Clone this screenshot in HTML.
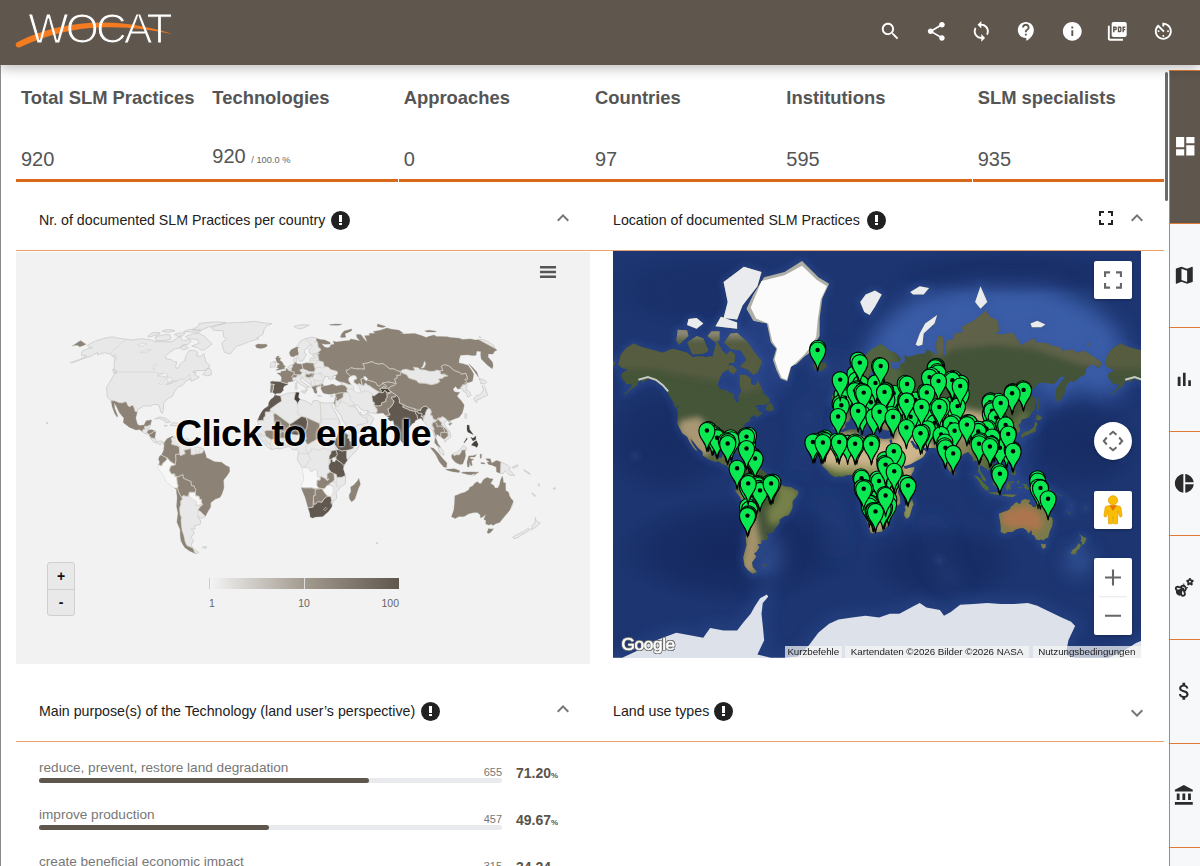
<!DOCTYPE html>
<html lang="en">
<head>
<meta charset="utf-8">
<title>WOCAT SLM Dashboard</title>
<style>
*{box-sizing:border-box;margin:0;padding:0}
html,body{width:1200px;height:866px;overflow:hidden;background:#fff}
body{font-family:"Liberation Sans",sans-serif;color:#212121;position:relative}
.abs{position:absolute}
#hdr{left:0;top:0;width:1200px;height:65px;background:#5f574e;box-shadow:0 3px 12px rgba(0,0,0,.27);z-index:5}
#leftedge{left:0;top:65px;width:1px;height:801px;background:#8a8a8a;z-index:6}
.hic{position:absolute;top:19.700px;width:22.600px;height:22.600px;fill:#fff}
.stat{position:absolute;top:72px;height:110px;width:191.33px;border-bottom:3px solid #d9681a}
.stat h3{position:absolute;left:5px;top:15px;font-size:18.4px;font-weight:bold;color:#555;white-space:nowrap;line-height:22px}
.stat .v{position:absolute;left:5px;top:76px;font-size:20px;color:#555;white-space:nowrap;line-height:22px}
.stat .v small{font-size:9.3px;color:#666;margin-left:0px}
.sech{position:absolute;font-size:14.2px;color:#212121;white-space:nowrap;line-height:18px}
.info{position:absolute;width:19px;height:19px;border-radius:50%;background:#212121}
.info:before{content:"";position:absolute;left:7.800px;top:4.200px;width:3.400px;height:7px;background:#fff}
.info:after{content:"";position:absolute;left:7.800px;top:12.200px;width:3.400px;height:2.200px;background:#fff}
.oline{position:absolute;height:1px;background:#e8a06c}
.chev{position:absolute;width:24px;height:24px;fill:#757575}
#side{left:1169px;top:70px;width:31px;height:796px}
.tab{position:absolute;left:0;width:31px;height:105px;border:1px solid #dd7a33;border-left-width:1.500px;border-right:none;background:#f7f8fa}
.tab svg{position:absolute;left:3.200px;width:22.600px;height:22.600px;fill:#2b2b2b}
.bar{position:absolute;left:39px;width:463px;height:5px;border-radius:3px;background:#e8eaee}
.bar i{position:absolute;left:0;top:0;height:5px;border-radius:3px;background:#5f574e}
.bl{position:absolute;left:39px;font-size:13.6px;color:#777;white-space:nowrap;line-height:16px}
.bn{position:absolute;width:40px;text-align:right;left:462px;font-size:11px;color:#777;line-height:14px}
.bp{position:absolute;left:516px;font-size:14px;font-weight:bold;color:#5a534b;white-space:nowrap;line-height:16px}
.bp small{font-size:8px;font-weight:bold}
.gat{top:394.5px;height:12.5px;background:rgba(245,245,245,.72);font-size:9.800px;line-height:12.500px;color:#222;text-align:center;white-space:nowrap;letter-spacing:-.05px}
</style>
</head>
<body>
<div id="hdr" class="abs">
<svg class="abs" style="left:0;top:0" width="200" height="64" viewBox="0 0 200 64">
<defs><mask id="wm" maskUnits="userSpaceOnUse" x="0" y="0" width="200" height="64"><text x="28.300" y="43.100" font-family="'Liberation Sans',sans-serif" font-size="42.600" letter-spacing="-2.800" fill="#fff" stroke="#000" stroke-width="1.150">WOCAT</text></mask></defs>
<path d="M15.800,45.600 C15.200,43.600 16.400,42.400 18.600,41.400 C44,29 74,22.300 104,22.600 C130,23 152,27.600 173,34.200 C152,29.800 130,26.600 104,27.200 C76,27.600 46,35 20.500,46.900 C18.400,47.900 16.400,47.500 15.800,45.600Z" fill="#f47b20"/>
<rect x="0" y="0" width="200" height="64" fill="#fff" mask="url(#wm)"/>
</svg>

<svg class="hic" style="left:879.1px" viewBox="0 0 24 24"><path d="M15.5 14h-.79l-.28-.27C15.41 12.590 16 11.110 16 9.500 16 5.910 13.090 3 9.500 3S3 5.910 3 9.500 5.910 16 9.500 16c1.610 0 3.090-.59 4.230-1.570l.27.280v.79l5 4.990L20.490 19l-4.990-5zm-6 0C7.010 14 5 11.990 5 9.500S7.010 5 9.500 5 14 7.010 14 9.500 11.990 14 9.500 14z"/></svg>
<svg class="hic" style="left:925.3px" viewBox="0 0 24 24"><path d="M18 16.080c-.76 0-1.440.3-1.960.77L8.910 12.700c.05-.23.090-.46.090-.7s-.04-.47-.09-.7l7.050-4.110c.54.5 1.250.81 2.040.81 1.660 0 3-1.340 3-3s-1.340-3-3-3-3 1.340-3 3c0 .24.040.47.090.7L8.040 9.810C7.500 9.310 6.790 9 6 9c-1.660 0-3 1.340-3 3s1.340 3 3 3c.79 0 1.500-.31 2.040-.81l7.120 4.160c-.05.21-.08.43-.08.65 0 1.610 1.310 2.920 2.920 2.920 1.610 0 2.920-1.310 2.920-2.920s-1.310-2.920-2.920-2.920z"/></svg>
<svg class="hic" style="left:970.3px" viewBox="0 0 24 24"><path d="M12 4V1L8 5l4 4V6c3.310 0 6 2.690 6 6 0 1.010-.25 1.970-.7 2.800l1.460 1.460C19.540 15.030 20 13.570 20 12c0-4.420-3.580-8-8-8zm0 14c-3.310 0-6-2.690-6-6 0-1.010.25-1.970.7-2.800L5.240 7.740C4.460 8.970 4 10.430 4 12c0 4.420 3.580 8 8 8v3l4-4-4-4v3z"/></svg>
<svg class="hic" style="left:1015.3px" viewBox="0 0 24 24"><path d="M11.500 2C6.810 2 3 5.810 3 10.500S6.810 19 11.500 19h.5v3c4.860-2.340 8-7 8-11.500C20 5.810 16.190 2 11.500 2zm1 14.500h-2v-2h2v2zm0-3.500h-2c0-3.250 3-3 3-5 0-1.100-.9-2-2-2s-2 .9-2 2h-2c0-2.210 1.790-4 4-4s4 1.790 4 4c0 2.500-3 2.750-3 5z"/></svg>
<svg class="hic" style="left:1060.6px" viewBox="0 0 24 24"><path d="M12 2C6.480 2 2 6.480 2 12s4.480 10 10 10 10-4.480 10-10S17.520 2 12 2zm1 15h-2v-6h2v6zm0-8h-2V7h2v2z"/></svg>
<svg class="hic" style="left:1106.2px" viewBox="0 0 24 24"><path d="M20 2H8c-1.100 0-2 .9-2 2v12c0 1.100.9 2 2 2h12c1.100 0 2-.9 2-2V4c0-1.100-.9-2-2-2zm-8.500 7.500c0 .83-.67 1.500-1.500 1.500H9v2H7.500V7H10c.83 0 1.500.67 1.500 1.500v1zm5 2c0 .83-.67 1.500-1.500 1.500h-2.500V7H15c.83 0 1.500.67 1.500 1.500v3zm4-3H19v1h1.500V11H19v2h-1.500V7h3v1.500zM9 9.500h1v-1H9v1zM4 6H2v14c0 1.100.9 2 2 2h14v-2H4V6zm10 5.500h1v-3h-1v3z"/></svg>
<svg class="hic" style="left:1151.8px" viewBox="0 0 24 24"><path d="M11 17c0 .55.450 1 1 1s1-.45 1-1-.45-1-1-1-1 .45-1 1zm0-14v4h2V5.080c3.390.49 6 3.390 6 6.920 0 3.870-3.130 7-7 7s-7-3.130-7-7c0-1.680.59-3.220 1.580-4.420L12 13l1.410-1.410-6.800-6.800v.020C4.420 6.450 3 9.050 3 12c0 4.970 4.020 9 9 9 4.970 0 9-4.030 9-9s-4.030-9-9-9h-1zm7 9c0-.55-.45-1-1-1s-1 .45-1 1 .45 1 1 1 1-.45 1-1zM6 12c0 .55.450 1 1 1s1-.45 1-1-.45-1-1-1-1 .45-1 1z"/></svg>

</div>
<div id="leftedge" class="abs"></div>

<div class="stat" style="left:16px"><h3>Total SLM Practices</h3><div class="v">920</div></div>
<div class="stat" style="left:207.33px"><h3>Technologies</h3><div class="v" style="top:73px">920 <small>/ 100.0 %</small></div></div>
<div class="stat" style="left:398.67px"><h3>Approaches</h3><div class="v">0</div></div>
<div class="stat" style="left:590px"><h3>Countries</h3><div class="v">97</div></div>
<div class="stat" style="left:781.33px"><h3>Institutions</h3><div class="v">595</div></div>
<div class="stat" style="left:972.67px;width:191.33px"><h3>SLM specialists</h3><div class="v">935</div></div>
<div class="abs" style="left:398px;top:178px;width:1px;height:6px;background:#fff"></div>
<div class="abs" style="left:972px;top:178px;width:1px;height:6px;background:#fff"></div>

<!-- section 1 headers -->
<div class="sech" style="left:39px;top:211px">Nr. of documented SLM Practices per country</div>
<div class="info" style="left:331px;top:211px"></div>
<svg class="chev" style="left:551px;top:206px" viewBox="0 0 24 24"><path d="M7.41 15.41L12 10.83l4.59 4.58L18 14l-6-6-6 6z"/></svg>
<div class="sech" style="left:613px;top:211px">Location of documented SLM Practices</div>
<div class="info" style="left:867px;top:211px"></div>
<svg class="chev" style="left:1125px;top:206px" viewBox="0 0 24 24"><path d="M7.41 15.41L12 10.83l4.59 4.58L18 14l-6-6-6 6z"/></svg>
<svg class="abs" style="left:1093.500px;top:205.500px;width:24px;height:24px;fill:#222" viewBox="0 0 24 24"><path d="M7 14H5v5h5v-2H7v-3zm-2-4h2V7h3V5H5v5zm12 7h-3v2h5v-5h-2v3zM14 5v2h3v3h2V5h-5z"/></svg>
<div class="oline" style="left:16px;top:250px;width:1148px"></div>

<!-- choropleth -->
<div id="cmap" class="abs" style="left:16px;top:252px;width:574px;height:411.500px;background:#f2f2f2">
<svg class="abs" style="left:0;top:0" width="574" height="411" viewBox="0 0 574 411">
<defs><clipPath id="landclip"><path d="M71.4,93.2 79.8,88.9 87.9,86.4 96.3,84.8 101.6,86.1 110.0,87.2 115.7,88.1 125.2,86.7 131.1,87.4 135.9,88.1 138.6,89.9 144.6,89.6 150.0,89.9 156.0,89.6 164.4,83.8 165.7,87.4 167.9,88.9 172.4,87.4 175.2,88.9 172.3,92.3 167.4,92.6 164.1,95.7 158.3,97.2 153.6,100.4 149.3,104.1 150.0,106.8 155.2,107.6 157.9,109.6 160.9,110.1 159.6,113.8 160.4,116.3 162.5,115.9 164.5,111.8 168.8,108.5 169.7,104.4 173.2,98.3 178.5,98.5 181.8,100.4 180.6,103.9 184.7,104.4 187.6,101.5 189.0,106.0 189.9,110.1 192.9,112.6 193.7,115.1 188.2,118.5 180.1,118.5 176.8,120.1 180.2,120.1 178.7,122.7 183.3,125.3 179.2,127.7 175.2,129.4 174.5,127.0 169.6,129.2 167.8,132.1 165.3,133.9 162.2,134.7 158.8,139.1 156.6,144.3 152.4,146.4 147.8,150.4 147.3,158.3 146.3,161.4 144.6,160.0 143.9,156.5 142.7,153.0 139.9,152.5 136.9,152.5 134.2,154.4 132.1,153.9 127.7,153.9 121.9,157.4 119.7,166.1 121.4,172.2 123.5,173.6 128.1,173.1 130.2,168.7 135.6,167.9 134.1,174.0 131.7,177.5 135.9,177.8 139.9,179.2 138.7,186.2 141.1,189.7 145.0,188.8 148.3,190.6 147.9,192.8 146.4,190.6 144.0,192.7 141.8,191.4 138.7,190.6 135.5,187.9 133.1,182.7 127.9,181.0 123.7,177.5 119.8,178.0 113.3,175.2 107.2,170.5 107.9,166.1 103.6,160.9 100.2,153.9 98.0,150.4 98.7,156.5 101.6,163.5 101.3,165.3 98.9,161.8 96.2,154.8 95.2,148.7 91.4,145.2 90.8,139.9 90.6,135.1 93.6,130.4 97.0,124.7 98.3,121.2 101.2,120.1 98.2,116.8 98.2,110.9 98.9,105.2 96.2,104.1 94.6,102.0 88.5,100.7 81.4,102.8 81.5,100.4 74.6,104.4 66.9,106.8 58.3,110.1 54.1,110.8 63.5,107.6 70.8,103.9 65.5,103.6 65.7,100.4 66.4,98.8 70.2,97.2 76.4,95.7 72.6,94.9Z M194.9,75.6 202.0,73.2 211.6,70.9 225.9,70.4 238.3,69.4 248.7,70.9 256.0,71.7 250.8,73.8 248.0,77.6 247.0,82.4 240.8,85.9 242.9,86.7 233.2,89.6 225.4,92.9 220.4,94.1 214.2,102.0 208.6,100.4 206.8,95.7 205.8,91.1 210.7,86.7 207.3,84.5 207.4,78.9 197.6,78.2Z M182.5,81.4 188.8,84.5 192.0,88.1 196.3,91.9 189.4,97.2 185.3,98.3 181.9,95.7 175.8,94.1 183.4,91.1 181.3,87.4 172.9,86.7 169.7,84.5 177.0,81.7Z M175.8,77.6 185.6,78.0 192.5,75.0 205.9,72.0 210.2,70.4 198.8,69.9 183.1,71.4 182.4,74.4Z M139.7,84.5 139.6,88.9 149.0,88.6 154.5,87.4 154.3,83.1 149.7,82.4Z M131.9,83.8 132.4,85.2 143.2,82.4 144.2,80.7 137.0,80.6Z M167.5,79.6 183.5,80.3 185.0,78.7 174.1,77.3Z M146.0,79.3 152.1,80.3 158.9,78.9 155.5,77.6 149.0,77.8Z M158.2,82.4 162.6,84.5 166.5,83.8 169.2,81.0 162.9,81.0Z M165.2,94.1 169.2,93.4 172.4,95.7 167.4,98.0 164.8,96.5Z M186.6,122.4 191.3,123.9 195.4,122.7 195.3,119.3 193.4,115.9 190.5,117.6Z M96.6,117.1 99.7,118.5 100.2,121.2 97.6,120.5Z M138.8,167.0 143.6,164.9 149.5,166.1 154.7,170.1 149.7,170.7 149.1,168.7 143.4,166.5Z M154.1,173.1 157.3,170.7 162.5,171.4 163.2,173.1 159.2,174.0Z M148.2,173.3 151.2,173.5 150.8,174.3 148.2,174.0Z M165.1,173.1 167.3,173.3 167.1,174.0 165.0,174.0Z M148.3,190.6 151.3,186.5 156.8,184.1 157.4,186.2 159.9,184.5 162.8,187.1 168.9,187.1 172.0,186.7 174.9,190.6 179.4,194.9 184.0,195.3 187.8,197.5 190.1,203.7 190.1,205.4 193.2,207.1 198.6,209.8 205.5,210.3 210.2,213.8 213.3,215.0 213.7,219.4 210.5,224.6 207.5,228.1 207.9,235.9 205.9,242.1 203.9,245.5 199.5,246.9 194.6,250.8 194.6,255.1 191.9,259.5 189.1,264.8 185.7,266.5 181.8,264.8 184.8,269.1 184.1,272.6 178.6,273.5 179.1,276.9 175.2,276.9 178.2,280.0 176.6,283.8 174.4,285.5 177.6,288.1 175.1,293.2 177.1,296.5 183.0,300.4 179.3,301.5 173.6,299.0 168.9,295.7 164.7,289.0 164.2,282.1 164.2,277.8 160.9,270.0 162.0,261.3 160.6,254.3 161.2,245.5 160.3,237.3 155.9,234.2 150.4,229.8 147.3,222.9 141.9,215.9 142.3,212.9 143.8,210.6 142.5,207.1 143.7,204.0 145.6,202.8 147.7,198.4 148.2,193.2Z M186.4,294.9 190.3,294.5 190.2,296.2 186.8,296.0Z M258.7,142.9 264.4,144.0 271.6,141.2 281.7,140.3 283.2,140.8 282.2,145.2 284.2,147.4 289.8,149.0 295.5,152.5 297.0,148.8 301.1,148.5 304.2,150.1 310.2,151.3 315.0,150.8 317.8,150.8 315.5,153.2 318.2,158.3 321.1,163.7 323.7,168.7 324.2,172.8 327.2,178.3 333.6,183.6 333.8,185.3 335.7,187.2 339.5,185.8 345.9,184.8 345.5,188.8 341.4,197.5 335.3,203.7 331.4,208.5 328.3,213.3 327.1,216.7 328.1,219.4 329.6,223.7 329.4,231.6 323.7,235.9 320.1,240.3 320.8,246.4 316.6,249.9 315.7,255.1 312.4,259.5 306.8,264.4 299.4,265.1 296.5,266.1 294.3,265.1 293.8,261.3 291.9,255.1 289.2,245.5 285.6,236.8 285.3,233.3 288.2,227.2 287.3,221.1 286.1,215.9 281.2,207.1 282.0,203.7 282.4,199.3 280.9,197.5 276.6,197.9 274.2,194.4 268.8,195.3 264.2,197.0 260.4,196.3 255.7,197.7 252.6,195.8 249.6,193.4 247.0,189.7 244.2,186.5 241.7,183.9 240.5,179.7 242.4,176.6 242.2,171.4 241.5,168.7 243.2,164.4 245.6,160.0 247.9,157.0 252.4,153.9 252.8,150.4 254.8,147.3 257.8,145.2Z M343.0,226.3 344.5,232.5 342.7,235.9 338.9,247.3 335.6,249.9 333.2,246.4 333.1,242.9 334.9,239.4 334.4,235.1 337.6,233.0 340.8,229.5Z M254.4,137.9 254.9,133.0 254.4,130.1 256.1,129.2 262.4,129.6 265.2,129.6 265.6,125.3 263.9,123.0 260.9,121.2 265.3,120.7 264.9,119.0 267.6,119.3 269.4,117.1 271.9,116.1 273.5,113.4 276.4,112.6 278.4,111.8 277.8,109.3 277.7,106.8 280.5,105.7 280.7,108.5 280.3,110.9 281.6,111.8 285.8,111.9 291.2,110.6 293.2,111.1 294.3,109.3 293.9,106.8 295.7,105.7 298.1,106.5 297.8,104.7 296.5,103.3 300.8,102.8 304.3,102.1 302.3,101.0 295.7,102.1 293.4,100.9 293.1,97.2 296.6,94.1 295.2,92.9 293.0,93.4 292.5,95.2 288.4,98.3 288.4,100.9 290.5,102.3 288.1,106.0 287.7,108.1 285.7,109.3 284.0,109.3 281.8,105.2 280.6,103.1 277.3,105.0 274.4,104.1 273.4,100.4 275.1,97.7 279.2,95.7 282.3,92.2 284.3,89.2 288.4,86.9 292.7,85.9 295.6,85.1 298.6,85.5 301.7,86.7 304.2,87.5 308.9,88.1 314.1,90.4 314.1,92.0 309.0,92.2 305.3,91.6 308.7,95.2 311.8,95.7 314.4,94.8 314.4,92.9 318.3,92.3 317.1,89.2 320.2,89.9 327.7,88.9 333.7,88.4 334.6,86.9 339.0,87.8 344.1,88.9 340.8,85.2 340.6,82.4 345.0,82.7 346.8,85.2 350.2,89.6 350.9,88.9 348.6,83.8 353.6,83.4 353.2,81.5 359.3,81.3 357.3,79.6 364.6,78.2 371.0,76.0 375.7,77.3 383.1,78.2 387.4,81.3 383.7,81.3 387.7,82.0 392.8,81.8 398.7,81.4 406.0,83.8 410.2,85.5 412.5,84.6 418.0,83.1 420.3,84.4 431.2,84.8 434.4,85.5 443.2,86.2 446.5,87.4 454.3,86.9 459.4,88.1 465.0,87.4 470.0,88.4 478.6,94.1 477.8,95.2 481.0,98.0 478.3,99.6 477.0,102.0 472.1,102.0 472.2,105.2 476.3,110.1 477.1,113.4 476.3,116.8 471.8,113.4 465.1,106.8 464.7,102.0 464.9,99.6 460.7,99.1 460.0,103.3 456.6,103.6 451.4,102.8 444.4,103.3 443.1,107.6 442.8,110.9 446.8,111.8 452.2,113.4 455.0,117.6 457.6,121.8 457.2,125.3 456.4,129.2 452.9,130.4 450.6,131.3 451.2,134.7 449.6,136.5 453.6,139.9 455.2,143.4 451.9,145.2 450.0,140.8 447.0,139.1 445.9,136.3 441.7,137.0 439.6,134.2 436.9,137.3 438.8,139.9 443.8,140.5 442.1,142.6 441.1,144.3 445.2,148.7 448.2,153.0 447.3,157.4 446.1,161.2 443.1,165.3 439.6,166.5 434.6,168.4 433.4,170.0 430.7,167.7 428.3,171.4 429.9,174.9 434.1,180.1 435.1,184.8 431.8,187.2 428.9,190.2 428.4,187.4 425.2,185.3 422.2,183.1 420.6,182.0 419.9,186.2 421.9,191.4 426.7,198.4 428.2,203.0 427.0,203.0 423.7,200.5 422.0,194.9 418.6,190.6 418.9,185.3 416.6,178.3 414.6,176.6 411.3,177.5 410.8,173.1 407.1,168.7 404.8,166.1 401.9,167.3 399.1,168.7 398.6,170.5 396.4,171.4 392.9,176.2 389.9,178.3 390.3,182.7 390.0,187.4 387.7,189.9 386.7,191.3 384.7,188.5 382.0,182.7 379.3,176.6 377.9,171.9 377.4,168.4 374.1,169.1 371.6,166.5 373.4,165.3 370.3,164.0 368.1,162.1 367.2,161.1 360.0,161.4 353.3,160.7 351.8,158.3 348.2,159.0 344.2,156.7 341.5,153.0 339.2,153.0 338.9,154.1 342.2,158.8 343.7,162.1 344.6,160.2 345.6,163.2 349.0,163.0 351.7,159.7 352.5,162.8 355.8,164.4 357.7,166.3 355.2,172.2 351.4,174.9 347.0,177.5 341.9,181.0 336.3,183.1 334.0,183.2 332.6,179.2 331.4,175.7 329.1,171.4 326.3,167.9 325.3,163.9 322.3,160.0 319.5,156.5 319.0,153.9 317.8,150.8 318.7,147.8 319.5,142.6 319.6,141.2 315.1,142.2 311.5,142.0 307.8,141.3 306.6,139.9 304.9,136.8 305.4,134.7 308.4,133.9 311.9,133.5 316.6,132.1 320.4,133.9 325.9,133.0 325.5,130.9 321.6,128.7 319.2,127.0 320.6,123.2 315.8,124.6 317.7,126.5 313.8,127.8 312.2,126.1 313.4,125.1 309.8,124.2 308.4,126.6 307.2,129.0 306.4,131.3 307.6,133.4 304.5,134.2 301.3,134.2 301.5,135.6 299.7,134.7 301.1,139.1 300.6,141.7 298.3,140.8 297.3,137.3 294.9,134.7 294.8,132.5 291.8,130.4 288.6,128.2 287.1,126.6 286.1,125.8 284.3,126.5 284.6,128.3 286.6,129.9 289.9,132.3 293.6,135.3 291.4,134.7 290.9,136.5 291.6,137.3 290.6,139.1 289.9,139.1 290.1,135.6 287.1,133.9 284.6,132.5 282.0,130.4 279.5,128.0 277.8,129.0 274.3,129.7 271.8,130.1 271.8,132.5 268.4,133.9 266.9,136.5 267.6,137.9 266.3,139.6 264.4,141.2 260.8,141.3 259.2,142.6 258.0,141.2 256.5,140.5 254.4,140.8Z M64.6,88.4 67.4,90.4 69.8,91.9 69.9,92.6 63.8,94.9 61.8,93.4 58.3,93.4 56.0,94.1Z M259.9,118.3 262.6,118.0 269.0,116.4 268.0,115.9 269.5,113.9 267.7,113.4 267.0,111.3 265.1,109.0 263.5,108.5 264.8,105.9 262.3,105.7 263.3,104.2 261.1,104.2 259.7,106.3 260.3,108.5 261.1,110.4 263.4,111.8 263.4,112.9 261.4,112.9 261.8,114.6 260.4,115.4 263.3,116.1Z M254.1,115.4 259.0,114.8 259.5,111.8 259.9,110.4 257.6,109.6 254.3,111.4 254.8,113.4Z M239.3,93.4 241.9,92.0 246.4,92.3 250.5,92.3 251.3,94.1 248.3,95.7 244.6,96.6 240.6,95.7Z M285.3,139.1 289.6,138.7 289.3,141.3 285.3,139.8Z M278.9,133.9 281.0,133.9 281.0,137.0 279.3,137.3Z M279.4,131.3 280.6,130.4 280.6,133.0 279.6,132.8Z M301.5,143.4 305.6,143.8 305.2,144.3 301.6,144.0Z M314.3,144.3 317.4,143.3 316.8,144.5 314.7,145.0Z M457.8,147.8 460.8,150.8 461.1,147.8 465.2,146.6 467.2,145.0 469.7,144.3 471.8,143.1 470.0,139.1 469.8,136.1 467.1,133.4 465.9,134.4 467.8,138.2 465.4,140.8 464.6,142.6 460.6,143.4 458.6,145.5Z M464.5,132.1 464.8,130.4 463.0,126.3 469.3,128.7 470.9,130.1 468.8,132.1 465.4,131.3Z M462.7,125.3 460.8,120.1 456.3,115.1 452.7,111.8 457.7,118.5Z M448.7,165.3 449.1,161.4 450.6,162.1 450.1,167.0Z M432.5,171.9 435.0,170.5 435.9,171.4 434.0,173.6Z M390.2,191.4 390.7,188.5 393.3,192.3 392.2,194.8 390.7,194.6Z M451.0,177.5 451.1,173.1 453.2,173.3 453.6,177.5 457.4,182.7 454.2,181.3 451.7,180.1Z M455.3,193.2 457.4,190.4 460.3,188.5 462.2,192.3 460.9,195.5 458.5,194.1Z M454.7,185.3 457.1,186.2 459.9,183.9 459.8,187.4 457.0,189.0Z M447.8,190.7 450.9,185.7 451.3,187.1 448.2,191.1Z M414.3,195.6 417.7,196.3 422.2,200.9 427.2,207.1 430.9,211.0 430.5,215.5 427.7,215.0 423.3,209.8 419.9,202.8Z M429.5,217.3 434.5,217.1 438.4,216.7 443.7,218.8 443.3,220.4 436.7,219.7 431.4,218.3Z M435.7,202.8 439.2,200.7 441.8,199.8 445.5,195.8 447.6,193.2 450.9,196.3 449.0,199.3 449.6,203.7 448.8,206.8 446.7,212.0 444.0,212.4 439.8,210.6 437.2,208.0 435.7,205.4Z M451.6,215.0 451.0,210.6 452.7,204.0 457.3,203.7 460.4,202.6 458.9,204.9 453.5,204.9 455.0,207.1 457.8,207.0 455.3,208.9 456.3,213.3 454.8,213.8 453.8,210.1 453.0,215.0Z M469.7,206.8 474.3,206.8 475.7,211.2 480.4,208.4 485.0,209.9 491.1,212.9 494.8,215.9 492.3,217.3 495.2,219.4 498.6,223.7 493.4,222.9 489.1,218.8 487.4,221.5 484.3,221.3 480.6,219.9 480.2,215.0 475.6,213.1 472.6,212.4 471.1,210.3 474.2,209.4 471.9,208.9Z M445.9,220.2 450.5,219.9 456.7,219.9 459.8,220.2 462.8,220.1 458.0,223.2 451.9,222.5 445.8,220.9Z M464.2,201.9 465.8,202.8 465.0,206.8 464.1,205.4Z M464.9,210.6 469.2,211.0 468.0,212.0 464.9,211.5Z M496.4,215.0 501.9,212.7 502.1,214.1 497.0,216.4Z M507.7,217.6 513.6,221.1 514.2,222.5 508.4,219.0Z M516.1,240.7 519.8,243.8 518.9,244.5 515.8,241.7Z M537.5,235.9 539.6,235.9 539.0,237.2 537.2,237.0Z M522.1,231.6 523.1,231.9 523.4,234.2 522.6,233.9Z M438.9,243.8 438.6,250.8 437.9,257.8 435.5,264.8 439.2,266.5 442.8,264.6 448.0,264.6 452.7,261.8 457.6,260.6 461.4,260.4 464.1,262.7 464.8,266.1 466.9,264.8 469.9,262.3 467.8,267.5 469.9,268.2 469.8,272.1 472.8,273.1 475.6,272.1 476.6,273.5 480.2,271.5 483.6,270.5 486.8,266.5 489.7,263.0 494.2,257.8 496.9,252.5 497.3,249.0 495.0,246.4 493.4,243.8 492.6,240.3 489.7,238.6 489.5,233.3 489.6,231.1 487.3,230.4 487.1,227.2 486.3,224.3 484.6,228.1 483.6,232.5 481.9,235.9 479.1,235.9 477.6,233.3 474.5,231.6 477.2,226.9 474.5,226.7 471.1,225.5 468.3,226.9 466.5,229.0 465.4,231.6 463.1,231.6 461.8,229.8 459.4,230.7 456.6,233.9 453.7,235.4 452.9,237.7 448.9,240.3 444.6,241.5 441.4,242.9Z M472.6,276.4 474.7,277.1 477.5,276.8 474.6,280.4 472.2,281.4 471.1,280.4Z M519.3,265.6 520.1,268.2 521.4,269.6 524.3,271.2 521.5,273.8 518.5,276.1 514.8,278.0 515.0,276.8 516.8,275.2 515.6,274.0 518.5,271.7 519.2,269.6Z M512.6,276.1 513.3,278.1 508.1,281.9 505.5,282.6 502.5,285.4 499.0,286.6 496.4,285.5 500.9,282.6 506.2,280.4 509.2,278.3Z M278.0,74.4 281.7,73.2 288.2,72.6 293.2,73.2 289.0,75.2 285.5,76.9 281.3,76.3Z M324.3,85.2 325.7,81.7 328.2,78.9 335.9,76.9 335.4,78.9 328.9,81.7 329.8,85.2 326.8,85.6Z M361.0,74.4 361.7,72.0 369.8,74.4 366.5,75.6Z M408.7,78.9 412.8,78.2 420.5,79.2 418.5,79.9 411.2,79.9Z M313.1,72.8 319.2,72.0 326.0,72.2 323.0,73.2 315.3,73.2Z M463.1,85.2 463.5,84.5 465.2,85.5 464.1,85.5Z M30.7,170.1 32.0,170.8 30.9,172.2 30.4,171.4Z M360.2,290.7 362.1,291.0 361.4,291.8 360.1,291.7Z"/></clipPath></defs>
<path d="M71.4,93.2 79.8,88.9 87.9,86.4 96.3,84.8 101.6,86.1 110.0,87.2 115.7,88.1 125.2,86.7 131.1,87.4 135.9,88.1 138.6,89.9 144.6,89.6 150.0,89.9 156.0,89.6 164.4,83.8 165.7,87.4 167.9,88.9 172.4,87.4 175.2,88.9 172.3,92.3 167.4,92.6 164.1,95.7 158.3,97.2 153.6,100.4 149.3,104.1 150.0,106.8 155.2,107.6 157.9,109.6 160.9,110.1 159.6,113.8 160.4,116.3 162.5,115.9 164.5,111.8 168.8,108.5 169.7,104.4 173.2,98.3 178.5,98.5 181.8,100.4 180.6,103.9 184.7,104.4 187.6,101.5 189.0,106.0 189.9,110.1 192.9,112.6 193.7,115.1 188.2,118.5 180.1,118.5 176.8,120.1 180.2,120.1 178.7,122.7 183.3,125.3 179.2,127.7 175.2,129.4 174.5,127.0 169.6,129.2 167.8,132.1 165.3,133.9 162.2,134.7 158.8,139.1 156.6,144.3 152.4,146.4 147.8,150.4 147.3,158.3 146.3,161.4 144.6,160.0 143.9,156.5 142.7,153.0 139.9,152.5 136.9,152.5 134.2,154.4 132.1,153.9 127.7,153.9 121.9,157.4 119.7,166.1 121.4,172.2 123.5,173.6 128.1,173.1 130.2,168.7 135.6,167.9 134.1,174.0 131.7,177.5 135.9,177.8 139.9,179.2 138.7,186.2 141.1,189.7 145.0,188.8 148.3,190.6 147.9,192.8 146.4,190.6 144.0,192.7 141.8,191.4 138.7,190.6 135.5,187.9 133.1,182.7 127.9,181.0 123.7,177.5 119.8,178.0 113.3,175.2 107.2,170.5 107.9,166.1 103.6,160.9 100.2,153.9 98.0,150.4 98.7,156.5 101.6,163.5 101.3,165.3 98.9,161.8 96.2,154.8 95.2,148.7 91.4,145.2 90.8,139.9 90.6,135.1 93.6,130.4 97.0,124.7 98.3,121.2 101.2,120.1 98.2,116.8 98.2,110.9 98.9,105.2 96.2,104.1 94.6,102.0 88.5,100.7 81.4,102.8 81.5,100.4 74.6,104.4 66.9,106.8 58.3,110.1 54.1,110.8 63.5,107.6 70.8,103.9 65.5,103.6 65.7,100.4 66.4,98.8 70.2,97.2 76.4,95.7 72.6,94.9Z M194.9,75.6 202.0,73.2 211.6,70.9 225.9,70.4 238.3,69.4 248.7,70.9 256.0,71.7 250.8,73.8 248.0,77.6 247.0,82.4 240.8,85.9 242.9,86.7 233.2,89.6 225.4,92.9 220.4,94.1 214.2,102.0 208.6,100.4 206.8,95.7 205.8,91.1 210.7,86.7 207.3,84.5 207.4,78.9 197.6,78.2Z M182.5,81.4 188.8,84.5 192.0,88.1 196.3,91.9 189.4,97.2 185.3,98.3 181.9,95.7 175.8,94.1 183.4,91.1 181.3,87.4 172.9,86.7 169.7,84.5 177.0,81.7Z M175.8,77.6 185.6,78.0 192.5,75.0 205.9,72.0 210.2,70.4 198.8,69.9 183.1,71.4 182.4,74.4Z M139.7,84.5 139.6,88.9 149.0,88.6 154.5,87.4 154.3,83.1 149.7,82.4Z M131.9,83.8 132.4,85.2 143.2,82.4 144.2,80.7 137.0,80.6Z M167.5,79.6 183.5,80.3 185.0,78.7 174.1,77.3Z M146.0,79.3 152.1,80.3 158.9,78.9 155.5,77.6 149.0,77.8Z M158.2,82.4 162.6,84.5 166.5,83.8 169.2,81.0 162.9,81.0Z M165.2,94.1 169.2,93.4 172.4,95.7 167.4,98.0 164.8,96.5Z M186.6,122.4 191.3,123.9 195.4,122.7 195.3,119.3 193.4,115.9 190.5,117.6Z M96.6,117.1 99.7,118.5 100.2,121.2 97.6,120.5Z M138.8,167.0 143.6,164.9 149.5,166.1 154.7,170.1 149.7,170.7 149.1,168.7 143.4,166.5Z M154.1,173.1 157.3,170.7 162.5,171.4 163.2,173.1 159.2,174.0Z M148.2,173.3 151.2,173.5 150.8,174.3 148.2,174.0Z M165.1,173.1 167.3,173.3 167.1,174.0 165.0,174.0Z M148.3,190.6 151.3,186.5 156.8,184.1 157.4,186.2 159.9,184.5 162.8,187.1 168.9,187.1 172.0,186.7 174.9,190.6 179.4,194.9 184.0,195.3 187.8,197.5 190.1,203.7 190.1,205.4 193.2,207.1 198.6,209.8 205.5,210.3 210.2,213.8 213.3,215.0 213.7,219.4 210.5,224.6 207.5,228.1 207.9,235.9 205.9,242.1 203.9,245.5 199.5,246.9 194.6,250.8 194.6,255.1 191.9,259.5 189.1,264.8 185.7,266.5 181.8,264.8 184.8,269.1 184.1,272.6 178.6,273.5 179.1,276.9 175.2,276.9 178.2,280.0 176.6,283.8 174.4,285.5 177.6,288.1 175.1,293.2 177.1,296.5 183.0,300.4 179.3,301.5 173.6,299.0 168.9,295.7 164.7,289.0 164.2,282.1 164.2,277.8 160.9,270.0 162.0,261.3 160.6,254.3 161.2,245.5 160.3,237.3 155.9,234.2 150.4,229.8 147.3,222.9 141.9,215.9 142.3,212.9 143.8,210.6 142.5,207.1 143.7,204.0 145.6,202.8 147.7,198.4 148.2,193.2Z M186.4,294.9 190.3,294.5 190.2,296.2 186.8,296.0Z M258.7,142.9 264.4,144.0 271.6,141.2 281.7,140.3 283.2,140.8 282.2,145.2 284.2,147.4 289.8,149.0 295.5,152.5 297.0,148.8 301.1,148.5 304.2,150.1 310.2,151.3 315.0,150.8 317.8,150.8 315.5,153.2 318.2,158.3 321.1,163.7 323.7,168.7 324.2,172.8 327.2,178.3 333.6,183.6 333.8,185.3 335.7,187.2 339.5,185.8 345.9,184.8 345.5,188.8 341.4,197.5 335.3,203.7 331.4,208.5 328.3,213.3 327.1,216.7 328.1,219.4 329.6,223.7 329.4,231.6 323.7,235.9 320.1,240.3 320.8,246.4 316.6,249.9 315.7,255.1 312.4,259.5 306.8,264.4 299.4,265.1 296.5,266.1 294.3,265.1 293.8,261.3 291.9,255.1 289.2,245.5 285.6,236.8 285.3,233.3 288.2,227.2 287.3,221.1 286.1,215.9 281.2,207.1 282.0,203.7 282.4,199.3 280.9,197.5 276.6,197.9 274.2,194.4 268.8,195.3 264.2,197.0 260.4,196.3 255.7,197.7 252.6,195.8 249.6,193.4 247.0,189.7 244.2,186.5 241.7,183.9 240.5,179.7 242.4,176.6 242.2,171.4 241.5,168.7 243.2,164.4 245.6,160.0 247.9,157.0 252.4,153.9 252.8,150.4 254.8,147.3 257.8,145.2Z M343.0,226.3 344.5,232.5 342.7,235.9 338.9,247.3 335.6,249.9 333.2,246.4 333.1,242.9 334.9,239.4 334.4,235.1 337.6,233.0 340.8,229.5Z M254.4,137.9 254.9,133.0 254.4,130.1 256.1,129.2 262.4,129.6 265.2,129.6 265.6,125.3 263.9,123.0 260.9,121.2 265.3,120.7 264.9,119.0 267.6,119.3 269.4,117.1 271.9,116.1 273.5,113.4 276.4,112.6 278.4,111.8 277.8,109.3 277.7,106.8 280.5,105.7 280.7,108.5 280.3,110.9 281.6,111.8 285.8,111.9 291.2,110.6 293.2,111.1 294.3,109.3 293.9,106.8 295.7,105.7 298.1,106.5 297.8,104.7 296.5,103.3 300.8,102.8 304.3,102.1 302.3,101.0 295.7,102.1 293.4,100.9 293.1,97.2 296.6,94.1 295.2,92.9 293.0,93.4 292.5,95.2 288.4,98.3 288.4,100.9 290.5,102.3 288.1,106.0 287.7,108.1 285.7,109.3 284.0,109.3 281.8,105.2 280.6,103.1 277.3,105.0 274.4,104.1 273.4,100.4 275.1,97.7 279.2,95.7 282.3,92.2 284.3,89.2 288.4,86.9 292.7,85.9 295.6,85.1 298.6,85.5 301.7,86.7 304.2,87.5 308.9,88.1 314.1,90.4 314.1,92.0 309.0,92.2 305.3,91.6 308.7,95.2 311.8,95.7 314.4,94.8 314.4,92.9 318.3,92.3 317.1,89.2 320.2,89.9 327.7,88.9 333.7,88.4 334.6,86.9 339.0,87.8 344.1,88.9 340.8,85.2 340.6,82.4 345.0,82.7 346.8,85.2 350.2,89.6 350.9,88.9 348.6,83.8 353.6,83.4 353.2,81.5 359.3,81.3 357.3,79.6 364.6,78.2 371.0,76.0 375.7,77.3 383.1,78.2 387.4,81.3 383.7,81.3 387.7,82.0 392.8,81.8 398.7,81.4 406.0,83.8 410.2,85.5 412.5,84.6 418.0,83.1 420.3,84.4 431.2,84.8 434.4,85.5 443.2,86.2 446.5,87.4 454.3,86.9 459.4,88.1 465.0,87.4 470.0,88.4 478.6,94.1 477.8,95.2 481.0,98.0 478.3,99.6 477.0,102.0 472.1,102.0 472.2,105.2 476.3,110.1 477.1,113.4 476.3,116.8 471.8,113.4 465.1,106.8 464.7,102.0 464.9,99.6 460.7,99.1 460.0,103.3 456.6,103.6 451.4,102.8 444.4,103.3 443.1,107.6 442.8,110.9 446.8,111.8 452.2,113.4 455.0,117.6 457.6,121.8 457.2,125.3 456.4,129.2 452.9,130.4 450.6,131.3 451.2,134.7 449.6,136.5 453.6,139.9 455.2,143.4 451.9,145.2 450.0,140.8 447.0,139.1 445.9,136.3 441.7,137.0 439.6,134.2 436.9,137.3 438.8,139.9 443.8,140.5 442.1,142.6 441.1,144.3 445.2,148.7 448.2,153.0 447.3,157.4 446.1,161.2 443.1,165.3 439.6,166.5 434.6,168.4 433.4,170.0 430.7,167.7 428.3,171.4 429.9,174.9 434.1,180.1 435.1,184.8 431.8,187.2 428.9,190.2 428.4,187.4 425.2,185.3 422.2,183.1 420.6,182.0 419.9,186.2 421.9,191.4 426.7,198.4 428.2,203.0 427.0,203.0 423.7,200.5 422.0,194.9 418.6,190.6 418.9,185.3 416.6,178.3 414.6,176.6 411.3,177.5 410.8,173.1 407.1,168.7 404.8,166.1 401.9,167.3 399.1,168.7 398.6,170.5 396.4,171.4 392.9,176.2 389.9,178.3 390.3,182.7 390.0,187.4 387.7,189.9 386.7,191.3 384.7,188.5 382.0,182.7 379.3,176.6 377.9,171.9 377.4,168.4 374.1,169.1 371.6,166.5 373.4,165.3 370.3,164.0 368.1,162.1 367.2,161.1 360.0,161.4 353.3,160.7 351.8,158.3 348.2,159.0 344.2,156.7 341.5,153.0 339.2,153.0 338.9,154.1 342.2,158.8 343.7,162.1 344.6,160.2 345.6,163.2 349.0,163.0 351.7,159.7 352.5,162.8 355.8,164.4 357.7,166.3 355.2,172.2 351.4,174.9 347.0,177.5 341.9,181.0 336.3,183.1 334.0,183.2 332.6,179.2 331.4,175.7 329.1,171.4 326.3,167.9 325.3,163.9 322.3,160.0 319.5,156.5 319.0,153.9 317.8,150.8 318.7,147.8 319.5,142.6 319.6,141.2 315.1,142.2 311.5,142.0 307.8,141.3 306.6,139.9 304.9,136.8 305.4,134.7 308.4,133.9 311.9,133.5 316.6,132.1 320.4,133.9 325.9,133.0 325.5,130.9 321.6,128.7 319.2,127.0 320.6,123.2 315.8,124.6 317.7,126.5 313.8,127.8 312.2,126.1 313.4,125.1 309.8,124.2 308.4,126.6 307.2,129.0 306.4,131.3 307.6,133.4 304.5,134.2 301.3,134.2 301.5,135.6 299.7,134.7 301.1,139.1 300.6,141.7 298.3,140.8 297.3,137.3 294.9,134.7 294.8,132.5 291.8,130.4 288.6,128.2 287.1,126.6 286.1,125.8 284.3,126.5 284.6,128.3 286.6,129.9 289.9,132.3 293.6,135.3 291.4,134.7 290.9,136.5 291.6,137.3 290.6,139.1 289.9,139.1 290.1,135.6 287.1,133.9 284.6,132.5 282.0,130.4 279.5,128.0 277.8,129.0 274.3,129.7 271.8,130.1 271.8,132.5 268.4,133.9 266.9,136.5 267.6,137.9 266.3,139.6 264.4,141.2 260.8,141.3 259.2,142.6 258.0,141.2 256.5,140.5 254.4,140.8Z M64.6,88.4 67.4,90.4 69.8,91.9 69.9,92.6 63.8,94.9 61.8,93.4 58.3,93.4 56.0,94.1Z M259.9,118.3 262.6,118.0 269.0,116.4 268.0,115.9 269.5,113.9 267.7,113.4 267.0,111.3 265.1,109.0 263.5,108.5 264.8,105.9 262.3,105.7 263.3,104.2 261.1,104.2 259.7,106.3 260.3,108.5 261.1,110.4 263.4,111.8 263.4,112.9 261.4,112.9 261.8,114.6 260.4,115.4 263.3,116.1Z M254.1,115.4 259.0,114.8 259.5,111.8 259.9,110.4 257.6,109.6 254.3,111.4 254.8,113.4Z M239.3,93.4 241.9,92.0 246.4,92.3 250.5,92.3 251.3,94.1 248.3,95.7 244.6,96.6 240.6,95.7Z M285.3,139.1 289.6,138.7 289.3,141.3 285.3,139.8Z M278.9,133.9 281.0,133.9 281.0,137.0 279.3,137.3Z M279.4,131.3 280.6,130.4 280.6,133.0 279.6,132.8Z M301.5,143.4 305.6,143.8 305.2,144.3 301.6,144.0Z M314.3,144.3 317.4,143.3 316.8,144.5 314.7,145.0Z M457.8,147.8 460.8,150.8 461.1,147.8 465.2,146.6 467.2,145.0 469.7,144.3 471.8,143.1 470.0,139.1 469.8,136.1 467.1,133.4 465.9,134.4 467.8,138.2 465.4,140.8 464.6,142.6 460.6,143.4 458.6,145.5Z M464.5,132.1 464.8,130.4 463.0,126.3 469.3,128.7 470.9,130.1 468.8,132.1 465.4,131.3Z M462.7,125.3 460.8,120.1 456.3,115.1 452.7,111.8 457.7,118.5Z M448.7,165.3 449.1,161.4 450.6,162.1 450.1,167.0Z M432.5,171.9 435.0,170.5 435.9,171.4 434.0,173.6Z M390.2,191.4 390.7,188.5 393.3,192.3 392.2,194.8 390.7,194.6Z M451.0,177.5 451.1,173.1 453.2,173.3 453.6,177.5 457.4,182.7 454.2,181.3 451.7,180.1Z M455.3,193.2 457.4,190.4 460.3,188.5 462.2,192.3 460.9,195.5 458.5,194.1Z M454.7,185.3 457.1,186.2 459.9,183.9 459.8,187.4 457.0,189.0Z M447.8,190.7 450.9,185.7 451.3,187.1 448.2,191.1Z M414.3,195.6 417.7,196.3 422.2,200.9 427.2,207.1 430.9,211.0 430.5,215.5 427.7,215.0 423.3,209.8 419.9,202.8Z M429.5,217.3 434.5,217.1 438.4,216.7 443.7,218.8 443.3,220.4 436.7,219.7 431.4,218.3Z M435.7,202.8 439.2,200.7 441.8,199.8 445.5,195.8 447.6,193.2 450.9,196.3 449.0,199.3 449.6,203.7 448.8,206.8 446.7,212.0 444.0,212.4 439.8,210.6 437.2,208.0 435.7,205.4Z M451.6,215.0 451.0,210.6 452.7,204.0 457.3,203.7 460.4,202.6 458.9,204.9 453.5,204.9 455.0,207.1 457.8,207.0 455.3,208.9 456.3,213.3 454.8,213.8 453.8,210.1 453.0,215.0Z M469.7,206.8 474.3,206.8 475.7,211.2 480.4,208.4 485.0,209.9 491.1,212.9 494.8,215.9 492.3,217.3 495.2,219.4 498.6,223.7 493.4,222.9 489.1,218.8 487.4,221.5 484.3,221.3 480.6,219.9 480.2,215.0 475.6,213.1 472.6,212.4 471.1,210.3 474.2,209.4 471.9,208.9Z M445.9,220.2 450.5,219.9 456.7,219.9 459.8,220.2 462.8,220.1 458.0,223.2 451.9,222.5 445.8,220.9Z M464.2,201.9 465.8,202.8 465.0,206.8 464.1,205.4Z M464.9,210.6 469.2,211.0 468.0,212.0 464.9,211.5Z M496.4,215.0 501.9,212.7 502.1,214.1 497.0,216.4Z M507.7,217.6 513.6,221.1 514.2,222.5 508.4,219.0Z M516.1,240.7 519.8,243.8 518.9,244.5 515.8,241.7Z M537.5,235.9 539.6,235.9 539.0,237.2 537.2,237.0Z M522.1,231.6 523.1,231.9 523.4,234.2 522.6,233.9Z M438.9,243.8 438.6,250.8 437.9,257.8 435.5,264.8 439.2,266.5 442.8,264.6 448.0,264.6 452.7,261.8 457.6,260.6 461.4,260.4 464.1,262.7 464.8,266.1 466.9,264.8 469.9,262.3 467.8,267.5 469.9,268.2 469.8,272.1 472.8,273.1 475.6,272.1 476.6,273.5 480.2,271.5 483.6,270.5 486.8,266.5 489.7,263.0 494.2,257.8 496.9,252.5 497.3,249.0 495.0,246.4 493.4,243.8 492.6,240.3 489.7,238.6 489.5,233.3 489.6,231.1 487.3,230.4 487.1,227.2 486.3,224.3 484.6,228.1 483.6,232.5 481.9,235.9 479.1,235.9 477.6,233.3 474.5,231.6 477.2,226.9 474.5,226.7 471.1,225.5 468.3,226.9 466.5,229.0 465.4,231.6 463.1,231.6 461.8,229.8 459.4,230.7 456.6,233.9 453.7,235.4 452.9,237.7 448.9,240.3 444.6,241.5 441.4,242.9Z M472.6,276.4 474.7,277.1 477.5,276.8 474.6,280.4 472.2,281.4 471.1,280.4Z M519.3,265.6 520.1,268.2 521.4,269.6 524.3,271.2 521.5,273.8 518.5,276.1 514.8,278.0 515.0,276.8 516.8,275.2 515.6,274.0 518.5,271.7 519.2,269.6Z M512.6,276.1 513.3,278.1 508.1,281.9 505.5,282.6 502.5,285.4 499.0,286.6 496.4,285.5 500.9,282.6 506.2,280.4 509.2,278.3Z M278.0,74.4 281.7,73.2 288.2,72.6 293.2,73.2 289.0,75.2 285.5,76.9 281.3,76.3Z M324.3,85.2 325.7,81.7 328.2,78.9 335.9,76.9 335.4,78.9 328.9,81.7 329.8,85.2 326.8,85.6Z M361.0,74.4 361.7,72.0 369.8,74.4 366.5,75.6Z M408.7,78.9 412.8,78.2 420.5,79.2 418.5,79.9 411.2,79.9Z M313.1,72.8 319.2,72.0 326.0,72.2 323.0,73.2 315.3,73.2Z M463.1,85.2 463.5,84.5 465.2,85.5 464.1,85.5Z M30.7,170.1 32.0,170.8 30.9,172.2 30.4,171.4Z M360.2,290.7 362.1,291.0 361.4,291.8 360.1,291.7Z" fill="#e8e8e8" stroke="#c6c6c6" stroke-width="0.7" stroke-linejoin="round"/>
<path d="M141.5,212.9 143.1,212.9 145.4,214.1 146.9,211.2 150.7,208.0 151.0,205.6 154.3,209.4 159.3,212.7 154.7,214.1 153.3,218.3 155.3,222.0 158.8,222.0 158.8,224.6 160.5,224.6 161.3,231.6 162.1,233.9 161.4,235.9 160.0,237.7 141.7,229.8Z M172.7,244.2 173.2,240.3 179.3,240.3 179.6,243.8 183.0,244.3 183.7,247.3 185.5,247.5 185.3,250.1 185.5,252.5 182.9,253.4 179.7,252.9 180.8,249.9 176.9,247.3Z M285.1,235.6 288.6,235.8 295.5,235.8 299.3,236.8 302.8,236.1 300.9,233.7 301.0,228.1 304.1,228.1 304.2,224.6 301.4,225.0 300.9,218.1 297.4,217.6 296.6,219.4 294.3,219.4 292.7,215.7 287.3,215.7 284.3,215.9 284.1,235.1Z M305.8,236.5 308.4,236.8 311.3,233.3 313.6,232.8 317.3,234.6 317.4,239.4 316.5,242.6 314.6,244.5 311.6,244.2 309.0,241.2Z" fill="#f7f7f7" clip-path="url(#landclip)"/>
<path d="M301.1,101.2 302.6,106.0 302.5,108.5 307.3,110.1 308.2,114.6 312.2,115.1 314.7,117.6 318.3,118.5 321.1,119.3 321.7,121.8 319.5,123.2 316.7,124.4 317.8,127.0 318.8,128.7 323.2,129.7 327.5,130.4 332.9,132.5 335.7,132.5 335.5,128.7 332.8,125.8 334.5,124.4 332.6,122.2 330.7,121.0 330.2,118.1 332.8,117.6 334.8,115.6 339.9,116.8 344.5,116.8 348.6,117.1 347.9,113.4 346.6,111.8 351.5,110.9 356.1,109.6 359.5,111.4 363.1,112.1 366.6,111.4 368.5,112.6 373.8,116.8 377.8,116.8 381.4,118.8 385.0,119.8 385.7,118.0 390.0,117.1 394.7,118.5 398.7,118.5 397.5,115.1 402.6,115.9 404.0,117.6 409.1,118.0 413.3,119.3 418.0,119.3 420.6,118.1 424.0,118.8 426.9,118.5 425.3,114.3 428.6,112.6 432.8,113.8 438.3,118.5 443.7,120.5 445.6,122.2 449.9,121.2 451.7,127.0 448.9,127.3 451.2,130.4 450.7,131.5 455.2,133.0 458.6,125.3 461.4,125.3 470.7,128.7 475.0,127.0 484.7,121.8 489.4,102.0 426.4,68.0 291.6,68.0 300.6,86.7 299.9,88.1 301.6,90.4 302.1,94.9 305.1,97.6Z M64.6,88.4 67.4,90.4 69.8,91.9 69.9,92.6 63.8,94.9 61.8,93.4 58.3,93.4 56.0,94.1Z M330.7,121.0 332.6,122.2 334.5,124.4 337.1,123.6 339.9,123.9 340.6,126.5 338.1,127.8 337.8,130.4 341.3,132.5 343.2,131.6 345.8,133.4 344.8,127.0 348.1,126.1 352.1,128.2 356.6,129.4 359.8,130.6 361.4,133.5 363.7,134.2 365.8,131.8 366.9,130.8 370.3,130.4 371.5,129.9 375.2,130.4 380.1,131.6 378.5,127.0 381.2,126.1 380.7,123.2 384.2,123.4 385.0,119.8 381.4,118.8 377.8,116.8 373.8,116.8 368.5,112.6 366.6,111.4 363.1,112.1 359.5,111.4 356.1,109.6 351.5,110.9 346.6,111.8 347.9,113.4 348.6,117.1 344.5,116.8 339.9,116.8 334.8,115.6 332.8,117.6 330.2,118.1Z M344.8,127.0 348.1,126.1 352.1,128.2 356.6,129.4 359.8,130.6 361.4,133.5 363.7,134.2 365.8,131.8 367.2,131.6 370.8,134.2 369.4,135.3 367.3,134.2 366.9,135.3 365.0,136.3 363.7,136.8 365.3,138.7 364.7,140.5 363.2,140.1 358.9,137.5 355.5,135.3 353.6,133.4 352.2,133.4 349.4,130.9 347.9,133.4 346.5,133.4Z M366.2,136.3 366.9,135.3 367.3,134.2 369.4,135.3 370.8,134.2 367.2,131.6 365.8,131.8 366.9,130.8 370.3,130.4 371.5,129.9 375.2,130.4 380.1,131.6 378.3,133.4 376.1,134.0 374.5,134.7 372.6,136.3Z M357.7,153.4 362.4,154.1 365.7,153.2 365.5,150.9 369.7,149.5 369.9,146.9 371.2,145.2 370.9,142.2 374.2,141.0 375.4,139.9 380.4,143.4 379.4,144.8 375.3,145.2 376.4,147.8 378.1,149.0 377.4,151.3 375.7,153.9 373.2,156.5 371.8,156.9 372.9,160.9 374.2,162.8 370.5,163.5 369.8,164.4 367.5,163.5 360.2,163.5 361.2,157.9 360.5,156.0Z M386.7,155.1 387.4,152.7 390.7,154.4 394.7,155.8 398.9,156.7 399.2,159.3 394.5,158.6 391.2,156.9Z M373.0,138.2 372.6,136.3 374.5,134.7 376.1,134.0 378.3,133.4 380.1,131.6 378.5,127.0 381.2,126.1 380.7,123.2 384.2,123.4 385.0,119.8 386.5,121.0 390.7,122.7 392.9,126.1 400.2,128.3 402.7,130.9 409.2,131.3 415.5,132.7 421.1,131.3 423.8,129.6 422.4,127.0 426.7,126.1 428.5,124.4 431.6,123.9 428.6,122.2 425.2,122.2 424.3,121.5 424.0,118.8 426.9,118.5 425.3,114.3 428.6,112.6 432.8,113.8 438.3,118.5 443.7,120.5 445.6,122.2 449.9,121.2 451.7,127.0 448.9,127.3 451.2,130.4 450.7,131.5 448.8,133.0 446.6,132.8 446.0,134.2 444.4,135.8 445.6,139.1 449.7,153.0 447.3,163.5 447.6,168.7 438.1,175.7 432.0,175.7 430.8,167.9 428.4,165.6 426.1,164.7 424.4,165.9 421.7,166.3 421.2,168.4 418.6,167.7 417.0,166.6 416.1,163.5 414.3,163.5 415.3,160.0 414.4,157.2 412.4,156.2 410.2,154.1 407.8,154.4 404.6,156.9 405.0,158.4 400.4,157.9 398.9,156.7 394.7,155.8 390.7,154.4 387.4,152.7 383.2,150.8 383.5,148.7 382.7,145.5 380.4,143.4 375.4,139.9Z M415.9,173.1 416.8,170.5 418.9,169.8 420.7,171.4 421.5,174.9 423.4,174.0 426.5,174.9 428.6,178.3 428.5,180.3 425.0,180.4 424.5,182.7 425.0,184.8 422.3,184.5 422.0,189.7 425.4,194.9 423.1,195.5 421.8,194.1 418.3,192.3 418.3,187.9 419.6,184.8 417.7,179.2 417.9,176.6Z M418.9,169.8 421.2,168.4 421.7,166.3 424.2,169.6 425.9,170.8 425.5,173.1 429.8,176.6 431.7,179.2 431.8,180.1 429.6,180.6 428.5,180.3 428.6,178.3 426.5,174.9 423.4,174.0 421.5,174.9 420.7,171.4Z M424.5,182.7 425.0,180.4 428.5,180.3 429.6,180.6 431.8,180.1 432.3,183.9 430.1,185.8 429.0,187.1 426.4,187.1 425.0,184.8Z M412.2,193.2 418.5,195.8 423.3,201.0 428.7,204.5 434.9,201.6 436.7,202.1 438.0,203.8 440.3,202.8 443.4,202.8 444.9,200.5 445.9,197.9 448.9,198.1 455.5,196.7 467.9,196.7 485.1,203.7 484.2,222.0 459.3,225.5 458.1,221.5 451.7,224.6 429.0,219.4 412.4,198.4Z M436.4,223.7 485.7,222.5 488.1,222.2 506.8,226.3 483.3,283.8 419.6,283.8Z M303.9,132.1 306.7,131.8 316.5,131.3 325.9,132.7 328.8,133.5 331.2,136.1 330.8,139.1 331.9,140.5 328.6,140.5 325.8,140.8 322.2,141.2 320.5,142.0 319.6,142.9 318.7,141.7 315.2,142.9 310.8,142.9 306.4,142.0 304.3,138.2 304.0,135.1Z M319.6,142.9 320.5,142.0 322.2,141.2 325.8,140.8 328.6,140.5 327.1,141.9 327.1,145.2 324.2,147.1 321.5,149.0 319.9,148.1 319.8,145.0 319.3,143.4Z M237.3,97.2 251.7,97.2 252.4,91.1 238.6,91.1Z M272.3,106.0 277.4,105.5 281.6,103.6 282.7,102.0 282.1,99.6 281.6,96.5 283.3,95.2 272.0,94.9Z M259.4,118.8 270.0,118.8 269.7,100.4 257.5,100.4 257.0,109.3 260.4,110.9 260.3,115.1Z M260.5,120.5 265.3,118.5 269.4,116.6 270.8,116.6 272.9,118.5 275.4,119.3 278.4,120.1 277.7,122.5 275.5,124.4 276.9,125.4 276.8,128.2 277.9,129.2 277.8,130.4 271.8,131.5 269.4,131.3 264.8,129.9 264.5,129.6 265.2,125.3 260.5,122.7Z M253.4,141.0 256.6,140.6 256.5,139.1 257.3,137.3 257.4,133.9 258.4,132.5 255.7,132.1 254.6,132.1Z M275.3,116.8 275.4,119.3 278.4,120.1 277.7,122.5 280.9,122.9 285.0,122.7 286.0,120.7 283.6,118.1 287.0,116.8 285.8,111.9 281.6,111.4 279.6,110.1 278.0,110.1 278.4,111.8 276.4,112.4 276.5,114.3Z M285.8,111.9 287.0,116.8 288.7,117.6 291.4,118.5 292.9,119.5 297.9,119.8 299.3,117.1 298.2,114.3 297.9,111.8 296.9,111.1 292.6,110.9 291.2,110.4 288.0,111.1Z M275.5,124.4 277.7,122.5 280.4,122.7 281.5,123.9 279.7,125.4 276.9,125.4Z M248.6,179.6 249.7,184.1 255.0,187.4 258.8,187.1 261.2,184.5 263.0,181.0 267.3,179.2 272.7,178.5 273.7,176.6 273.7,171.9 265.8,166.1 260.1,161.8 257.5,161.8 258.9,176.6 259.2,178.3 250.5,178.5Z M288.0,181.0 290.9,175.7 291.6,169.6 289.9,165.3 303.7,171.4 304.0,178.0 301.8,181.0 301.5,183.2 302.3,186.2 300.4,187.6 296.5,189.7 292.7,192.0 291.2,192.3 288.8,187.9 290.4,187.1 289.5,183.2Z M258.8,187.1 261.2,184.5 263.0,181.0 267.3,179.2 268.7,181.8 270.7,183.8 271.0,185.0 268.7,186.2 267.1,186.0 263.0,186.2 263.0,188.5 260.1,188.5Z M301.0,228.1 304.1,228.1 304.2,224.6 306.2,225.1 308.7,226.3 311.7,228.8 313.0,226.7 311.0,227.2 311.2,221.6 314.7,219.9 317.8,221.5 318.4,227.2 317.6,229.1 313.6,231.6 313.6,232.8 311.3,233.3 308.4,236.8 305.8,236.5 302.8,236.1 300.9,233.7Z M285.1,235.6 288.6,235.8 295.5,235.8 299.3,236.8 302.8,236.1 305.7,236.5 299.3,237.3 299.1,243.8 297.5,243.8 297.1,255.0 293.4,255.7 291.7,255.3 282.3,250.8Z M297.5,243.8 299.1,243.8 299.3,237.3 305.7,236.5 309.0,241.2 311.6,244.2 308.0,246.8 306.0,250.3 301.9,249.6 299.5,252.2 298.1,252.2 297.4,248.7Z M307.4,257.1 309.9,255.3 311.0,256.7 309.0,258.8Z M343.0,226.3 344.5,232.5 342.7,235.9 338.9,247.3 335.6,249.9 333.2,246.4 333.1,242.9 334.9,239.4 334.4,235.1 337.6,233.0 340.8,229.5Z M95.1,148.7 98.5,148.7 103.4,150.8 107.5,150.8 107.8,149.9 110.3,149.9 112.1,153.9 114.1,154.8 115.5,153.4 117.3,153.7 118.6,157.4 119.0,159.3 121.6,160.2 122.1,167.0 130.6,166.1 137.3,167.0 135.7,173.1 133.0,173.1 131.4,174.3 128.7,174.3 128.6,175.4 129.2,177.3 127.3,177.3 126.2,180.1 121.8,181.0 105.9,174.0 97.9,167.0 90.8,153.0Z M130.6,180.3 132.4,178.0 136.0,177.1 140.4,178.9 140.0,179.4 137.6,179.6 135.9,181.1 134.3,181.5 133.3,182.9 132.7,182.0 131.7,181.1Z M133.3,182.9 134.3,181.5 135.9,181.1 137.6,179.6 140.0,179.4 140.3,180.1 139.1,186.4 135.6,186.0 132.5,183.1Z M148.1,190.2 144.5,202.6 148.3,204.7 151.0,205.6 154.3,209.4 159.3,212.7 159.9,207.1 159.5,202.4 163.8,202.3 163.2,194.6 159.4,193.2 155.6,192.3 156.0,189.3 155.1,186.2 157.9,184.5 158.4,182.7 147.3,187.9Z M143.0,202.6 145.3,202.6 148.3,204.7 151.0,205.6 150.7,208.0 146.9,211.2 145.4,214.1 143.1,212.9 140.7,210.6 140.6,203.7Z M174.7,196.3 174.0,196.8 167.8,198.2 169.2,201.6 164.6,203.7 163.8,202.3 159.5,202.4 159.9,207.1 159.3,212.7 154.7,214.1 153.3,218.3 155.3,222.0 158.8,222.0 158.8,224.6 160.5,224.6 162.1,224.8 166.9,222.5 167.5,226.3 172.3,228.4 175.1,229.5 175.4,233.7 178.1,233.9 178.6,235.9 179.8,237.2 179.3,240.3 179.6,243.8 183.0,244.3 183.7,247.3 185.5,247.5 185.3,250.1 186.9,252.4 184.1,255.0 181.9,258.1 184.5,259.5 189.3,264.2 194.5,266.5 223.6,266.5 221.0,194.9 187.7,198.1 186.2,201.0 183.1,201.4 180.8,201.9 179.3,201.9 177.7,202.8 174.9,202.4 175.0,199.1Z M160.5,224.6 162.1,224.8 166.9,222.5 167.5,226.3 172.3,228.4 175.1,229.5 175.4,233.7 178.1,233.9 178.6,235.9 179.8,237.2 179.3,240.3 173.2,240.3 172.7,244.2 169.8,244.3 167.2,243.5 165.8,245.2 164.1,242.9 163.0,240.8 161.4,235.9 162.1,233.9 161.3,231.6Z M161.4,235.9 163.0,240.8 164.1,242.9 165.8,245.2 166.4,247.3 164.5,249.0 164.8,252.5 163.6,256.0 163.8,259.5 164.1,263.0 165.3,265.1 165.0,268.2 165.3,272.9 166.1,278.7 167.7,283.0 169.1,289.8 170.8,293.5 176.1,295.7 177.1,296.7 178.8,300.7 181.6,302.3 168.8,302.3 150.0,235.9Z M289.3,123.9 290.4,121.8 292.9,122.2 295.1,121.0 297.4,121.2 298.4,121.8 296.9,124.9 295.2,124.9 293.2,125.4 290.7,125.4Z M295.8,136.1 296.3,133.9 297.1,134.2 299.0,133.5 299.8,133.4 304.4,132.7 304.6,134.2 301.4,135.1 300.3,138.2 301.9,139.8 300.6,142.0 298.4,141.3 297.4,138.6Z M317.8,150.8 318.7,147.8 319.5,145.0 320.8,145.7 319.9,148.1 319.7,150.4 319.3,153.9 319.0,153.9Z" fill="#8c8376" clip-path="url(#landclip)"/>
<path d="M356.1,145.5 356.0,143.4 358.2,143.8 360.7,141.9 363.2,140.1 364.7,140.5 365.5,140.8 367.3,140.5 368.5,138.6 370.1,139.1 370.6,141.2 373.3,140.3 375.4,139.9 374.2,141.0 370.9,142.2 371.2,145.2 369.9,146.9 369.7,149.5 365.5,150.9 365.7,153.2 362.4,154.1 357.7,153.4 358.6,150.9 356.9,149.9Z M369.8,164.4 370.5,163.5 374.2,162.8 372.9,160.9 371.8,156.9 373.2,156.5 375.7,153.9 377.4,151.3 378.1,149.0 376.4,147.8 375.3,145.2 379.4,144.8 380.4,143.4 382.7,145.5 383.5,148.7 383.2,150.8 387.4,152.7 386.7,155.1 391.2,156.9 394.5,158.6 399.2,159.3 398.9,156.7 400.4,157.9 405.0,158.4 404.6,156.9 407.8,154.4 410.2,154.1 412.4,156.2 410.8,157.7 409.8,160.0 408.9,163.7 407.8,163.5 407.9,167.0 406.4,164.0 405.1,164.9 406.0,162.1 405.8,161.4 402.2,161.2 401.8,159.7 399.6,159.5 399.7,161.8 401.0,163.2 401.4,165.4 402.0,167.7 399.5,172.2 391.1,187.6 389.3,189.2 389.1,194.9 375.3,196.7 367.1,167.0Z M399.7,161.8 399.6,159.5 401.8,159.7 402.2,161.2 405.8,161.4 406.0,162.1 405.1,164.9 406.4,164.0 407.4,168.7 406.8,169.6 402.1,168.7 401.4,165.4 401.0,163.2Z M254.1,128.7 264.8,129.7 269.4,131.3 272.1,131.5 272.1,133.9 267.3,139.1 264.4,141.7 259.3,142.7 256.6,140.6 256.5,139.1 257.3,137.3 257.4,133.9 258.4,132.5 255.7,132.1 254.6,132.1 254.0,130.4Z M241.2,168.7 247.6,168.2 247.7,165.3 249.2,164.4 249.3,160.0 254.3,160.0 254.3,157.0 258.4,153.9 262.1,151.3 265.5,149.2 264.7,144.0 258.7,142.6 252.6,149.5 247.2,156.5 240.9,165.3Z M267.6,179.2 272.7,178.5 273.7,176.6 273.7,171.9 276.4,170.8 285.4,164.4 289.9,165.3 291.6,169.6 290.9,175.7 288.0,181.0 288.1,181.5 285.7,182.5 281.1,183.1 278.0,182.7 273.4,181.8 272.8,185.0 270.7,183.8 268.7,181.8Z M322.4,179.6 325.4,179.7 328.5,180.1 332.3,183.6 331.5,186.2 333.4,186.5 333.5,188.8 336.6,190.2 341.2,191.4 336.7,196.7 332.1,198.1 329.0,198.4 326.0,199.1 322.9,197.7 321.3,196.0 318.1,191.4 319.9,186.7 321.3,183.6Z M319.8,197.9 322.9,197.7 326.0,199.1 329.0,198.4 330.6,198.6 330.6,205.4 331.6,208.4 327.8,213.6 325.5,211.0 319.8,207.1 319.8,204.9 321.4,202.4Z M313.0,207.8 315.2,207.1 319.8,207.1 319.8,204.9 321.4,202.4 319.8,197.9 315.2,198.9 314.9,201.4 313.3,204.0Z M314.4,207.3 319.8,207.1 325.5,211.0 327.8,213.6 328.2,217.6 329.4,223.7 325.7,225.3 321.1,225.5 320.1,222.3 317.8,221.5 315.0,220.2 312.8,216.7 312.7,213.3 314.4,210.6Z M291.7,255.3 293.4,255.7 297.1,255.0 297.4,248.7 298.1,252.2 299.5,252.2 301.9,249.6 306.0,250.3 308.0,246.8 311.6,244.2 314.6,244.5 315.5,248.2 315.0,250.6 316.5,252.2 317.7,257.8 307.9,268.2 292.0,268.2 289.6,256.0Z" fill="#61594f" clip-path="url(#landclip)"/>
<path d="M363.7,136.8 365.0,136.3 366.2,136.3 372.6,136.3 373.0,138.2 375.4,139.9 373.3,140.3 370.6,141.2 370.1,139.1 368.5,138.6 367.3,140.5 365.5,140.8 364.7,140.5 365.3,138.7Z M278.3,146.0 279.3,141.7 279.7,139.9 283.9,139.9 284.3,147.4 282.5,149.9 281.4,152.5 280.6,149.4 278.3,147.4Z M452.3,197.5 464.0,197.5 460.8,170.5 449.1,170.5 451.2,184.5 450.1,185.3 447.2,190.9 448.1,191.6 451.8,188.8Z" fill="#45403a" clip-path="url(#landclip)"/>
<path d="M301.1,101.2 302.6,106.0 302.5,108.5 307.3,110.1 308.2,114.6 312.2,115.1 314.7,117.6 318.3,118.5 321.1,119.3 321.7,121.8 319.5,123.2 316.7,124.4 317.8,127.0 318.8,128.7 323.2,129.7 327.5,130.4 332.9,132.5 335.7,132.5 335.5,128.7 332.8,125.8 334.5,124.4 332.6,122.2 330.7,121.0 330.2,118.1 332.8,117.6 334.8,115.6 339.9,116.8 344.5,116.8 348.6,117.1 347.9,113.4 346.6,111.8 351.5,110.9 356.1,109.6 359.5,111.4 363.1,112.1 366.6,111.4 368.5,112.6 373.8,116.8 377.8,116.8 381.4,118.8 385.0,119.8 385.7,118.0 390.0,117.1 394.7,118.5 398.7,118.5 397.5,115.1 402.6,115.9 404.0,117.6 409.1,118.0 413.3,119.3 418.0,119.3 420.6,118.1 424.0,118.8 426.9,118.5 425.3,114.3 428.6,112.6 432.8,113.8 438.3,118.5 443.7,120.5 445.6,122.2 449.9,121.2 451.7,127.0 448.9,127.3 451.2,130.4 450.7,131.5 455.2,133.0 458.6,125.3 461.4,125.3 470.7,128.7 475.0,127.0 484.7,121.8 489.4,102.0 426.4,68.0 291.6,68.0 300.6,86.7 299.9,88.1 301.6,90.4 302.1,94.9 305.1,97.6 301.1,101.2 M330.7,121.0 332.6,122.2 334.5,124.4 337.1,123.6 339.9,123.9 340.6,126.5 338.1,127.8 337.8,130.4 341.3,132.5 343.2,131.6 345.8,133.4 344.8,127.0 348.1,126.1 352.1,128.2 356.6,129.4 359.8,130.6 361.4,133.5 363.7,134.2 365.8,131.8 366.9,130.8 370.3,130.4 371.5,129.9 375.2,130.4 380.1,131.6 378.5,127.0 381.2,126.1 380.7,123.2 384.2,123.4 385.0,119.8 381.4,118.8 377.8,116.8 373.8,116.8 368.5,112.6 366.6,111.4 363.1,112.1 359.5,111.4 356.1,109.6 351.5,110.9 346.6,111.8 347.9,113.4 348.6,117.1 344.5,116.8 339.9,116.8 334.8,115.6 332.8,117.6 330.2,118.1 330.7,121.0 M344.8,127.0 348.1,126.1 352.1,128.2 356.6,129.4 359.8,130.6 361.4,133.5 363.7,134.2 365.8,131.8 367.2,131.6 370.8,134.2 369.4,135.3 367.3,134.2 366.9,135.3 365.0,136.3 363.7,136.8 365.3,138.7 364.7,140.5 363.2,140.1 358.9,137.5 355.5,135.3 353.6,133.4 352.2,133.4 349.4,130.9 347.9,133.4 346.5,133.4 344.8,127.0 M366.2,136.3 366.9,135.3 367.3,134.2 369.4,135.3 370.8,134.2 367.2,131.6 365.8,131.8 366.9,130.8 370.3,130.4 371.5,129.9 375.2,130.4 380.1,131.6 378.3,133.4 376.1,134.0 374.5,134.7 372.6,136.3 366.2,136.3 M363.7,136.8 365.0,136.3 366.2,136.3 372.6,136.3 373.0,138.2 375.4,139.9 373.3,140.3 370.6,141.2 370.1,139.1 368.5,138.6 367.3,140.5 365.5,140.8 364.7,140.5 365.3,138.7 363.7,136.8 M356.1,145.5 356.0,143.4 358.2,143.8 360.7,141.9 363.2,140.1 364.7,140.5 365.5,140.8 367.3,140.5 368.5,138.6 370.1,139.1 370.6,141.2 373.3,140.3 375.4,139.9 374.2,141.0 370.9,142.2 371.2,145.2 369.9,146.9 369.7,149.5 365.5,150.9 365.7,153.2 362.4,154.1 357.7,153.4 358.6,150.9 356.9,149.9 356.1,145.5 M357.7,153.4 362.4,154.1 365.7,153.2 365.5,150.9 369.7,149.5 369.9,146.9 371.2,145.2 370.9,142.2 374.2,141.0 375.4,139.9 380.4,143.4 379.4,144.8 375.3,145.2 376.4,147.8 378.1,149.0 377.4,151.3 375.7,153.9 373.2,156.5 371.8,156.9 372.9,160.9 374.2,162.8 370.5,163.5 369.8,164.4 367.5,163.5 360.2,163.5 361.2,157.9 360.5,156.0 357.7,153.4 M369.8,164.4 370.5,163.5 374.2,162.8 372.9,160.9 371.8,156.9 373.2,156.5 375.7,153.9 377.4,151.3 378.1,149.0 376.4,147.8 375.3,145.2 379.4,144.8 380.4,143.4 382.7,145.5 383.5,148.7 383.2,150.8 387.4,152.7 386.7,155.1 391.2,156.9 394.5,158.6 399.2,159.3 398.9,156.7 400.4,157.9 405.0,158.4 404.6,156.9 407.8,154.4 410.2,154.1 412.4,156.2 410.8,157.7 409.8,160.0 408.9,163.7 407.8,163.5 407.9,167.0 406.4,164.0 405.1,164.9 406.0,162.1 405.8,161.4 402.2,161.2 401.8,159.7 399.6,159.5 399.7,161.8 401.0,163.2 401.4,165.4 402.0,167.7 399.5,172.2 391.1,187.6 389.3,189.2 389.1,194.9 375.3,196.7 367.1,167.0 369.8,164.4 M386.7,155.1 387.4,152.7 390.7,154.4 394.7,155.8 398.9,156.7 399.2,159.3 394.5,158.6 391.2,156.9 386.7,155.1 M399.7,161.8 399.6,159.5 401.8,159.7 402.2,161.2 405.8,161.4 406.0,162.1 405.1,164.9 406.4,164.0 407.4,168.7 406.8,169.6 402.1,168.7 401.4,165.4 401.0,163.2 399.7,161.8 M373.0,138.2 372.6,136.3 374.5,134.7 376.1,134.0 378.3,133.4 380.1,131.6 378.5,127.0 381.2,126.1 380.7,123.2 384.2,123.4 385.0,119.8 386.5,121.0 390.7,122.7 392.9,126.1 400.2,128.3 402.7,130.9 409.2,131.3 415.5,132.7 421.1,131.3 423.8,129.6 422.4,127.0 426.7,126.1 428.5,124.4 431.6,123.9 428.6,122.2 425.2,122.2 424.3,121.5 424.0,118.8 426.9,118.5 425.3,114.3 428.6,112.6 432.8,113.8 438.3,118.5 443.7,120.5 445.6,122.2 449.9,121.2 451.7,127.0 448.9,127.3 451.2,130.4 450.7,131.5 448.8,133.0 446.6,132.8 446.0,134.2 444.4,135.8 445.6,139.1 449.7,153.0 447.3,163.5 447.6,168.7 438.1,175.7 432.0,175.7 430.8,167.9 428.4,165.6 426.1,164.7 424.4,165.9 421.7,166.3 421.2,168.4 418.6,167.7 417.0,166.6 416.1,163.5 414.3,163.5 415.3,160.0 414.4,157.2 412.4,156.2 410.2,154.1 407.8,154.4 404.6,156.9 405.0,158.4 400.4,157.9 398.9,156.7 394.7,155.8 390.7,154.4 387.4,152.7 383.2,150.8 383.5,148.7 382.7,145.5 380.4,143.4 375.4,139.9 373.0,138.2 M415.9,173.1 416.8,170.5 418.9,169.8 420.7,171.4 421.5,174.9 423.4,174.0 426.5,174.9 428.6,178.3 428.5,180.3 425.0,180.4 424.5,182.7 425.0,184.8 422.3,184.5 422.0,189.7 425.4,194.9 423.1,195.5 421.8,194.1 418.3,192.3 418.3,187.9 419.6,184.8 417.7,179.2 417.9,176.6 415.9,173.1 M418.9,169.8 421.2,168.4 421.7,166.3 424.2,169.6 425.9,170.8 425.5,173.1 429.8,176.6 431.7,179.2 431.8,180.1 429.6,180.6 428.5,180.3 428.6,178.3 426.5,174.9 423.4,174.0 421.5,174.9 420.7,171.4 418.9,169.8 M424.5,182.7 425.0,180.4 428.5,180.3 429.6,180.6 431.8,180.1 432.3,183.9 430.1,185.8 429.0,187.1 426.4,187.1 425.0,184.8 424.5,182.7 M421.7,166.3 424.4,165.9 426.1,164.7 428.4,165.6 430.8,167.9 433.9,168.7 436.7,191.4 428.2,190.6 427.9,187.2 429.0,187.1 430.1,185.8 432.3,183.9 431.7,179.2 429.8,176.6 425.5,173.1 425.9,170.8 424.2,169.6 421.7,166.3 M303.9,132.1 306.7,131.8 316.5,131.3 325.9,132.7 328.8,133.5 331.2,136.1 330.8,139.1 331.9,140.5 328.6,140.5 325.8,140.8 322.2,141.2 320.5,142.0 319.6,142.9 318.7,141.7 315.2,142.9 310.8,142.9 306.4,142.0 304.3,138.2 304.0,135.1 303.9,132.1 M319.6,142.9 320.5,142.0 322.2,141.2 325.8,140.8 328.6,140.5 327.1,141.9 327.1,145.2 324.2,147.1 321.5,149.0 319.9,148.1 319.8,145.0 319.3,143.4 319.6,142.9 M260.5,120.5 265.3,118.5 269.4,116.6 270.8,116.6 272.9,118.5 275.4,119.3 278.4,120.1 277.7,122.5 275.5,124.4 276.9,125.4 276.8,128.2 277.9,129.2 277.8,130.4 271.8,131.5 269.4,131.3 264.8,129.9 264.5,129.6 265.2,125.3 260.5,122.7 260.5,120.5 M254.1,128.7 264.8,129.7 269.4,131.3 272.1,131.5 272.1,133.9 267.3,139.1 264.4,141.7 259.3,142.7 256.6,140.6 256.5,139.1 257.3,137.3 257.4,133.9 258.4,132.5 255.7,132.1 254.6,132.1 254.0,130.4 254.1,128.7 M253.4,141.0 256.6,140.6 256.5,139.1 257.3,137.3 257.4,133.9 258.4,132.5 255.7,132.1 254.6,132.1 253.4,141.0 M275.3,116.8 275.4,119.3 278.4,120.1 277.7,122.5 280.9,122.9 285.0,122.7 286.0,120.7 283.6,118.1 287.0,116.8 285.8,111.9 281.6,111.4 279.6,110.1 278.0,110.1 278.4,111.8 276.4,112.4 276.5,114.3 275.3,116.8 M285.8,111.9 287.0,116.8 288.7,117.6 291.4,118.5 292.9,119.5 297.9,119.8 299.3,117.1 298.2,114.3 297.9,111.8 296.9,111.1 292.6,110.9 291.2,110.4 288.0,111.1 285.8,111.9 M275.5,124.4 277.7,122.5 280.4,122.7 281.5,123.9 279.7,125.4 276.9,125.4 275.5,124.4 M241.2,168.7 247.6,168.2 247.7,165.3 249.2,164.4 249.3,160.0 254.3,160.0 254.3,157.0 258.4,153.9 262.1,151.3 265.5,149.2 264.7,144.0 258.7,142.6 252.6,149.5 247.2,156.5 240.9,165.3 241.2,168.7 M278.3,146.0 279.3,141.7 279.7,139.9 283.9,139.9 284.3,147.4 282.5,149.9 281.4,152.5 280.6,149.4 278.3,147.4 278.3,146.0 M248.6,179.6 249.7,184.1 255.0,187.4 258.8,187.1 261.2,184.5 263.0,181.0 267.3,179.2 272.7,178.5 273.7,176.6 273.7,171.9 265.8,166.1 260.1,161.8 257.5,161.8 258.9,176.6 259.2,178.3 250.5,178.5 248.6,179.6 M267.6,179.2 272.7,178.5 273.7,176.6 273.7,171.9 276.4,170.8 285.4,164.4 289.9,165.3 291.6,169.6 290.9,175.7 288.0,181.0 288.1,181.5 285.7,182.5 281.1,183.1 278.0,182.7 273.4,181.8 272.8,185.0 270.7,183.8 268.7,181.8 267.6,179.2 M288.0,181.0 290.9,175.7 291.6,169.6 289.9,165.3 303.7,171.4 304.0,178.0 301.8,181.0 301.5,183.2 302.3,186.2 300.4,187.6 296.5,189.7 292.7,192.0 291.2,192.3 288.8,187.9 290.4,187.1 289.5,183.2 288.0,181.0 M258.8,187.1 261.2,184.5 263.0,181.0 267.3,179.2 268.7,181.8 270.7,183.8 271.0,185.0 268.7,186.2 267.1,186.0 263.0,186.2 263.0,188.5 260.1,188.5 258.8,187.1 M322.4,179.6 325.4,179.7 328.5,180.1 332.3,183.6 331.5,186.2 333.4,186.5 333.5,188.8 336.6,190.2 341.2,191.4 336.7,196.7 332.1,198.1 329.0,198.4 326.0,199.1 322.9,197.7 321.3,196.0 318.1,191.4 319.9,186.7 321.3,183.6 322.4,179.6 M319.8,197.9 322.9,197.7 326.0,199.1 329.0,198.4 330.6,198.6 330.6,205.4 331.6,208.4 327.8,213.6 325.5,211.0 319.8,207.1 319.8,204.9 321.4,202.4 319.8,197.9 M313.0,207.8 315.2,207.1 319.8,207.1 319.8,204.9 321.4,202.4 319.8,197.9 315.2,198.9 314.9,201.4 313.3,204.0 313.0,207.8 M314.4,207.3 319.8,207.1 325.5,211.0 327.8,213.6 328.2,217.6 329.4,223.7 325.7,225.3 321.1,225.5 320.1,222.3 317.8,221.5 315.0,220.2 312.8,216.7 312.7,213.3 314.4,210.6 314.4,207.3 M301.0,228.1 304.1,228.1 304.2,224.6 306.2,225.1 308.7,226.3 311.7,228.8 313.0,226.7 311.0,227.2 311.2,221.6 314.7,219.9 317.8,221.5 318.4,227.2 317.6,229.1 313.6,231.6 313.6,232.8 311.3,233.3 308.4,236.8 305.8,236.5 302.8,236.1 300.9,233.7 301.0,228.1 M285.1,235.6 288.6,235.8 295.5,235.8 299.3,236.8 302.8,236.1 305.7,236.5 299.3,237.3 299.1,243.8 297.5,243.8 297.1,255.0 293.4,255.7 291.7,255.3 282.3,250.8 285.1,235.6 M297.5,243.8 299.1,243.8 299.3,237.3 305.7,236.5 309.0,241.2 311.6,244.2 308.0,246.8 306.0,250.3 301.9,249.6 299.5,252.2 298.1,252.2 297.4,248.7 297.5,243.8 M291.7,255.3 293.4,255.7 297.1,255.0 297.4,248.7 298.1,252.2 299.5,252.2 301.9,249.6 306.0,250.3 308.0,246.8 311.6,244.2 314.6,244.5 315.5,248.2 315.0,250.6 316.5,252.2 317.7,257.8 307.9,268.2 292.0,268.2 289.6,256.0 291.7,255.3 M307.4,257.1 309.9,255.3 311.0,256.7 309.0,258.8 307.4,257.1 M95.1,148.7 98.5,148.7 103.4,150.8 107.5,150.8 107.8,149.9 110.3,149.9 112.1,153.9 114.1,154.8 115.5,153.4 117.3,153.7 118.6,157.4 119.0,159.3 121.6,160.2 122.1,167.0 130.6,166.1 137.3,167.0 135.7,173.1 133.0,173.1 131.4,174.3 128.7,174.3 128.6,175.4 129.2,177.3 127.3,177.3 126.2,180.1 121.8,181.0 105.9,174.0 97.9,167.0 90.8,153.0 95.1,148.7 M130.6,180.3 132.4,178.0 136.0,177.1 140.4,178.9 140.0,179.4 137.6,179.6 135.9,181.1 134.3,181.5 133.3,182.9 132.7,182.0 131.7,181.1 130.6,180.3 M133.3,182.9 134.3,181.5 135.9,181.1 137.6,179.6 140.0,179.4 140.3,180.1 139.1,186.4 135.6,186.0 132.5,183.1 133.3,182.9 M148.1,190.2 144.5,202.6 148.3,204.7 151.0,205.6 154.3,209.4 159.3,212.7 159.9,207.1 159.5,202.4 163.8,202.3 163.2,194.6 159.4,193.2 155.6,192.3 156.0,189.3 155.1,186.2 157.9,184.5 158.4,182.7 147.3,187.9 148.1,190.2 M143.0,202.6 145.3,202.6 148.3,204.7 151.0,205.6 150.7,208.0 146.9,211.2 145.4,214.1 143.1,212.9 140.7,210.6 140.6,203.7 143.0,202.6 M174.7,196.3 174.0,196.8 167.8,198.2 169.2,201.6 164.6,203.7 163.8,202.3 159.5,202.4 159.9,207.1 159.3,212.7 154.7,214.1 153.3,218.3 155.3,222.0 158.8,222.0 158.8,224.6 160.5,224.6 162.1,224.8 166.9,222.5 167.5,226.3 172.3,228.4 175.1,229.5 175.4,233.7 178.1,233.9 178.6,235.9 179.8,237.2 179.3,240.3 179.6,243.8 183.0,244.3 183.7,247.3 185.5,247.5 185.3,250.1 186.9,252.4 184.1,255.0 181.9,258.1 184.5,259.5 189.3,264.2 194.5,266.5 223.6,266.5 221.0,194.9 187.7,198.1 186.2,201.0 183.1,201.4 180.8,201.9 179.3,201.9 177.7,202.8 174.9,202.4 175.0,199.1 174.7,196.3 M160.5,224.6 162.1,224.8 166.9,222.5 167.5,226.3 172.3,228.4 175.1,229.5 175.4,233.7 178.1,233.9 178.6,235.9 179.8,237.2 179.3,240.3 173.2,240.3 172.7,244.2 169.8,244.3 167.2,243.5 165.8,245.2 164.1,242.9 163.0,240.8 161.4,235.9 162.1,233.9 161.3,231.6 160.5,224.6 M161.4,235.9 163.0,240.8 164.1,242.9 165.8,245.2 166.4,247.3 164.5,249.0 164.8,252.5 163.6,256.0 163.8,259.5 164.1,263.0 165.3,265.1 165.0,268.2 165.3,272.9 166.1,278.7 167.7,283.0 169.1,289.8 170.8,293.5 176.1,295.7 177.1,296.7 178.8,300.7 181.6,302.3 168.8,302.3 150.0,235.9 161.4,235.9 M141.5,212.9 143.1,212.9 145.4,214.1 146.9,211.2 150.7,208.0 151.0,205.6 154.3,209.4 159.3,212.7 154.7,214.1 153.3,218.3 155.3,222.0 158.8,222.0 158.8,224.6 160.5,224.6 161.3,231.6 162.1,233.9 161.4,235.9 160.0,237.7 141.7,229.8 141.5,212.9 M172.7,244.2 173.2,240.3 179.3,240.3 179.6,243.8 183.0,244.3 183.7,247.3 185.5,247.5 185.3,250.1 185.5,252.5 182.9,253.4 179.7,252.9 180.8,249.9 176.9,247.3 172.7,244.2 M285.1,235.6 288.6,235.8 295.5,235.8 299.3,236.8 302.8,236.1 300.9,233.7 301.0,228.1 304.1,228.1 304.2,224.6 301.4,225.0 300.9,218.1 297.4,217.6 296.6,219.4 294.3,219.4 292.7,215.7 287.3,215.7 284.3,215.9 284.1,235.1 285.1,235.6 M305.8,236.5 308.4,236.8 311.3,233.3 313.6,232.8 317.3,234.6 317.4,239.4 316.5,242.6 314.6,244.5 311.6,244.2 309.0,241.2 305.8,236.5 M289.3,123.9 290.4,121.8 292.9,122.2 295.1,121.0 297.4,121.2 298.4,121.8 296.9,124.9 295.2,124.9 293.2,125.4 290.7,125.4 289.3,123.9 M295.8,136.1 296.3,133.9 297.1,134.2 299.0,133.5 299.8,133.4 304.4,132.7 304.6,134.2 301.4,135.1 300.3,138.2 301.9,139.8 300.6,142.0 298.4,141.3 297.4,138.6 295.8,136.1 M317.8,150.8 318.7,147.8 319.5,145.0 320.8,145.7 319.9,148.1 319.7,150.4 319.3,153.9 319.0,153.9 317.8,150.8 M281.4,152.5 282.5,149.9 284.3,147.4 304.0,147.8 305.2,170.5 303.7,171.4 289.9,165.3 285.4,164.4 282.3,162.6 281.5,159.1 282.2,156.5 281.4,152.5 M319.0,154.1 321.6,154.3 323.6,152.2 325.0,149.2 329.3,150.9 333.8,154.4 336.5,154.6 338.4,155.7 339.6,155.7 344.0,162.5 345.0,163.2 346.7,165.4 350.5,165.8 351.7,170.5 346.3,172.2 341.8,172.9 338.2,175.4 333.3,175.0 332.6,176.8 328.3,175.7 321.2,158.3 316.4,154.8 319.0,154.1 M110.4,86.9 93.8,101.5 95.4,103.6 100.0,102.8 100.3,109.3 M100.8,120.1 138.8,120.1 139.3,120.7 143.7,121.7 147.3,121.3 151.2,123.9 152.4,125.3 153.3,126.5 151.9,130.4 150.2,132.1 150.9,132.7 156.5,130.8 156.6,129.7 160.6,129.2 163.7,127.0 168.3,127.0 170.7,124.7 172.9,122.9 174.6,123.4 173.9,125.6 174.5,127.0 M126.2,180.1 127.3,177.3 129.2,177.3 128.6,175.4 128.7,174.3 131.4,174.3 131.0,177.6 132.4,178.0 M139.1,186.4 140.2,188.6 139.5,191.1 M148.1,190.2 147.3,192.8 M155.6,192.3 159.4,193.2 163.2,194.6 163.8,202.3 164.6,203.7 169.2,201.6 167.8,198.2 174.0,196.8 174.7,196.3 172.8,194.9 174.9,190.6 M174.9,202.4 177.7,202.8 179.3,201.9 180.8,201.9 179.1,195.8 M183.1,201.4 184.0,195.5 M187.7,198.1 186.2,201.0 M166.4,247.3 165.8,245.2 167.2,243.5 169.8,244.3 172.7,244.2 M179.7,252.9 182.9,253.4 185.5,252.5 186.9,252.4 M181.9,258.1 181.7,262.1 181.9,264.8 M247.6,168.2 241.2,168.7 M254.3,157.0 254.3,160.0 249.3,160.0 M254.3,157.7 260.1,161.8 265.8,166.1 273.7,171.9 276.4,170.8 285.4,164.4 M304.2,150.2 305.1,167.0 323.3,167.0 M303.7,171.4 304.0,178.0 M305.1,167.0 305.2,170.5 303.7,171.4 M323.1,167.0 322.9,174.0 326.1,174.0 323.7,175.7 323.0,179.2 322.4,179.6 M301.8,181.0 304.0,178.0 M318.1,191.4 319.8,197.9 M304.2,190.2 309.6,196.7 314.8,199.1 315.2,198.9 M302.3,186.2 303.5,189.7 304.2,190.2 309.6,188.8 311.9,187.9 314.2,188.3 318.1,191.4 M289.5,183.2 288.1,181.5 M288.8,187.9 287.8,190.6 285.5,193.5 282.7,193.4 280.9,195.5 280.4,197.2 M291.2,192.3 289.7,195.1 289.8,197.5 292.0,201.6 287.8,201.6 284.8,201.6 282.4,201.4 M292.7,192.0 296.5,189.7 M292.0,201.6 295.1,199.3 295.8,196.7 302.0,198.2 305.9,196.7 309.6,196.7 M294.8,207.1 292.3,209.2 289.7,213.8 287.3,215.7 M292.0,201.6 294.8,207.1 M271.5,194.2 271.6,189.7 272.8,185.0 M269.2,194.8 268.2,190.6 267.1,186.0 M263.0,196.7 263.0,188.5 M255.7,197.7 254.2,192.3 255.0,187.4 M249.6,193.4 251.4,190.6 254.2,192.3 M246.8,189.7 249.6,187.9 251.4,190.6 M241.7,183.8 249.7,183.8 M244.3,186.4 246.3,183.8 M242.1,177.3 245.2,176.2 248.6,179.6 M241.6,181.7 245.8,181.7 245.8,182.4 241.5,182.4 M313.0,207.8 314.4,207.3 M312.7,213.3 313.0,207.8 M314.7,219.9 311.2,221.6 M320.1,222.3 320.9,225.5 320.1,230.7 322.0,233.3 321.0,235.1 319.8,230.7 317.6,229.1 M321.1,225.5 325.7,225.3 329.4,223.7 M313.6,232.8 317.3,234.6 M315.0,250.6 315.2,252.2 316.5,252.2 M331.2,136.1 333.9,137.5 335.8,136.5 337.5,138.4 M331.9,140.5 333.3,142.6 334.7,144.1 333.8,146.0 334.8,147.8 338.0,151.3 339.2,153.0 M327.1,145.2 324.7,149.0 323.6,152.2 M325.0,149.2 321.5,149.0 M319.5,148.7 320.0,153.7 M356.0,143.4 355.8,141.5 352.3,139.9 349.2,138.7 346.3,140.1 345.0,140.1 M363.2,140.1 360.7,141.9 358.2,143.8 355.8,141.5 M356.9,149.9 358.6,150.9 357.7,153.4 361.2,157.9 360.0,161.4 M341.3,132.5 343.2,131.6 345.8,133.4 346.5,133.4 M333.5,154.4 337.0,153.0 338.5,153.0 M336.5,154.6 337.7,153.0 338.9,153.9 M346.3,172.2 347.8,175.2 M351.7,170.5 350.5,165.8 351.5,162.1 M345.0,163.2 344.3,162.5 M333.3,175.0 338.2,175.4 341.8,172.9 346.3,172.2 M412.4,156.2 414.4,157.2 415.3,160.0 414.3,163.5 416.1,163.5 417.0,166.6 418.6,167.7 421.2,168.4 M418.9,169.8 416.8,170.5 415.9,173.1 417.9,176.6 417.7,179.2 419.6,184.8 419.0,187.4 M408.9,163.7 407.8,163.5 407.9,167.0 407.4,168.7 M448.8,133.0 449.0,130.4 450.9,131.5 M448.9,139.4 451.4,138.0 M444.4,135.8 446.0,134.2 446.6,132.8 448.8,133.0 M421.8,194.1 423.1,195.5 425.4,194.9 M436.7,202.1 438.0,203.8 440.3,202.8 443.4,202.8 444.9,200.5 445.9,197.9 448.9,198.1 M485.0,209.9 484.3,221.5 M385.0,119.8 386.5,121.0 390.7,122.7 392.9,126.1 400.2,128.3 402.7,130.9 409.2,131.3 415.5,132.7 421.1,131.3 423.8,129.6 422.4,127.0 426.7,126.1 428.5,124.4 431.6,123.9 428.6,122.2 425.2,122.2 424.3,121.5 424.0,118.8 M282.7,102.0 281.6,103.6 281.3,103.8 M295.2,92.9 294.1,90.4 290.8,87.7 289.8,88.1 M299.3,88.1 298.5,89.6 301.6,90.4 302.1,94.9 305.1,97.6 301.4,101.2 M296.2,86.9 294.4,88.6 M302.0,102.9 302.0,106.0 303.1,108.1 301.3,109.0 299.2,108.1 294.1,108.3 M302.0,106.0 298.7,105.2 297.9,105.4 M296.9,111.1 297.9,111.8 300.4,111.3 301.3,109.0 M298.2,114.3 297.9,111.8 M299.3,117.1 298.4,115.8 303.0,115.4 307.8,116.1 308.2,114.6 M297.9,119.8 297.4,121.2 300.6,122.0 303.4,121.3 305.2,121.0 308.5,124.4 308.3,126.5 M305.2,121.0 303.4,121.3 M306.2,126.1 303.4,121.3 M297.4,121.2 295.2,124.9 297.1,127.0 298.5,127.8 298.9,128.7 307.0,129.0 M298.9,128.7 298.8,131.6 299.8,133.4 304.4,132.7 303.9,132.1 306.7,132.1 M304.4,132.7 304.6,134.2 M295.4,131.3 296.3,133.9 297.1,134.2 299.0,133.5 299.8,133.4 M294.6,132.3 295.4,131.3 295.7,130.1 294.0,127.8 293.6,127.1 295.2,124.9 M286.2,125.9 287.3,126.1 288.6,124.4 289.7,124.4 289.9,124.4 293.6,127.1 M286.0,120.7 287.6,120.1 290.3,120.5 291.4,118.5 M283.6,118.1 287.0,116.8 M290.3,120.5 290.4,121.8 292.9,122.2 297.4,121.2 M289.2,121.8 290.4,121.8 M280.4,122.7 285.0,122.7 M289.3,123.9 289.2,121.8 M289.7,124.4 289.3,123.9 M281.5,123.9 283.7,123.6 286.1,124.4 286.2,125.9 M277.8,129.0 276.8,128.2 276.9,125.4 M275.3,116.8 272.9,116.1 271.8,116.1 M275.3,118.3 272.9,118.5 M276.5,112.9 276.5,114.3 275.3,116.8 M278.4,110.3 279.6,110.4 M275.3,118.3 275.4,119.3" fill="none" stroke="#d4d0ca" stroke-width="0.6" clip-path="url(#landclip)"/>
<path d="M332.4,127.0 334.5,124.4 337.7,123.6 340.0,124.4 340.7,127.0 338.1,127.8 337.8,130.4 341.5,133.0 343.5,135.6 344.8,139.9 342.5,141.3 339.4,140.1 337.6,138.2 337.6,134.7 334.9,132.1 333.0,129.6Z M347.6,124.4 349.6,124.4 351.8,127.0 350.3,129.0 348.0,127.0Z M316.4,205.9 319.5,204.9 320.1,207.1 318.6,209.9 316.4,209.4Z M141.3,123.9 148.1,121.0 151.6,122.2 151.4,124.4 147.9,124.4 144.0,124.1Z M143.3,132.1 145.6,132.5 147.5,128.7 150.2,125.6 147.2,126.1 145.0,128.7Z M151.7,125.3 155.6,125.8 156.2,127.8 152.8,130.4 152.1,129.6 151.7,127.0Z M149.8,132.7 154.9,131.3 156.6,130.6 156.1,129.9 160.8,129.2 160.8,128.5 156.4,129.0 155.2,130.6 150.5,131.8Z M405.0,115.9 406.8,114.3 408.1,110.4 408.4,109.0 409.7,111.8 408.2,115.4 406.1,116.3Z M122.1,92.6 128.3,91.1 131.0,91.9 126.5,94.1 122.9,94.1Z M124.3,100.4 130.0,98.0 135.2,97.6 131.1,99.6 126.5,100.7Z M138.3,112.1 140.2,112.3 138.8,117.3 137.5,118.0 137.1,115.1Z" fill="#f2f2f2" stroke="#c6c6c6" stroke-width="0.5"/>
</svg>
<svg class="abs" style="left:524px;top:14px" width="16" height="12" viewBox="0 0 16 12"><path d="M0.5 1.2h15M0.5 6h15M0.5 10.8h15" stroke="#555" stroke-width="2.4" stroke-linecap="round"/></svg>
<div class="abs" style="left:0;top:159px;width:574px;text-align:center;font-size:37.600px;font-weight:bold;color:#000;letter-spacing:-0.600px;line-height:44px;white-space:nowrap;text-shadow:0 0 2px #fff,0 0 3px #fff">Click to enable</div>
<div class="abs" style="left:31px;top:310px;width:28px;height:54px;border:1px solid #cfcfcf;border-radius:3px;background:#e9e9e9"></div>
<div class="abs" style="left:32px;top:336.5px;width:26px;height:1px;background:#cfcfcf"></div>
<div class="abs" style="left:31px;top:311px;width:28px;height:26px;text-align:center;font-size:14px;font-weight:bold;line-height:26px;color:#111">+</div>
<div class="abs" style="left:31px;top:338px;width:28px;height:26px;text-align:center;font-size:14px;font-weight:bold;line-height:24px;color:#111">-</div>
<div class="abs" style="left:193px;top:326px;width:190px;height:11px;background:linear-gradient(90deg,#f5f5f5 0%,#a39b90 50%,#5f574e 100%)"></div>
<div class="abs" style="left:193px;top:326px;width:1px;height:11px;background:#ccc"></div>
<div class="abs" style="left:287.5px;top:326px;width:1px;height:11px;background:#ddd"></div>
<div class="abs" style="left:193px;top:345px;font-size:10.5px;color:#666;line-height:12px">1</div>
<div class="abs" style="left:267px;top:345px;width:42px;text-align:center;font-size:10.5px;color:#666;line-height:12px">10</div>
<div class="abs" style="left:343px;top:345px;width:40px;text-align:right;font-size:10.5px;color:#666;line-height:12px">100</div>

</div>
<!-- google map -->
<div id="gmap" class="abs" style="left:613px;top:251px;width:528px;height:407px;background:#0f1d4e;overflow:hidden">
<svg class="abs" style="left:0;top:0" width="528" height="407" viewBox="0 0 528 407">
<defs>
<filter id="b1" x="-20%" y="-20%" width="140%" height="140%"><feGaussianBlur stdDeviation="0.7"/></filter>
<filter id="b3" x="-20%" y="-20%" width="140%" height="140%"><feGaussianBlur stdDeviation="3"/></filter>
<filter id="b6" x="-20%" y="-20%" width="140%" height="140%"><feGaussianBlur stdDeviation="6"/></filter>
<filter id="b10" x="-30%" y="-30%" width="160%" height="160%"><feGaussianBlur stdDeviation="10"/></filter>
<clipPath id="gland"><path d="M5.2,113.6 7.9,103.5 13.3,97.0 20.7,92.5 29.5,96.2 41.7,99.4 49.8,101.7 59.2,97.8 67.4,99.7 74.1,101.7 79.5,106.1 86.3,105.3 93.0,106.1 99.8,105.3 103.9,89.5 109.3,99.7 113.3,103.5 117.4,99.7 122.1,103.5 121.4,111.6 116.0,112.3 114.7,118.7 109.3,121.7 106.6,127.5 104.5,133.6 107.2,138.0 113.3,139.2 117.4,142.1 120.8,142.8 121.4,147.9 123.5,151.2 125.5,150.7 125.5,145.1 128.2,140.4 126.8,134.2 126.8,123.8 132.9,124.0 137.7,127.5 138.3,133.4 143.1,134.2 144.7,129.4 148.5,136.7 151.2,142.8 155.2,146.3 157.0,149.6 152.5,153.9 144.4,153.9 141.7,156.0 145.1,156.0 144.4,159.0 149.8,162.0 146.4,164.7 143.1,166.6 141.7,163.9 137.7,166.4 136.8,169.5 135.0,171.3 132.3,172.2 130.2,176.6 129.5,181.6 126.2,183.6 122.8,187.3 123.9,194.3 123.5,197.0 121.7,195.8 120.5,192.7 118.7,189.7 116.0,189.2 113.3,189.2 111.3,190.9 109.3,190.4 105.2,190.4 100.8,193.5 100.2,201.0 102.5,206.0 104.5,207.2 108.6,206.7 109.9,203.2 114.7,202.4 114.0,207.5 112.2,210.3 116.0,210.6 119.7,211.7 119.1,217.2 121.4,220.0 124.8,219.3 127.8,220.7 127.5,222.4 126.2,220.7 124.1,222.3 122.1,221.4 119.4,220.7 116.4,218.6 114.0,214.5 109.3,213.1 105.2,210.3 101.8,210.7 95.7,208.5 89.7,204.6 89.7,201.0 84.9,196.5 80.2,190.4 77.2,187.3 79.5,192.7 83.6,198.8 83.6,200.2 80.9,197.3 76.8,191.2 74.1,185.7 69.4,182.5 66.7,177.4 64.2,172.6 64.7,167.7 64.7,161.4 63.7,157.2 66.0,156.0 60.6,151.8 55.9,144.0 51.1,135.5 47.1,133.6 43.0,130.2 34.9,128.0 29.5,131.5 26.8,127.5 24.1,134.2 18.7,138.0 13.3,142.8 9.6,143.7 16.0,139.2 19.4,133.4 13.3,132.9 9.2,127.5 7.9,124.6 9.9,121.7 14.6,118.7 9.2,117.1Z M133.6,57.7 140.4,43.5 151.2,26.2 171.5,21.1 189.0,10.0 205.3,26.2 216.1,32.7 209.3,47.3 206.6,66.9 206.6,85.0 199.9,95.8 202.6,97.8 191.7,105.3 183.6,112.9 178.2,115.5 174.2,130.2 167.4,127.5 163.3,118.7 160.0,108.9 163.3,97.8 157.9,91.6 153.9,72.5 140.4,69.8Z M124.1,81.7 135.0,91.6 141.7,101.7 149.2,110.6 144.4,121.7 140.4,123.8 135.0,118.7 126.8,115.5 133.6,108.9 128.2,99.7 117.4,97.8 111.3,91.6 117.4,82.6Z M110.6,66.9 124.1,68.6 129.5,54.4 144.4,35.3 148.5,21.1 130.9,15.8 110.6,30.9 114.7,50.9Z M74.1,91.6 79.5,103.5 90.3,102.8 95.7,99.7 90.3,87.3 83.6,85.0Z M63.3,89.5 66.0,93.7 75.5,85.0 74.1,79.2 64.7,78.7Z M102.5,75.2 124.1,77.7 124.1,71.4 107.9,65.8Z M74.1,74.1 83.6,77.7 90.3,72.5 83.6,66.9 75.5,68.1Z M94.4,85.0 102.5,91.6 106.6,89.5 106.6,80.2 98.5,80.2Z M114.7,115.5 118.7,113.9 124.1,118.7 120.1,123.2 116.0,120.2Z M152.1,158.6 157.3,160.4 161.0,159.0 160.0,155.0 157.0,150.7 154.6,152.9Z M59.2,152.2 63.3,153.9 65.6,157.2 62.6,156.4Z M117.4,201.7 121.4,199.9 126.8,201.0 132.0,204.3 127.5,204.7 126.8,203.2 121.4,201.3Z M131.7,206.7 134.3,204.7 139.0,205.3 139.8,206.7 136.3,207.5Z M126.4,206.9 129.1,207.0 128.9,207.7 126.6,207.5Z M141.4,206.7 143.5,206.9 143.3,207.5 141.4,207.5Z M127.8,220.7 130.2,217.5 135.0,215.6 135.6,217.2 137.7,215.9 140.4,217.9 145.8,217.9 148.5,217.7 151.2,220.7 155.2,224.1 159.3,224.3 162.7,226.1 164.7,230.8 164.7,232.2 167.4,233.6 172.1,235.6 178.2,236.0 182.3,238.7 185.0,239.6 185.3,243.0 182.3,247.2 179.6,249.9 179.6,256.2 177.5,261.2 175.5,264.2 171.5,265.3 166.7,268.6 166.3,272.4 163.3,276.3 160.0,281.1 156.6,282.8 153.2,281.1 155.2,285.3 153.9,288.7 148.5,289.5 148.1,293.1 144.4,293.1 146.4,296.3 143.7,300.5 141.0,302.4 143.3,305.4 139.0,311.5 139.7,315.9 144.1,321.1 139.7,322.8 135.0,319.3 131.6,314.8 130.2,306.4 132.3,298.6 133.6,294.0 132.7,286.1 135.6,277.9 135.6,271.7 137.3,264.2 137.3,257.4 133.6,254.8 129.1,251.3 126.8,245.8 122.4,240.3 122.8,238.0 124.1,236.3 123.1,233.6 124.1,231.1 125.8,230.2 127.5,226.8 127.8,222.7Z M149.8,313.7 153.9,313.2 153.2,315.4 149.8,315.2Z M224.3,180.3 229.6,181.3 236.4,178.6 245.8,177.8 247.2,178.3 246.1,182.5 247.8,184.6 253.0,186.0 258.0,189.2 259.6,185.9 263.4,185.5 266.1,187.0 271.5,188.1 276.0,187.6 278.5,187.6 276.2,189.8 278.3,194.3 280.6,198.9 282.6,203.2 282.9,206.5 285.3,211.0 290.7,215.2 290.8,216.5 292.5,218.1 295.8,217.0 301.5,216.1 301.0,219.3 297.2,226.1 291.8,230.8 288.4,234.6 285.7,238.3 284.8,241.0 285.7,243.0 287.1,246.5 287.2,252.7 282.3,256.2 279.3,259.8 280.3,264.9 276.6,267.9 276.2,272.4 273.5,276.3 268.8,280.8 262.0,281.4 259.3,282.4 257.3,281.4 256.6,277.9 254.6,272.4 251.9,264.2 248.5,256.9 248.3,254.1 250.7,249.2 249.9,244.4 248.8,240.3 244.5,233.6 245.1,230.8 245.5,227.5 244.2,226.1 240.4,226.4 238.4,223.7 233.7,224.3 229.6,225.7 226.2,225.2 222.2,226.2 219.5,224.8 216.8,222.9 214.5,220.0 212.0,217.5 209.7,215.4 208.6,212.1 210.3,209.6 210.0,205.3 209.3,203.2 210.7,199.5 212.7,195.8 214.7,193.2 218.8,190.4 219.1,187.3 220.8,184.4 223.5,182.5Z M299.0,248.5 300.6,253.4 299.2,256.2 296.5,265.6 293.8,267.9 291.4,264.9 291.1,262.0 292.5,259.1 291.8,255.5 294.5,253.8 297.2,251.0Z M220.1,175.4 220.4,170.4 219.9,167.3 221.5,166.4 227.6,166.8 230.3,166.8 230.7,162.0 228.9,159.4 225.9,157.2 230.3,156.6 229.9,154.6 232.6,155.0 234.5,152.2 237.0,150.9 238.7,147.4 241.8,146.3 243.8,145.1 243.4,141.6 243.4,138.0 246.5,136.2 246.5,140.4 245.8,144.0 247.2,145.1 251.5,145.4 257.3,143.5 259.3,144.2 260.7,141.6 260.7,138.0 262.7,136.2 265.2,137.5 265.2,134.7 264.1,132.3 268.8,131.5 272.9,130.5 270.8,128.6 263.4,130.5 261.1,128.3 261.4,121.7 266.1,115.5 264.7,112.9 262.0,113.9 261.1,117.7 256.0,123.8 255.6,128.3 257.7,130.7 254.6,136.7 253.9,139.9 251.6,141.6 249.9,141.6 247.8,135.5 246.8,132.1 243.1,135.2 240.0,133.6 239.1,127.5 241.1,122.6 245.8,118.7 249.9,111.3 252.6,104.3 258.0,98.6 263.4,95.8 267.2,93.3 270.8,94.6 274.2,97.8 276.9,100.1 282.3,101.7 287.7,107.1 287.1,110.9 281.0,111.3 276.9,109.9 279.6,117.7 283.0,118.7 286.4,116.8 287.1,112.9 291.8,111.6 291.8,104.3 295.2,106.1 304.6,103.5 312.1,102.4 314.1,98.6 318.8,100.9 324.2,103.5 322.9,93.7 324.9,85.0 330.3,85.9 330.3,93.7 331.0,105.3 332.3,103.5 333.7,89.5 340.5,88.2 341.8,82.2 349.9,81.2 349.2,75.2 360.7,69.8 372.9,59.6 377.0,65.8 385.1,69.8 385.8,81.2 381.0,81.2 385.1,83.6 391.8,83.1 399.9,81.7 405.4,89.5 408.1,94.6 412.1,92.1 421.6,87.3 422.3,91.2 435.1,92.5 437.8,94.6 447.3,96.6 449.3,99.7 459.4,98.6 463.5,101.7 471.6,99.7 475.7,102.4 475.7,115.5 473.0,117.7 472.3,123.2 466.9,126.1 462.1,130.2 456.7,130.2 452.7,135.5 451.3,142.8 448.6,147.4 444.6,151.8 443.2,147.4 443.2,138.0 448.6,130.2 452.0,126.1 447.9,125.2 441.9,132.3 437.8,132.9 433.1,131.5 425.0,132.3 418.9,139.2 415.5,144.0 418.9,145.1 422.9,147.4 422.3,152.9 421.6,158.0 418.9,162.0 415.5,166.4 411.4,167.7 408.7,168.6 407.4,172.2 405.0,174.0 407.1,177.4 407.1,180.8 403.3,182.5 403.3,178.3 401.3,176.6 401.6,173.8 397.2,174.5 396.6,171.7 392.5,174.9 393.2,177.4 397.6,178.0 395.2,180.0 393.6,181.6 395.9,185.7 397.2,189.7 395.2,193.5 393.2,196.8 389.8,200.2 386.4,201.3 381.7,202.9 380.3,204.2 378.3,202.3 375.6,205.3 376.6,208.2 379.7,212.4 380.1,216.1 377.0,218.1 374.3,220.4 374.0,218.2 371.3,216.5 368.9,214.8 367.5,213.9 366.6,217.2 368.0,221.4 372.0,226.8 373.2,230.3 372.1,230.3 369.3,228.4 367.9,224.1 365.2,220.7 365.7,216.5 364.4,211.0 362.8,209.6 359.8,210.3 359.8,206.7 357.1,203.2 355.3,201.0 352.6,202.0 349.9,203.2 349.2,204.6 347.2,205.3 343.6,209.3 340.7,211.0 340.7,214.5 340.2,218.2 338.0,220.1 337.1,221.2 335.5,219.0 333.4,214.5 331.5,209.6 330.7,205.7 330.6,202.9 327.6,203.4 325.6,201.3 327.3,200.2 324.6,199.2 322.9,197.6 322.2,196.7 315.7,197.0 309.8,196.4 308.7,194.3 305.3,194.9 301.9,192.9 299.9,189.7 297.9,189.7 297.5,190.6 299.9,194.7 301.0,197.6 301.9,195.9 302.6,198.5 305.7,198.3 308.4,195.5 308.8,198.2 311.7,199.5 313.1,201.1 310.4,206.0 306.9,208.2 302.9,210.3 298.1,213.1 293.1,214.8 291.1,214.9 290.0,211.7 289.1,208.9 287.3,205.3 285.0,202.4 284.4,199.1 281.9,195.8 279.6,192.7 279.3,190.4 278.5,187.6 279.6,184.9 281.0,180.0 281.2,178.6 276.9,179.6 273.5,179.5 270.2,178.8 269.2,177.4 267.9,174.3 268.5,172.2 271.5,171.3 274.9,171.0 279.6,169.5 283.0,171.3 288.4,170.4 288.4,168.2 285.0,165.8 283.0,163.9 285.0,159.6 280.0,161.2 281.6,163.4 277.6,164.9 276.2,163.0 277.6,161.8 274.2,160.8 272.5,163.6 271.0,166.2 269.9,168.6 270.8,170.8 267.7,171.7 264.7,171.7 264.7,173.1 263.1,172.2 264.1,176.6 263.4,179.1 261.4,178.3 260.7,174.9 258.5,172.2 258.7,169.9 256.0,167.7 253.0,165.3 251.6,163.6 250.7,162.6 248.9,163.4 249.1,165.5 251.0,167.1 253.9,169.7 257.3,172.8 255.3,172.2 254.6,174.0 255.3,174.9 254.2,176.6 253.5,176.6 253.9,173.1 251.2,171.3 248.9,169.9 246.5,167.7 244.2,165.1 242.4,166.2 239.1,167.0 236.6,167.3 236.6,169.9 233.4,171.3 231.9,174.0 232.6,175.4 231.4,177.1 229.6,178.6 226.2,178.8 224.7,180.0 223.6,178.6 222.2,178.0 220.3,178.3Z M-11.1,102.4 -4.3,107.1 1.1,110.6 2.5,112.3 -0.9,117.1 -5.7,113.9 -9.7,113.9 -11.1,115.5Z M224.9,153.7 227.6,153.3 234.1,151.4 233.0,150.7 234.6,148.1 232.7,147.4 232.0,144.4 230.0,141.1 228.2,140.4 229.6,136.5 226.9,136.2 228.0,133.9 225.5,133.9 224.2,137.2 224.9,140.4 225.8,143.3 228.2,145.1 228.2,146.7 226.2,146.7 226.6,149.0 225.3,150.1 228.2,150.9Z M218.8,150.1 223.8,149.2 224.2,145.1 224.6,143.3 222.2,142.1 218.8,144.7 219.5,147.4Z M199.9,113.9 202.6,110.9 208.0,111.6 212.7,111.6 213.9,115.5 210.7,118.7 206.6,120.5 201.9,118.7Z M249.2,176.6 253.3,176.2 252.9,178.8 249.2,177.3Z M243.4,171.3 245.4,171.3 245.3,174.5 243.7,174.9Z M243.9,168.6 245.1,167.7 245.0,170.4 244.1,170.3Z M264.1,180.8 267.9,181.1 267.5,181.6 264.2,181.3Z M276.0,181.6 278.9,180.6 278.3,181.8 276.2,182.3Z M407.8,184.9 409.4,187.6 410.8,184.9 415.1,183.8 417.5,182.3 420.2,181.6 422.7,180.5 422.9,176.6 424.3,173.6 423.3,170.8 421.6,171.9 421.3,175.7 417.8,178.3 416.2,180.0 412.1,180.8 409.4,182.8Z M421.6,169.5 422.9,167.7 423.9,163.2 428.3,165.8 429.0,167.3 425.6,169.5 422.9,168.6Z M424.3,162.0 426.0,156.0 425.6,149.6 425.0,145.1 424.3,153.9Z M394.8,200.2 395.9,197.0 397.1,197.6 395.8,201.7Z M379.3,205.7 381.7,204.6 382.4,205.3 380.3,207.2Z M340.2,221.4 340.7,219.0 342.9,222.0 341.8,223.9 340.5,223.8Z M394.9,210.3 395.6,206.7 397.5,206.9 397.2,210.3 399.9,214.5 397.2,213.4 395.2,212.4Z M397.2,222.7 399.3,220.5 402.0,219.0 403.3,222.0 402.0,224.5 399.9,223.4Z M397.2,216.5 399.3,217.2 402.0,215.4 401.6,218.2 399.0,219.4Z M390.8,220.8 393.9,216.8 394.1,217.9 391.2,221.1Z M361.1,224.6 364.1,225.2 367.9,228.7 372.2,233.6 375.6,236.5 375.3,240.1 372.9,239.6 368.9,235.6 365.9,230.2Z M374.5,241.4 379.0,241.3 382.4,241.0 387.1,242.6 386.8,243.9 381.0,243.3 376.3,242.2Z M379.7,230.2 382.8,228.5 385.1,227.9 388.5,224.8 390.5,222.7 393.2,225.2 391.4,227.5 391.8,230.8 391.2,233.3 389.4,237.3 387.1,237.6 383.3,236.3 381.0,234.2 379.7,232.2Z M393.9,239.6 393.2,236.3 394.5,231.1 398.6,230.8 401.3,230.0 399.9,231.8 395.2,231.8 396.6,233.6 399.0,233.4 396.8,234.9 397.9,238.3 396.6,238.7 395.6,235.9 395.1,239.6Z M409.4,233.3 413.5,233.3 414.8,236.7 418.9,234.5 422.9,235.7 428.3,238.0 431.7,240.3 429.7,241.4 432.4,243.0 435.8,246.5 431.0,245.8 427.0,242.6 425.6,244.7 422.9,244.6 419.6,243.5 418.9,239.6 414.8,238.2 412.1,237.6 410.8,236.0 413.5,235.3 411.4,234.9Z M389.1,243.7 393.2,243.5 398.6,243.5 401.3,243.7 404.0,243.6 399.9,246.1 394.5,245.5 389.1,244.3Z M404.7,229.5 406.0,230.2 405.4,233.3 404.5,232.2Z M405.4,236.3 409.1,236.5 408.1,237.3 405.4,236.9Z M433.1,239.6 437.8,237.9 438.1,239.0 433.7,240.7Z M443.2,241.7 448.6,244.4 449.3,245.5 443.9,242.8Z M454.0,260.1 458.1,262.7 457.4,263.3 454.0,261.0Z M472.0,256.2 473.9,256.2 473.6,257.2 472.0,257.1Z M457.5,252.7 458.5,253.0 459.2,254.8 458.4,254.5Z M385.8,262.7 386.7,268.6 387.8,274.7 387.8,281.1 391.8,282.8 394.5,281.0 399.3,281.0 402.7,278.4 406.7,277.3 410.1,277.1 413.5,279.2 415.5,282.4 416.8,281.1 418.6,278.9 418.9,283.8 421.2,284.4 422.9,288.2 426.3,289.2 428.3,288.2 430.1,289.5 432.4,287.6 435.1,286.6 436.0,282.8 437.1,279.5 439.2,274.7 439.8,270.1 439.2,267.1 436.5,264.9 434.4,262.7 433.1,259.8 430.1,258.4 429.0,254.1 428.7,252.3 426.6,251.7 426.0,249.2 425.0,246.9 423.9,249.9 423.6,253.4 422.7,256.2 420.2,256.2 418.5,254.1 415.5,252.7 417.3,249.0 414.8,248.8 411.7,247.9 409.4,249.0 408.1,250.6 407.4,252.7 405.4,252.7 404.0,251.3 402.0,252.0 399.9,254.5 397.6,255.8 397.2,257.7 394.1,259.8 390.5,260.8 387.8,262.0Z M427.9,292.5 430.4,293.2 432.8,292.9 432.4,296.7 430.8,297.8 429.0,296.7Z M465.8,281.9 468.0,284.4 470.0,285.8 473.6,287.3 472.7,289.9 471.5,292.2 469.3,294.1 468.6,292.9 469.2,291.3 467.3,290.1 468.5,287.8 468.0,285.8Z M465.8,292.2 468.0,294.3 465.9,298.4 463.9,299.1 463.2,302.2 460.8,303.6 457.4,302.4 459.4,299.1 462.8,296.7 464.2,294.5Z M247.2,50.9 252.6,43.5 262.0,39.5 268.8,43.5 262.0,55.7 256.6,64.0 251.2,60.9Z M302.6,93.7 306.7,82.6 312.1,72.5 324.2,64.0 321.5,72.5 310.7,82.6 309.4,93.7 305.3,95.0Z M362.1,50.9 367.5,35.3 374.3,50.9 367.5,57.7Z M417.5,72.5 424.3,69.8 432.4,73.6 428.3,76.2 418.9,76.2Z M297.2,41.1 306.7,35.3 316.1,37.0 310.7,43.5 299.9,43.5Z M473.6,93.7 475.7,91.6 475.7,94.6 474.3,94.6Z M21.4,204.3 22.7,204.9 22.1,206.0 21.4,205.3Z M325.3,308.4 327.3,308.8 326.9,309.8 325.6,309.6Z M491.9,113.6 494.6,103.5 500.0,97.0 507.4,92.5 516.2,96.2 528.4,99.4 536.5,101.7 546.0,97.8 554.1,99.7 560.8,101.7 566.2,106.1 573.0,105.3 579.8,106.1 586.5,105.3 590.6,89.5 596.0,99.7 600.0,103.5 604.1,99.7 608.8,103.5 608.2,111.6 602.7,112.3 601.4,118.7 596.0,121.7 593.3,127.5 591.3,133.6 594.0,138.0 600.0,139.2 604.1,142.1 607.5,142.8 608.2,147.9 610.2,151.2 612.2,150.7 612.2,145.1 614.9,140.4 613.6,134.2 613.6,123.8 619.6,124.0 624.4,127.5 625.1,133.4 629.8,134.2 631.4,129.4 635.2,136.7 637.9,142.8 642.0,146.3 643.7,149.6 639.3,153.9 631.1,153.9 628.4,156.0 631.8,156.0 631.1,159.0 636.5,162.0 633.2,164.7 629.8,166.6 628.4,163.9 624.4,166.4 623.6,169.5 621.7,171.3 619.0,172.2 616.9,176.6 616.3,181.6 612.9,183.6 609.5,187.3 610.6,194.3 610.2,197.0 608.4,195.8 607.2,192.7 605.5,189.7 602.7,189.2 600.0,189.2 598.0,190.9 596.0,190.4 591.9,190.4 587.5,193.5 586.9,201.0 589.2,206.0 591.3,207.2 595.3,206.7 596.7,203.2 601.4,202.4 600.7,207.5 599.0,210.3 602.7,210.6 606.4,211.7 605.9,217.2 608.2,220.0 611.5,219.3 614.5,220.7 614.2,222.4 612.9,220.7 610.9,222.3 608.8,221.4 606.1,220.7 603.2,218.6 600.7,214.5 596.0,213.1 591.9,210.3 588.6,210.7 582.5,208.5 576.4,204.6 576.4,201.0 571.7,196.5 566.9,190.4 563.9,187.3 566.2,192.7 570.3,198.8 570.3,200.2 567.6,197.3 563.5,191.2 560.8,185.7 556.1,182.5 553.4,177.4 551.0,172.6 551.4,167.7 551.4,161.4 550.4,157.2 552.7,156.0 547.3,151.8 542.6,144.0 537.9,135.5 533.8,133.6 529.7,130.2 521.6,128.0 516.2,131.5 513.5,127.5 510.8,134.2 505.4,138.0 500.0,142.8 496.3,143.7 502.7,139.2 506.1,133.4 500.0,132.9 495.9,127.5 494.6,124.6 496.6,121.7 501.3,118.7 495.9,117.1Z M620.3,57.7 627.1,43.5 637.9,26.2 658.2,21.1 675.8,10.0 692.0,26.2 702.8,32.7 696.0,47.3 693.3,66.9 693.3,85.0 686.6,95.8 689.3,97.8 678.5,105.3 670.3,112.9 664.9,115.5 660.9,130.2 654.1,127.5 650.1,118.7 646.7,108.9 650.1,97.8 644.7,91.6 640.6,72.5 627.1,69.8Z M610.9,81.7 621.7,91.6 628.4,101.7 635.9,110.6 631.1,121.7 627.1,123.8 621.7,118.7 613.6,115.5 620.3,108.9 614.9,99.7 604.1,97.8 598.0,91.6 604.1,82.6Z M597.3,66.9 610.9,68.6 616.3,54.4 631.1,35.3 635.2,21.1 617.6,15.8 597.3,30.9 601.4,50.9Z M560.8,91.6 566.2,103.5 577.1,102.8 582.5,99.7 577.1,87.3 570.3,85.0Z M550.0,89.5 552.7,93.7 562.2,85.0 560.8,79.2 551.4,78.7Z M589.2,75.2 610.9,77.7 610.9,71.4 594.6,65.8Z M560.8,74.1 570.3,77.7 577.1,72.5 570.3,66.9 562.2,68.1Z M581.1,85.0 589.2,91.6 593.3,89.5 593.3,80.2 585.2,80.2Z M601.4,115.5 605.5,113.9 610.9,118.7 606.8,123.2 602.7,120.2Z M638.8,158.6 644.0,160.4 647.8,159.0 646.7,155.0 643.7,150.7 641.3,152.9Z M546.0,152.2 550.0,153.9 552.3,157.2 549.3,156.4Z M604.1,201.7 608.2,199.9 613.6,201.0 618.7,204.3 614.2,204.7 613.6,203.2 608.2,201.3Z M618.4,206.7 621.0,204.7 625.7,205.3 626.5,206.7 623.0,207.5Z M613.2,206.9 615.9,207.0 615.6,207.7 613.3,207.5Z M628.2,206.7 630.2,206.9 630.1,207.5 628.2,207.5Z M614.5,220.7 616.9,217.5 621.7,215.6 622.4,217.2 624.4,215.9 627.1,217.9 632.5,217.9 635.2,217.7 637.9,220.7 642.0,224.1 646.0,224.3 649.4,226.1 651.4,230.8 651.4,232.2 654.1,233.6 658.9,235.6 664.9,236.0 669.0,238.7 671.7,239.6 672.0,243.0 669.0,247.2 666.3,249.9 666.3,256.2 664.3,261.2 662.2,264.2 658.2,265.3 653.4,268.6 653.0,272.4 650.1,276.3 646.7,281.1 643.3,282.8 639.9,281.1 642.0,285.3 640.6,288.7 635.2,289.5 634.8,293.1 631.1,293.1 633.2,296.3 630.5,300.5 627.8,302.4 630.1,305.4 625.7,311.5 626.4,315.9 630.9,321.1 626.4,322.8 621.7,319.3 618.3,314.8 616.9,306.4 619.0,298.6 620.3,294.0 619.4,286.1 622.4,277.9 622.4,271.7 624.0,264.2 624.0,257.4 620.3,254.8 615.9,251.3 613.6,245.8 609.1,240.3 609.5,238.0 610.9,236.3 609.8,233.6 610.9,231.1 612.5,230.2 614.2,226.8 614.5,222.7Z M636.5,313.7 640.6,313.2 639.9,315.4 636.5,315.2Z M711.0,180.3 716.3,181.3 723.1,178.6 732.5,177.8 733.9,178.3 732.8,182.5 734.6,184.6 739.7,186.0 744.7,189.2 746.3,185.9 750.1,185.5 752.8,187.0 758.2,188.1 762.7,187.6 765.3,187.6 763.0,189.8 765.0,194.3 767.3,198.9 769.3,203.2 769.6,206.5 772.0,211.0 777.4,215.2 777.6,216.5 779.2,218.1 782.6,217.0 788.2,216.1 787.7,219.3 783.9,226.1 778.5,230.8 775.1,234.6 772.4,238.3 771.5,241.0 772.4,243.0 773.8,246.5 773.9,252.7 769.0,256.2 766.1,259.8 767.0,264.9 763.4,267.9 763.0,272.4 760.3,276.3 755.5,280.8 748.8,281.4 746.1,282.4 744.0,281.4 743.4,277.9 741.3,272.4 738.6,264.2 735.2,256.9 735.0,254.1 737.4,249.2 736.6,244.4 735.5,240.3 731.2,233.6 731.9,230.8 732.3,227.5 730.9,226.1 727.1,226.4 725.1,223.7 720.4,224.3 716.3,225.7 712.9,225.2 708.9,226.2 706.2,224.8 703.5,222.9 701.2,220.0 698.7,217.5 696.4,215.4 695.4,212.1 697.0,209.6 696.7,205.3 696.0,203.2 697.4,199.5 699.4,195.8 701.4,193.2 705.5,190.4 705.8,187.3 707.5,184.4 710.2,182.5Z M785.7,248.5 787.3,253.4 785.9,256.2 783.2,265.6 780.5,267.9 778.1,264.9 777.8,262.0 779.2,259.1 778.5,255.5 781.2,253.8 783.9,251.0Z M706.9,175.4 707.1,170.4 706.6,167.3 708.2,166.4 714.3,166.8 717.0,166.8 717.4,162.0 715.6,159.4 712.7,157.2 717.0,156.6 716.6,154.6 719.3,155.0 721.2,152.2 723.8,150.9 725.4,147.4 728.5,146.3 730.5,145.1 730.1,141.6 730.1,138.0 733.2,136.2 733.2,140.4 732.5,144.0 733.9,145.1 738.2,145.4 744.0,143.5 746.1,144.2 747.4,141.6 747.4,138.0 749.4,136.2 751.9,137.5 751.9,134.7 750.8,132.3 755.5,131.5 759.6,130.5 757.6,128.6 750.1,130.5 747.8,128.3 748.1,121.7 752.8,115.5 751.5,112.9 748.8,113.9 747.8,117.7 742.7,123.8 742.3,128.3 744.4,130.7 741.3,136.7 740.7,139.9 738.4,141.6 736.6,141.6 734.6,135.5 733.5,132.1 729.8,135.2 726.7,133.6 725.8,127.5 727.8,122.6 732.5,118.7 736.6,111.3 739.3,104.3 744.7,98.6 750.1,95.8 753.9,93.3 757.6,94.6 760.9,97.8 763.6,100.1 769.0,101.7 774.5,107.1 773.8,110.9 767.7,111.3 763.6,109.9 766.3,117.7 769.7,118.7 773.1,116.8 773.8,112.9 778.5,111.6 778.5,104.3 781.9,106.1 791.4,103.5 798.8,102.4 800.8,98.6 805.5,100.9 811.0,103.5 809.6,93.7 811.6,85.0 817.0,85.9 817.0,93.7 817.7,105.3 819.1,103.5 820.4,89.5 827.2,88.2 828.5,82.2 836.6,81.2 836.0,75.2 847.5,69.8 859.6,59.6 863.7,65.8 871.8,69.8 872.5,81.2 867.7,81.2 871.8,83.6 878.6,83.1 886.7,81.7 892.1,89.5 894.8,94.6 898.8,92.1 908.3,87.3 909.0,91.2 921.8,92.5 924.5,94.6 934.0,96.6 936.0,99.7 946.2,98.6 950.2,101.7 958.3,99.7 962.4,102.4 962.4,115.5 959.7,117.7 959.0,123.2 953.6,126.1 948.9,130.2 943.5,130.2 939.4,135.5 938.0,142.8 935.3,147.4 931.3,151.8 929.9,147.4 929.9,138.0 935.3,130.2 938.7,126.1 934.7,125.2 928.6,132.3 924.5,132.9 919.8,131.5 911.7,132.3 905.6,139.2 902.2,144.0 905.6,145.1 909.7,147.4 909.0,152.9 908.3,158.0 905.6,162.0 902.2,166.4 898.2,167.7 895.5,168.6 894.1,172.2 891.7,174.0 893.8,177.4 893.8,180.8 890.0,182.5 890.0,178.3 888.0,176.6 888.3,173.8 884.0,174.5 883.3,171.7 879.2,174.9 879.9,177.4 884.4,178.0 881.9,180.0 880.3,181.6 882.6,185.7 884.0,189.7 881.9,193.5 879.9,196.8 876.5,200.2 873.1,201.3 868.4,202.9 867.1,204.2 865.0,202.3 862.3,205.3 863.3,208.2 866.4,212.4 866.8,216.1 863.7,218.1 861.0,220.4 860.7,218.2 858.0,216.5 855.6,214.8 854.2,213.9 853.3,217.2 854.8,221.4 858.7,226.8 859.9,230.3 858.8,230.3 856.0,228.4 854.6,224.1 851.9,220.7 852.5,216.5 851.1,211.0 849.5,209.6 846.5,210.3 846.5,206.7 843.8,203.2 842.1,201.0 839.3,202.0 836.6,203.2 836.0,204.6 833.9,205.3 830.3,209.3 827.5,211.0 827.5,214.5 826.9,218.2 824.7,220.1 823.8,221.2 822.2,219.0 820.1,214.5 818.3,209.6 817.4,205.7 817.3,202.9 814.3,203.4 812.3,201.3 814.1,200.2 811.4,199.2 809.6,197.6 808.9,196.7 802.4,197.0 796.5,196.4 795.4,194.3 792.0,194.9 788.6,192.9 786.6,189.7 784.6,189.7 784.2,190.6 786.6,194.7 787.7,197.6 788.6,195.9 789.3,198.5 792.4,198.3 795.1,195.5 795.5,198.2 798.4,199.5 799.9,201.1 797.2,206.0 793.7,208.2 789.6,210.3 784.9,213.1 779.9,214.8 777.8,214.9 776.8,211.7 775.8,208.9 774.0,205.3 771.7,202.4 771.1,199.1 768.6,195.8 766.3,192.7 766.1,190.4 765.3,187.6 766.3,184.9 767.7,180.0 768.0,178.6 763.6,179.6 760.3,179.5 756.9,178.8 755.9,177.4 754.6,174.3 755.3,172.2 758.2,171.3 761.6,171.0 766.3,169.5 769.7,171.3 775.1,170.4 775.1,168.2 771.7,165.8 769.7,163.9 771.7,159.6 766.7,161.2 768.4,163.4 764.3,164.9 763.0,163.0 764.3,161.8 760.9,160.8 759.2,163.6 757.7,166.2 756.6,168.6 757.6,170.8 754.4,171.7 751.5,171.7 751.5,173.1 749.8,172.2 750.8,176.6 750.1,179.1 748.1,178.3 747.4,174.9 745.2,172.2 745.4,169.9 742.7,167.7 739.7,165.3 738.4,163.6 737.4,162.6 735.6,163.4 735.8,165.5 737.7,167.1 740.7,169.7 744.0,172.8 742.0,172.2 741.3,174.0 742.0,174.9 740.9,176.6 740.2,176.6 740.7,173.1 737.9,171.3 735.6,169.9 733.2,167.7 730.9,165.1 729.2,166.2 725.8,167.0 723.3,167.3 723.3,169.9 720.1,171.3 718.6,174.0 719.3,175.4 718.1,177.1 716.3,178.6 712.9,178.8 711.4,180.0 710.4,178.6 708.9,178.0 707.0,178.3Z M475.7,102.4 482.4,107.1 487.8,110.6 489.2,112.3 485.8,117.1 481.1,113.9 477.0,113.9 475.7,115.5Z M711.6,153.7 714.3,153.3 720.8,151.4 719.7,150.7 721.3,148.1 719.4,147.4 718.7,144.4 716.7,141.1 715.0,140.4 716.3,136.5 713.6,136.2 714.7,133.9 712.3,133.9 710.9,137.2 711.6,140.4 712.5,143.3 715.0,145.1 715.0,146.7 712.9,146.7 713.3,149.0 712.0,150.1 715.0,150.9Z M705.5,150.1 710.5,149.2 710.9,145.1 711.3,143.3 708.9,142.1 705.5,144.7 706.2,147.4Z M686.6,113.9 689.3,110.9 694.7,111.6 699.4,111.6 700.6,115.5 697.4,118.7 693.3,120.5 688.6,118.7Z M735.9,176.6 740.0,176.2 739.6,178.8 735.9,177.3Z M730.1,171.3 732.1,171.3 732.0,174.5 730.4,174.9Z M730.6,168.6 731.9,167.7 731.7,170.4 730.8,170.3Z M750.8,180.8 754.6,181.1 754.2,181.6 750.9,181.3Z M762.7,181.6 765.7,180.6 765.0,181.8 763.0,182.3Z M894.5,184.9 896.1,187.6 897.5,184.9 901.8,183.8 904.2,182.3 906.9,181.6 909.4,180.5 909.7,176.6 911.0,173.6 910.1,170.8 908.3,171.9 908.0,175.7 904.5,178.3 902.9,180.0 898.8,180.8 896.1,182.8Z M908.3,169.5 909.7,167.7 910.6,163.2 915.1,165.8 915.7,167.3 912.4,169.5 909.7,168.6Z M911.0,162.0 912.8,156.0 912.4,149.6 911.7,145.1 911.0,153.9Z M881.5,200.2 882.6,197.0 883.8,197.6 882.5,201.7Z M866.0,205.7 868.4,204.6 869.1,205.3 867.1,207.2Z M826.9,221.4 827.5,219.0 829.6,222.0 828.5,223.9 827.2,223.8Z M881.7,210.3 882.3,206.7 884.2,206.9 884.0,210.3 886.7,214.5 884.0,213.4 881.9,212.4Z M884.0,222.7 886.0,220.5 888.7,219.0 890.0,222.0 888.7,224.5 886.7,223.4Z M884.0,216.5 886.0,217.2 888.7,215.4 888.3,218.2 885.7,219.4Z M877.5,220.8 880.6,216.8 880.9,217.9 877.9,221.1Z M847.9,224.6 850.8,225.2 854.6,228.7 859.0,233.6 862.3,236.5 862.1,240.1 859.6,239.6 855.6,235.6 852.6,230.2Z M861.3,241.4 865.7,241.3 869.1,241.0 873.8,242.6 873.6,243.9 867.7,243.3 863.0,242.2Z M866.4,230.2 869.5,228.5 871.8,227.9 875.2,224.8 877.2,222.7 879.9,225.2 878.2,227.5 878.6,230.8 877.9,233.3 876.1,237.3 873.8,237.6 870.0,236.3 867.7,234.2 866.4,232.2Z M880.6,239.6 879.9,236.3 881.3,231.1 885.3,230.8 888.0,230.0 886.7,231.8 881.9,231.8 883.3,233.6 885.7,233.4 883.6,234.9 884.6,238.3 883.3,238.7 882.3,235.9 881.8,239.6Z M896.1,233.3 900.2,233.3 901.5,236.7 905.6,234.5 909.7,235.7 915.1,238.0 918.4,240.3 916.4,241.4 919.1,243.0 922.5,246.5 917.8,245.8 913.7,242.6 912.4,244.7 909.7,244.6 906.3,243.5 905.6,239.6 901.5,238.2 898.8,237.6 897.5,236.0 900.2,235.3 898.2,234.9Z M875.9,243.7 879.9,243.5 885.3,243.5 888.0,243.7 890.7,243.6 886.7,246.1 881.3,245.5 875.9,244.3Z M891.4,229.5 892.8,230.2 892.1,233.3 891.3,232.2Z M892.1,236.3 895.9,236.5 894.8,237.3 892.1,236.9Z M919.8,239.6 924.5,237.9 924.8,239.0 920.5,240.7Z M929.9,241.7 935.3,244.4 936.0,245.5 930.6,242.8Z M940.7,260.1 944.8,262.7 944.1,263.3 940.7,261.0Z M958.7,256.2 960.6,256.2 960.4,257.2 958.7,257.1Z M944.3,252.7 945.2,253.0 945.9,254.8 945.1,254.5Z M872.5,262.7 873.4,268.6 874.5,274.7 874.5,281.1 878.6,282.8 881.3,281.0 886.0,281.0 889.4,278.4 893.4,277.3 896.8,277.1 900.2,279.2 902.2,282.4 903.6,281.1 905.3,278.9 905.6,283.8 907.9,284.4 909.7,288.2 913.0,289.2 915.1,288.2 916.8,289.5 919.1,287.6 921.8,286.6 922.8,282.8 923.8,279.5 925.9,274.7 926.6,270.1 925.9,267.1 923.2,264.9 921.1,262.7 919.8,259.8 916.8,258.4 915.7,254.1 915.5,252.3 913.3,251.7 912.8,249.2 911.7,246.9 910.6,249.9 910.3,253.4 909.4,256.2 906.9,256.2 905.2,254.1 902.2,252.7 904.0,249.0 901.5,248.8 898.4,247.9 896.1,249.0 894.8,250.6 894.1,252.7 892.1,252.7 890.7,251.3 888.7,252.0 886.7,254.5 884.4,255.8 884.0,257.7 880.9,259.8 877.2,260.8 874.5,262.0Z M914.7,292.5 917.1,293.2 919.5,292.9 919.1,296.7 917.5,297.8 915.7,296.7Z M952.5,281.9 954.7,284.4 956.7,285.8 960.4,287.3 959.4,289.9 958.2,292.2 956.0,294.1 955.3,292.9 955.9,291.3 954.0,290.1 955.2,287.8 954.7,285.8Z M952.5,292.2 954.7,294.3 952.6,298.4 950.6,299.1 949.9,302.2 947.5,303.6 944.1,302.4 946.2,299.1 949.5,296.7 950.9,294.5Z M733.9,50.9 739.3,43.5 748.8,39.5 755.5,43.5 748.8,55.7 743.4,64.0 737.9,60.9Z M789.3,93.7 793.4,82.6 798.8,72.5 811.0,64.0 808.3,72.5 797.4,82.6 796.1,93.7 792.0,95.0Z M848.8,50.9 854.2,35.3 861.0,50.9 854.2,57.7Z M904.2,72.5 911.0,69.8 919.1,73.6 915.1,76.2 905.6,76.2Z M783.9,41.1 793.4,35.3 802.8,37.0 797.4,43.5 786.6,43.5Z M960.4,93.7 962.4,91.6 962.4,94.6 961.0,94.6Z M508.1,204.3 509.5,204.9 508.8,206.0 508.1,205.3Z M812.0,308.4 814.1,308.8 813.7,309.8 812.3,309.6Z"/></clipPath>
<g id="pin"><path d="M0,21.3 C-0.4,16.8 -1.7,13.6 -4.2,10.2 C-6.600,6.900 -8,4 -8,0 A8,8 0 1 1 8,0 C8,4 6.600,6.900 4.200,10.200 C1.700,13.600 0.400,16.800 0,21.300Z" fill="#0ae852" stroke="#000" stroke-width="1.1" stroke-linejoin="round"/><circle r="2.2" fill="#000"/></g>
<radialGradient id="deep"><stop offset="0" stop-color="#0f1e50"/><stop offset=".6" stop-color="#0f1e50" stop-opacity=".7"/><stop offset="1" stop-color="#0f1e50" stop-opacity="0"/></radialGradient>
</defs>
<rect width="528" height="407" fill="#1d3672"/>
<g filter="url(#b10)">
<path d="M248.5,112.3 266.1,75.2 299.9,47.3 367.5,32.7 435.1,35.3 482.4,57.7 509.5,85.0 509.5,138.0 491.9,147.4 473.0,138.0 455.4,142.8 435.1,149.6 421.6,149.6 421.6,124.6 248.5,130.2Z" fill="#3a5da8" opacity="1"/>
<path d="M97.1,80.2 151.2,69.8 171.5,135.5 151.2,149.6 137.7,124.6 121.4,112.3Z" fill="#2c4a90" opacity=".7"/>
<path d="M191.7,97.8 245.8,112.3 248.5,145.1 225.5,153.9 216.1,140.4 198.5,121.7Z" fill="#26407f" opacity=".6"/>
<path d="M367.5,221.4 401.3,201.7 410.8,181.6 424.3,180.0 405.4,221.4 421.6,234.9 435.1,248.5 405.4,251.3 374.3,243.0Z" fill="#27458a" opacity=".7"/>
<path d="M137.7,281.1 164.7,284.4 170.1,310.5 162.0,326.4 140.4,328.9Z" fill="#4a72bd" opacity="1"/>
<path d="M317.5,302.4 329.6,304.4 340.5,321.6 345.9,334.2 337.8,334.2 324.2,314.8Z" fill="#3f60a4" opacity=".9"/>
<path d="M454.0,302.4 470.3,298.6 478.4,310.5 464.8,324.0 455.4,314.8Z" fill="#4064aa" opacity=".9"/>
<path d="M391.8,198.8 395.9,173.1 408.1,169.5 405.4,184.9 399.9,198.8Z" fill="#3c5ea6" opacity=".8"/>
<path d="M418.9,145.1 424.3,132.9 441.9,132.9 443.2,149.6 428.3,160.0Z" fill="#33539a" opacity=".8"/>
<path d="M103.9,121.7 126.8,121.7 126.8,149.6 110.6,142.8Z" fill="#2f4f96" opacity=".8"/>
<path d="M178.2,218.6 191.7,189.7 185.0,163.9 194.4,142.8 202.6,153.9 198.5,189.7 189.0,221.4Z" fill="#2b478a" opacity=".5"/>
<path d="M205.3,245.8 216.1,267.1 213.4,300.5 225.5,310.5 225.5,267.1 213.4,243.0Z" fill="#2b478a" opacity=".5"/>
<path d="M306.7,259.8 326.9,274.7 337.8,294.9 326.9,298.6 313.4,277.9Z" fill="#2b478a" opacity=".5"/>
<path d="M735.2,112.3 752.8,75.2 786.6,47.3 854.2,32.7 921.8,35.3 969.1,57.7 996.2,85.0 996.2,138.0 978.6,147.4 959.7,138.0 942.1,142.8 921.8,149.6 908.3,149.6 908.3,124.6 735.2,130.2Z" fill="#3a5da8" opacity="1"/>
<path d="M583.8,80.2 637.9,69.8 658.2,135.5 637.9,149.6 624.4,124.6 608.2,112.3Z" fill="#2c4a90" opacity=".7"/>
<path d="M678.5,97.8 732.5,112.3 735.2,145.1 712.3,153.9 702.8,140.4 685.2,121.7Z" fill="#26407f" opacity=".6"/>
<path d="M854.2,221.4 888.0,201.7 897.5,181.6 911.0,180.0 892.1,221.4 908.3,234.9 921.8,248.5 892.1,251.3 861.0,243.0Z" fill="#27458a" opacity=".7"/>
<path d="M624.4,281.1 651.4,284.4 656.8,310.5 648.7,326.4 627.1,328.9Z" fill="#4a72bd" opacity="1"/>
<path d="M804.2,302.4 816.4,304.4 827.2,321.6 832.6,334.2 824.5,334.2 811.0,314.8Z" fill="#3f60a4" opacity=".9"/>
<path d="M940.7,302.4 957.0,298.6 965.1,310.5 951.6,324.0 942.1,314.8Z" fill="#4064aa" opacity=".9"/>
<path d="M878.6,198.8 882.6,173.1 894.8,169.5 892.1,184.9 886.7,198.8Z" fill="#3c5ea6" opacity=".8"/>
<path d="M905.6,145.1 911.0,132.9 928.6,132.9 929.9,149.6 915.1,160.0Z" fill="#33539a" opacity=".8"/>
<path d="M590.6,121.7 613.6,121.7 613.6,149.6 597.3,142.8Z" fill="#2f4f96" opacity=".8"/>
<path d="M664.9,218.6 678.5,189.7 671.7,163.9 681.2,142.8 689.3,153.9 685.2,189.7 675.8,221.4Z" fill="#2b478a" opacity=".5"/>
<path d="M692.0,245.8 702.8,267.1 700.1,300.5 712.3,310.5 712.3,267.1 700.1,243.0Z" fill="#2b478a" opacity=".5"/>
<path d="M793.4,259.8 813.7,274.7 824.5,294.9 813.7,298.6 800.1,277.9Z" fill="#2b478a" opacity=".5"/>
</g>
<ellipse cx="120" cy="300" rx="120" ry="55" fill="url(#deep)" opacity="0.55"/>
<ellipse cx="330" cy="312" rx="80" ry="40" fill="url(#deep)" opacity="0.45"/>
<ellipse cx="55" cy="190" rx="70" ry="60" fill="url(#deep)" opacity="0.4"/>
<ellipse cx="470" cy="195" rx="60" ry="45" fill="url(#deep)" opacity="0.4"/>
<ellipse cx="90" cy="40" rx="100" ry="40" fill="url(#deep)" opacity="0.25"/>
<ellipse cx="400" cy="22" rx="130" ry="22" fill="url(#deep)" opacity="0.3"/>
<path d="M5.2,113.6 7.9,103.5 13.3,97.0 20.7,92.5 29.5,96.2 41.7,99.4 49.8,101.7 59.2,97.8 67.4,99.7 74.1,101.7 79.5,106.1 86.3,105.3 93.0,106.1 99.8,105.3 103.9,89.5 109.3,99.7 113.3,103.5 117.4,99.7 122.1,103.5 121.4,111.6 116.0,112.3 114.7,118.7 109.3,121.7 106.6,127.5 104.5,133.6 107.2,138.0 113.3,139.2 117.4,142.1 120.8,142.8 121.4,147.9 123.5,151.2 125.5,150.7 125.5,145.1 128.2,140.4 126.8,134.2 126.8,123.8 132.9,124.0 137.7,127.5 138.3,133.4 143.1,134.2 144.7,129.4 148.5,136.7 151.2,142.8 155.2,146.3 157.0,149.6 152.5,153.9 144.4,153.9 141.7,156.0 145.1,156.0 144.4,159.0 149.8,162.0 146.4,164.7 143.1,166.6 141.7,163.9 137.7,166.4 136.8,169.5 135.0,171.3 132.3,172.2 130.2,176.6 129.5,181.6 126.2,183.6 122.8,187.3 123.9,194.3 123.5,197.0 121.7,195.8 120.5,192.7 118.7,189.7 116.0,189.2 113.3,189.2 111.3,190.9 109.3,190.4 105.2,190.4 100.8,193.5 100.2,201.0 102.5,206.0 104.5,207.2 108.6,206.7 109.9,203.2 114.7,202.4 114.0,207.5 112.2,210.3 116.0,210.6 119.7,211.7 119.1,217.2 121.4,220.0 124.8,219.3 127.8,220.7 127.5,222.4 126.2,220.7 124.1,222.3 122.1,221.4 119.4,220.7 116.4,218.6 114.0,214.5 109.3,213.1 105.2,210.3 101.8,210.7 95.7,208.5 89.7,204.6 89.7,201.0 84.9,196.5 80.2,190.4 77.2,187.3 79.5,192.7 83.6,198.8 83.6,200.2 80.9,197.3 76.8,191.2 74.1,185.7 69.4,182.5 66.7,177.4 64.2,172.6 64.7,167.7 64.7,161.4 63.7,157.2 66.0,156.0 60.6,151.8 55.9,144.0 51.1,135.5 47.1,133.6 43.0,130.2 34.9,128.0 29.5,131.5 26.8,127.5 24.1,134.2 18.7,138.0 13.3,142.8 9.6,143.7 16.0,139.2 19.4,133.4 13.3,132.9 9.2,127.5 7.9,124.6 9.9,121.7 14.6,118.7 9.2,117.1Z M133.6,57.7 140.4,43.5 151.2,26.2 171.5,21.1 189.0,10.0 205.3,26.2 216.1,32.7 209.3,47.3 206.6,66.9 206.6,85.0 199.9,95.8 202.6,97.8 191.7,105.3 183.6,112.9 178.2,115.5 174.2,130.2 167.4,127.5 163.3,118.7 160.0,108.9 163.3,97.8 157.9,91.6 153.9,72.5 140.4,69.8Z M124.1,81.7 135.0,91.6 141.7,101.7 149.2,110.6 144.4,121.7 140.4,123.8 135.0,118.7 126.8,115.5 133.6,108.9 128.2,99.7 117.4,97.8 111.3,91.6 117.4,82.6Z M110.6,66.9 124.1,68.6 129.5,54.4 144.4,35.3 148.5,21.1 130.9,15.8 110.6,30.9 114.7,50.9Z M74.1,91.6 79.5,103.5 90.3,102.8 95.7,99.7 90.3,87.3 83.6,85.0Z M63.3,89.5 66.0,93.7 75.5,85.0 74.1,79.2 64.7,78.7Z M102.5,75.2 124.1,77.7 124.1,71.4 107.9,65.8Z M74.1,74.1 83.6,77.7 90.3,72.5 83.6,66.9 75.5,68.1Z M94.4,85.0 102.5,91.6 106.6,89.5 106.6,80.2 98.5,80.2Z M114.7,115.5 118.7,113.9 124.1,118.7 120.1,123.2 116.0,120.2Z M152.1,158.6 157.3,160.4 161.0,159.0 160.0,155.0 157.0,150.7 154.6,152.9Z M59.2,152.2 63.3,153.9 65.6,157.2 62.6,156.4Z M117.4,201.7 121.4,199.9 126.8,201.0 132.0,204.3 127.5,204.7 126.8,203.2 121.4,201.3Z M131.7,206.7 134.3,204.7 139.0,205.3 139.8,206.7 136.3,207.5Z M126.4,206.9 129.1,207.0 128.9,207.7 126.6,207.5Z M141.4,206.7 143.5,206.9 143.3,207.5 141.4,207.5Z M127.8,220.7 130.2,217.5 135.0,215.6 135.6,217.2 137.7,215.9 140.4,217.9 145.8,217.9 148.5,217.7 151.2,220.7 155.2,224.1 159.3,224.3 162.7,226.1 164.7,230.8 164.7,232.2 167.4,233.6 172.1,235.6 178.2,236.0 182.3,238.7 185.0,239.6 185.3,243.0 182.3,247.2 179.6,249.9 179.6,256.2 177.5,261.2 175.5,264.2 171.5,265.3 166.7,268.6 166.3,272.4 163.3,276.3 160.0,281.1 156.6,282.8 153.2,281.1 155.2,285.3 153.9,288.7 148.5,289.5 148.1,293.1 144.4,293.1 146.4,296.3 143.7,300.5 141.0,302.4 143.3,305.4 139.0,311.5 139.7,315.9 144.1,321.1 139.7,322.8 135.0,319.3 131.6,314.8 130.2,306.4 132.3,298.6 133.6,294.0 132.7,286.1 135.6,277.9 135.6,271.7 137.3,264.2 137.3,257.4 133.6,254.8 129.1,251.3 126.8,245.8 122.4,240.3 122.8,238.0 124.1,236.3 123.1,233.6 124.1,231.1 125.8,230.2 127.5,226.8 127.8,222.7Z M149.8,313.7 153.9,313.2 153.2,315.4 149.8,315.2Z M224.3,180.3 229.6,181.3 236.4,178.6 245.8,177.8 247.2,178.3 246.1,182.5 247.8,184.6 253.0,186.0 258.0,189.2 259.6,185.9 263.4,185.5 266.1,187.0 271.5,188.1 276.0,187.6 278.5,187.6 276.2,189.8 278.3,194.3 280.6,198.9 282.6,203.2 282.9,206.5 285.3,211.0 290.7,215.2 290.8,216.5 292.5,218.1 295.8,217.0 301.5,216.1 301.0,219.3 297.2,226.1 291.8,230.8 288.4,234.6 285.7,238.3 284.8,241.0 285.7,243.0 287.1,246.5 287.2,252.7 282.3,256.2 279.3,259.8 280.3,264.9 276.6,267.9 276.2,272.4 273.5,276.3 268.8,280.8 262.0,281.4 259.3,282.4 257.3,281.4 256.6,277.9 254.6,272.4 251.9,264.2 248.5,256.9 248.3,254.1 250.7,249.2 249.9,244.4 248.8,240.3 244.5,233.6 245.1,230.8 245.5,227.5 244.2,226.1 240.4,226.4 238.4,223.7 233.7,224.3 229.6,225.7 226.2,225.2 222.2,226.2 219.5,224.8 216.8,222.9 214.5,220.0 212.0,217.5 209.7,215.4 208.6,212.1 210.3,209.6 210.0,205.3 209.3,203.2 210.7,199.5 212.7,195.8 214.7,193.2 218.8,190.4 219.1,187.3 220.8,184.4 223.5,182.5Z M299.0,248.5 300.6,253.4 299.2,256.2 296.5,265.6 293.8,267.9 291.4,264.9 291.1,262.0 292.5,259.1 291.8,255.5 294.5,253.8 297.2,251.0Z M220.1,175.4 220.4,170.4 219.9,167.3 221.5,166.4 227.6,166.8 230.3,166.8 230.7,162.0 228.9,159.4 225.9,157.2 230.3,156.6 229.9,154.6 232.6,155.0 234.5,152.2 237.0,150.9 238.7,147.4 241.8,146.3 243.8,145.1 243.4,141.6 243.4,138.0 246.5,136.2 246.5,140.4 245.8,144.0 247.2,145.1 251.5,145.4 257.3,143.5 259.3,144.2 260.7,141.6 260.7,138.0 262.7,136.2 265.2,137.5 265.2,134.7 264.1,132.3 268.8,131.5 272.9,130.5 270.8,128.6 263.4,130.5 261.1,128.3 261.4,121.7 266.1,115.5 264.7,112.9 262.0,113.9 261.1,117.7 256.0,123.8 255.6,128.3 257.7,130.7 254.6,136.7 253.9,139.9 251.6,141.6 249.9,141.6 247.8,135.5 246.8,132.1 243.1,135.2 240.0,133.6 239.1,127.5 241.1,122.6 245.8,118.7 249.9,111.3 252.6,104.3 258.0,98.6 263.4,95.8 267.2,93.3 270.8,94.6 274.2,97.8 276.9,100.1 282.3,101.7 287.7,107.1 287.1,110.9 281.0,111.3 276.9,109.9 279.6,117.7 283.0,118.7 286.4,116.8 287.1,112.9 291.8,111.6 291.8,104.3 295.2,106.1 304.6,103.5 312.1,102.4 314.1,98.6 318.8,100.9 324.2,103.5 322.9,93.7 324.9,85.0 330.3,85.9 330.3,93.7 331.0,105.3 332.3,103.5 333.7,89.5 340.5,88.2 341.8,82.2 349.9,81.2 349.2,75.2 360.7,69.8 372.9,59.6 377.0,65.8 385.1,69.8 385.8,81.2 381.0,81.2 385.1,83.6 391.8,83.1 399.9,81.7 405.4,89.5 408.1,94.6 412.1,92.1 421.6,87.3 422.3,91.2 435.1,92.5 437.8,94.6 447.3,96.6 449.3,99.7 459.4,98.6 463.5,101.7 471.6,99.7 475.7,102.4 475.7,115.5 473.0,117.7 472.3,123.2 466.9,126.1 462.1,130.2 456.7,130.2 452.7,135.5 451.3,142.8 448.6,147.4 444.6,151.8 443.2,147.4 443.2,138.0 448.6,130.2 452.0,126.1 447.9,125.2 441.9,132.3 437.8,132.9 433.1,131.5 425.0,132.3 418.9,139.2 415.5,144.0 418.9,145.1 422.9,147.4 422.3,152.9 421.6,158.0 418.9,162.0 415.5,166.4 411.4,167.7 408.7,168.6 407.4,172.2 405.0,174.0 407.1,177.4 407.1,180.8 403.3,182.5 403.3,178.3 401.3,176.6 401.6,173.8 397.2,174.5 396.6,171.7 392.5,174.9 393.2,177.4 397.6,178.0 395.2,180.0 393.6,181.6 395.9,185.7 397.2,189.7 395.2,193.5 393.2,196.8 389.8,200.2 386.4,201.3 381.7,202.9 380.3,204.2 378.3,202.3 375.6,205.3 376.6,208.2 379.7,212.4 380.1,216.1 377.0,218.1 374.3,220.4 374.0,218.2 371.3,216.5 368.9,214.8 367.5,213.9 366.6,217.2 368.0,221.4 372.0,226.8 373.2,230.3 372.1,230.3 369.3,228.4 367.9,224.1 365.2,220.7 365.7,216.5 364.4,211.0 362.8,209.6 359.8,210.3 359.8,206.7 357.1,203.2 355.3,201.0 352.6,202.0 349.9,203.2 349.2,204.6 347.2,205.3 343.6,209.3 340.7,211.0 340.7,214.5 340.2,218.2 338.0,220.1 337.1,221.2 335.5,219.0 333.4,214.5 331.5,209.6 330.7,205.7 330.6,202.9 327.6,203.4 325.6,201.3 327.3,200.2 324.6,199.2 322.9,197.6 322.2,196.7 315.7,197.0 309.8,196.4 308.7,194.3 305.3,194.9 301.9,192.9 299.9,189.7 297.9,189.7 297.5,190.6 299.9,194.7 301.0,197.6 301.9,195.9 302.6,198.5 305.7,198.3 308.4,195.5 308.8,198.2 311.7,199.5 313.1,201.1 310.4,206.0 306.9,208.2 302.9,210.3 298.1,213.1 293.1,214.8 291.1,214.9 290.0,211.7 289.1,208.9 287.3,205.3 285.0,202.4 284.4,199.1 281.9,195.8 279.6,192.7 279.3,190.4 278.5,187.6 279.6,184.9 281.0,180.0 281.2,178.6 276.9,179.6 273.5,179.5 270.2,178.8 269.2,177.4 267.9,174.3 268.5,172.2 271.5,171.3 274.9,171.0 279.6,169.5 283.0,171.3 288.4,170.4 288.4,168.2 285.0,165.8 283.0,163.9 285.0,159.6 280.0,161.2 281.6,163.4 277.6,164.9 276.2,163.0 277.6,161.8 274.2,160.8 272.5,163.6 271.0,166.2 269.9,168.6 270.8,170.8 267.7,171.7 264.7,171.7 264.7,173.1 263.1,172.2 264.1,176.6 263.4,179.1 261.4,178.3 260.7,174.9 258.5,172.2 258.7,169.9 256.0,167.7 253.0,165.3 251.6,163.6 250.7,162.6 248.9,163.4 249.1,165.5 251.0,167.1 253.9,169.7 257.3,172.8 255.3,172.2 254.6,174.0 255.3,174.9 254.2,176.6 253.5,176.6 253.9,173.1 251.2,171.3 248.9,169.9 246.5,167.7 244.2,165.1 242.4,166.2 239.1,167.0 236.6,167.3 236.6,169.9 233.4,171.3 231.9,174.0 232.6,175.4 231.4,177.1 229.6,178.6 226.2,178.8 224.7,180.0 223.6,178.6 222.2,178.0 220.3,178.3Z M-11.1,102.4 -4.3,107.1 1.1,110.6 2.5,112.3 -0.9,117.1 -5.7,113.9 -9.7,113.9 -11.1,115.5Z M224.9,153.7 227.6,153.3 234.1,151.4 233.0,150.7 234.6,148.1 232.7,147.4 232.0,144.4 230.0,141.1 228.2,140.4 229.6,136.5 226.9,136.2 228.0,133.9 225.5,133.9 224.2,137.2 224.9,140.4 225.8,143.3 228.2,145.1 228.2,146.7 226.2,146.7 226.6,149.0 225.3,150.1 228.2,150.9Z M218.8,150.1 223.8,149.2 224.2,145.1 224.6,143.3 222.2,142.1 218.8,144.7 219.5,147.4Z M199.9,113.9 202.6,110.9 208.0,111.6 212.7,111.6 213.9,115.5 210.7,118.7 206.6,120.5 201.9,118.7Z M249.2,176.6 253.3,176.2 252.9,178.8 249.2,177.3Z M243.4,171.3 245.4,171.3 245.3,174.5 243.7,174.9Z M243.9,168.6 245.1,167.7 245.0,170.4 244.1,170.3Z M264.1,180.8 267.9,181.1 267.5,181.6 264.2,181.3Z M276.0,181.6 278.9,180.6 278.3,181.8 276.2,182.3Z M407.8,184.9 409.4,187.6 410.8,184.9 415.1,183.8 417.5,182.3 420.2,181.6 422.7,180.5 422.9,176.6 424.3,173.6 423.3,170.8 421.6,171.9 421.3,175.7 417.8,178.3 416.2,180.0 412.1,180.8 409.4,182.8Z M421.6,169.5 422.9,167.7 423.9,163.2 428.3,165.8 429.0,167.3 425.6,169.5 422.9,168.6Z M424.3,162.0 426.0,156.0 425.6,149.6 425.0,145.1 424.3,153.9Z M394.8,200.2 395.9,197.0 397.1,197.6 395.8,201.7Z M379.3,205.7 381.7,204.6 382.4,205.3 380.3,207.2Z M340.2,221.4 340.7,219.0 342.9,222.0 341.8,223.9 340.5,223.8Z M394.9,210.3 395.6,206.7 397.5,206.9 397.2,210.3 399.9,214.5 397.2,213.4 395.2,212.4Z M397.2,222.7 399.3,220.5 402.0,219.0 403.3,222.0 402.0,224.5 399.9,223.4Z M397.2,216.5 399.3,217.2 402.0,215.4 401.6,218.2 399.0,219.4Z M390.8,220.8 393.9,216.8 394.1,217.9 391.2,221.1Z M361.1,224.6 364.1,225.2 367.9,228.7 372.2,233.6 375.6,236.5 375.3,240.1 372.9,239.6 368.9,235.6 365.9,230.2Z M374.5,241.4 379.0,241.3 382.4,241.0 387.1,242.6 386.8,243.9 381.0,243.3 376.3,242.2Z M379.7,230.2 382.8,228.5 385.1,227.9 388.5,224.8 390.5,222.7 393.2,225.2 391.4,227.5 391.8,230.8 391.2,233.3 389.4,237.3 387.1,237.6 383.3,236.3 381.0,234.2 379.7,232.2Z M393.9,239.6 393.2,236.3 394.5,231.1 398.6,230.8 401.3,230.0 399.9,231.8 395.2,231.8 396.6,233.6 399.0,233.4 396.8,234.9 397.9,238.3 396.6,238.7 395.6,235.9 395.1,239.6Z M409.4,233.3 413.5,233.3 414.8,236.7 418.9,234.5 422.9,235.7 428.3,238.0 431.7,240.3 429.7,241.4 432.4,243.0 435.8,246.5 431.0,245.8 427.0,242.6 425.6,244.7 422.9,244.6 419.6,243.5 418.9,239.6 414.8,238.2 412.1,237.6 410.8,236.0 413.5,235.3 411.4,234.9Z M389.1,243.7 393.2,243.5 398.6,243.5 401.3,243.7 404.0,243.6 399.9,246.1 394.5,245.5 389.1,244.3Z M404.7,229.5 406.0,230.2 405.4,233.3 404.5,232.2Z M405.4,236.3 409.1,236.5 408.1,237.3 405.4,236.9Z M433.1,239.6 437.8,237.9 438.1,239.0 433.7,240.7Z M443.2,241.7 448.6,244.4 449.3,245.5 443.9,242.8Z M454.0,260.1 458.1,262.7 457.4,263.3 454.0,261.0Z M472.0,256.2 473.9,256.2 473.6,257.2 472.0,257.1Z M457.5,252.7 458.5,253.0 459.2,254.8 458.4,254.5Z M385.8,262.7 386.7,268.6 387.8,274.7 387.8,281.1 391.8,282.8 394.5,281.0 399.3,281.0 402.7,278.4 406.7,277.3 410.1,277.1 413.5,279.2 415.5,282.4 416.8,281.1 418.6,278.9 418.9,283.8 421.2,284.4 422.9,288.2 426.3,289.2 428.3,288.2 430.1,289.5 432.4,287.6 435.1,286.6 436.0,282.8 437.1,279.5 439.2,274.7 439.8,270.1 439.2,267.1 436.5,264.9 434.4,262.7 433.1,259.8 430.1,258.4 429.0,254.1 428.7,252.3 426.6,251.7 426.0,249.2 425.0,246.9 423.9,249.9 423.6,253.4 422.7,256.2 420.2,256.2 418.5,254.1 415.5,252.7 417.3,249.0 414.8,248.8 411.7,247.9 409.4,249.0 408.1,250.6 407.4,252.7 405.4,252.7 404.0,251.3 402.0,252.0 399.9,254.5 397.6,255.8 397.2,257.7 394.1,259.8 390.5,260.8 387.8,262.0Z M427.9,292.5 430.4,293.2 432.8,292.9 432.4,296.7 430.8,297.8 429.0,296.7Z M465.8,281.9 468.0,284.4 470.0,285.8 473.6,287.3 472.7,289.9 471.5,292.2 469.3,294.1 468.6,292.9 469.2,291.3 467.3,290.1 468.5,287.8 468.0,285.8Z M465.8,292.2 468.0,294.3 465.9,298.4 463.9,299.1 463.2,302.2 460.8,303.6 457.4,302.4 459.4,299.1 462.8,296.7 464.2,294.5Z M247.2,50.9 252.6,43.5 262.0,39.5 268.8,43.5 262.0,55.7 256.6,64.0 251.2,60.9Z M302.6,93.7 306.7,82.6 312.1,72.5 324.2,64.0 321.5,72.5 310.7,82.6 309.4,93.7 305.3,95.0Z M362.1,50.9 367.5,35.3 374.3,50.9 367.5,57.7Z M417.5,72.5 424.3,69.8 432.4,73.6 428.3,76.2 418.9,76.2Z M297.2,41.1 306.7,35.3 316.1,37.0 310.7,43.5 299.9,43.5Z M473.6,93.7 475.7,91.6 475.7,94.6 474.3,94.6Z M21.4,204.3 22.7,204.9 22.1,206.0 21.4,205.3Z M325.3,308.4 327.3,308.8 326.9,309.8 325.6,309.6Z M491.9,113.6 494.6,103.5 500.0,97.0 507.4,92.5 516.2,96.2 528.4,99.4 536.5,101.7 546.0,97.8 554.1,99.7 560.8,101.7 566.2,106.1 573.0,105.3 579.8,106.1 586.5,105.3 590.6,89.5 596.0,99.7 600.0,103.5 604.1,99.7 608.8,103.5 608.2,111.6 602.7,112.3 601.4,118.7 596.0,121.7 593.3,127.5 591.3,133.6 594.0,138.0 600.0,139.2 604.1,142.1 607.5,142.8 608.2,147.9 610.2,151.2 612.2,150.7 612.2,145.1 614.9,140.4 613.6,134.2 613.6,123.8 619.6,124.0 624.4,127.5 625.1,133.4 629.8,134.2 631.4,129.4 635.2,136.7 637.9,142.8 642.0,146.3 643.7,149.6 639.3,153.9 631.1,153.9 628.4,156.0 631.8,156.0 631.1,159.0 636.5,162.0 633.2,164.7 629.8,166.6 628.4,163.9 624.4,166.4 623.6,169.5 621.7,171.3 619.0,172.2 616.9,176.6 616.3,181.6 612.9,183.6 609.5,187.3 610.6,194.3 610.2,197.0 608.4,195.8 607.2,192.7 605.5,189.7 602.7,189.2 600.0,189.2 598.0,190.9 596.0,190.4 591.9,190.4 587.5,193.5 586.9,201.0 589.2,206.0 591.3,207.2 595.3,206.7 596.7,203.2 601.4,202.4 600.7,207.5 599.0,210.3 602.7,210.6 606.4,211.7 605.9,217.2 608.2,220.0 611.5,219.3 614.5,220.7 614.2,222.4 612.9,220.7 610.9,222.3 608.8,221.4 606.1,220.7 603.2,218.6 600.7,214.5 596.0,213.1 591.9,210.3 588.6,210.7 582.5,208.5 576.4,204.6 576.4,201.0 571.7,196.5 566.9,190.4 563.9,187.3 566.2,192.7 570.3,198.8 570.3,200.2 567.6,197.3 563.5,191.2 560.8,185.7 556.1,182.5 553.4,177.4 551.0,172.6 551.4,167.7 551.4,161.4 550.4,157.2 552.7,156.0 547.3,151.8 542.6,144.0 537.9,135.5 533.8,133.6 529.7,130.2 521.6,128.0 516.2,131.5 513.5,127.5 510.8,134.2 505.4,138.0 500.0,142.8 496.3,143.7 502.7,139.2 506.1,133.4 500.0,132.9 495.9,127.5 494.6,124.6 496.6,121.7 501.3,118.7 495.9,117.1Z M620.3,57.7 627.1,43.5 637.9,26.2 658.2,21.1 675.8,10.0 692.0,26.2 702.8,32.7 696.0,47.3 693.3,66.9 693.3,85.0 686.6,95.8 689.3,97.8 678.5,105.3 670.3,112.9 664.9,115.5 660.9,130.2 654.1,127.5 650.1,118.7 646.7,108.9 650.1,97.8 644.7,91.6 640.6,72.5 627.1,69.8Z M610.9,81.7 621.7,91.6 628.4,101.7 635.9,110.6 631.1,121.7 627.1,123.8 621.7,118.7 613.6,115.5 620.3,108.9 614.9,99.7 604.1,97.8 598.0,91.6 604.1,82.6Z M597.3,66.9 610.9,68.6 616.3,54.4 631.1,35.3 635.2,21.1 617.6,15.8 597.3,30.9 601.4,50.9Z M560.8,91.6 566.2,103.5 577.1,102.8 582.5,99.7 577.1,87.3 570.3,85.0Z M550.0,89.5 552.7,93.7 562.2,85.0 560.8,79.2 551.4,78.7Z M589.2,75.2 610.9,77.7 610.9,71.4 594.6,65.8Z M560.8,74.1 570.3,77.7 577.1,72.5 570.3,66.9 562.2,68.1Z M581.1,85.0 589.2,91.6 593.3,89.5 593.3,80.2 585.2,80.2Z M601.4,115.5 605.5,113.9 610.9,118.7 606.8,123.2 602.7,120.2Z M638.8,158.6 644.0,160.4 647.8,159.0 646.7,155.0 643.7,150.7 641.3,152.9Z M546.0,152.2 550.0,153.9 552.3,157.2 549.3,156.4Z M604.1,201.7 608.2,199.9 613.6,201.0 618.7,204.3 614.2,204.7 613.6,203.2 608.2,201.3Z M618.4,206.7 621.0,204.7 625.7,205.3 626.5,206.7 623.0,207.5Z M613.2,206.9 615.9,207.0 615.6,207.7 613.3,207.5Z M628.2,206.7 630.2,206.9 630.1,207.5 628.2,207.5Z M614.5,220.7 616.9,217.5 621.7,215.6 622.4,217.2 624.4,215.9 627.1,217.9 632.5,217.9 635.2,217.7 637.9,220.7 642.0,224.1 646.0,224.3 649.4,226.1 651.4,230.8 651.4,232.2 654.1,233.6 658.9,235.6 664.9,236.0 669.0,238.7 671.7,239.6 672.0,243.0 669.0,247.2 666.3,249.9 666.3,256.2 664.3,261.2 662.2,264.2 658.2,265.3 653.4,268.6 653.0,272.4 650.1,276.3 646.7,281.1 643.3,282.8 639.9,281.1 642.0,285.3 640.6,288.7 635.2,289.5 634.8,293.1 631.1,293.1 633.2,296.3 630.5,300.5 627.8,302.4 630.1,305.4 625.7,311.5 626.4,315.9 630.9,321.1 626.4,322.8 621.7,319.3 618.3,314.8 616.9,306.4 619.0,298.6 620.3,294.0 619.4,286.1 622.4,277.9 622.4,271.7 624.0,264.2 624.0,257.4 620.3,254.8 615.9,251.3 613.6,245.8 609.1,240.3 609.5,238.0 610.9,236.3 609.8,233.6 610.9,231.1 612.5,230.2 614.2,226.8 614.5,222.7Z M636.5,313.7 640.6,313.2 639.9,315.4 636.5,315.2Z M711.0,180.3 716.3,181.3 723.1,178.6 732.5,177.8 733.9,178.3 732.8,182.5 734.6,184.6 739.7,186.0 744.7,189.2 746.3,185.9 750.1,185.5 752.8,187.0 758.2,188.1 762.7,187.6 765.3,187.6 763.0,189.8 765.0,194.3 767.3,198.9 769.3,203.2 769.6,206.5 772.0,211.0 777.4,215.2 777.6,216.5 779.2,218.1 782.6,217.0 788.2,216.1 787.7,219.3 783.9,226.1 778.5,230.8 775.1,234.6 772.4,238.3 771.5,241.0 772.4,243.0 773.8,246.5 773.9,252.7 769.0,256.2 766.1,259.8 767.0,264.9 763.4,267.9 763.0,272.4 760.3,276.3 755.5,280.8 748.8,281.4 746.1,282.4 744.0,281.4 743.4,277.9 741.3,272.4 738.6,264.2 735.2,256.9 735.0,254.1 737.4,249.2 736.6,244.4 735.5,240.3 731.2,233.6 731.9,230.8 732.3,227.5 730.9,226.1 727.1,226.4 725.1,223.7 720.4,224.3 716.3,225.7 712.9,225.2 708.9,226.2 706.2,224.8 703.5,222.9 701.2,220.0 698.7,217.5 696.4,215.4 695.4,212.1 697.0,209.6 696.7,205.3 696.0,203.2 697.4,199.5 699.4,195.8 701.4,193.2 705.5,190.4 705.8,187.3 707.5,184.4 710.2,182.5Z M785.7,248.5 787.3,253.4 785.9,256.2 783.2,265.6 780.5,267.9 778.1,264.9 777.8,262.0 779.2,259.1 778.5,255.5 781.2,253.8 783.9,251.0Z M706.9,175.4 707.1,170.4 706.6,167.3 708.2,166.4 714.3,166.8 717.0,166.8 717.4,162.0 715.6,159.4 712.7,157.2 717.0,156.6 716.6,154.6 719.3,155.0 721.2,152.2 723.8,150.9 725.4,147.4 728.5,146.3 730.5,145.1 730.1,141.6 730.1,138.0 733.2,136.2 733.2,140.4 732.5,144.0 733.9,145.1 738.2,145.4 744.0,143.5 746.1,144.2 747.4,141.6 747.4,138.0 749.4,136.2 751.9,137.5 751.9,134.7 750.8,132.3 755.5,131.5 759.6,130.5 757.6,128.6 750.1,130.5 747.8,128.3 748.1,121.7 752.8,115.5 751.5,112.9 748.8,113.9 747.8,117.7 742.7,123.8 742.3,128.3 744.4,130.7 741.3,136.7 740.7,139.9 738.4,141.6 736.6,141.6 734.6,135.5 733.5,132.1 729.8,135.2 726.7,133.6 725.8,127.5 727.8,122.6 732.5,118.7 736.6,111.3 739.3,104.3 744.7,98.6 750.1,95.8 753.9,93.3 757.6,94.6 760.9,97.8 763.6,100.1 769.0,101.7 774.5,107.1 773.8,110.9 767.7,111.3 763.6,109.9 766.3,117.7 769.7,118.7 773.1,116.8 773.8,112.9 778.5,111.6 778.5,104.3 781.9,106.1 791.4,103.5 798.8,102.4 800.8,98.6 805.5,100.9 811.0,103.5 809.6,93.7 811.6,85.0 817.0,85.9 817.0,93.7 817.7,105.3 819.1,103.5 820.4,89.5 827.2,88.2 828.5,82.2 836.6,81.2 836.0,75.2 847.5,69.8 859.6,59.6 863.7,65.8 871.8,69.8 872.5,81.2 867.7,81.2 871.8,83.6 878.6,83.1 886.7,81.7 892.1,89.5 894.8,94.6 898.8,92.1 908.3,87.3 909.0,91.2 921.8,92.5 924.5,94.6 934.0,96.6 936.0,99.7 946.2,98.6 950.2,101.7 958.3,99.7 962.4,102.4 962.4,115.5 959.7,117.7 959.0,123.2 953.6,126.1 948.9,130.2 943.5,130.2 939.4,135.5 938.0,142.8 935.3,147.4 931.3,151.8 929.9,147.4 929.9,138.0 935.3,130.2 938.7,126.1 934.7,125.2 928.6,132.3 924.5,132.9 919.8,131.5 911.7,132.3 905.6,139.2 902.2,144.0 905.6,145.1 909.7,147.4 909.0,152.9 908.3,158.0 905.6,162.0 902.2,166.4 898.2,167.7 895.5,168.6 894.1,172.2 891.7,174.0 893.8,177.4 893.8,180.8 890.0,182.5 890.0,178.3 888.0,176.6 888.3,173.8 884.0,174.5 883.3,171.7 879.2,174.9 879.9,177.4 884.4,178.0 881.9,180.0 880.3,181.6 882.6,185.7 884.0,189.7 881.9,193.5 879.9,196.8 876.5,200.2 873.1,201.3 868.4,202.9 867.1,204.2 865.0,202.3 862.3,205.3 863.3,208.2 866.4,212.4 866.8,216.1 863.7,218.1 861.0,220.4 860.7,218.2 858.0,216.5 855.6,214.8 854.2,213.9 853.3,217.2 854.8,221.4 858.7,226.8 859.9,230.3 858.8,230.3 856.0,228.4 854.6,224.1 851.9,220.7 852.5,216.5 851.1,211.0 849.5,209.6 846.5,210.3 846.5,206.7 843.8,203.2 842.1,201.0 839.3,202.0 836.6,203.2 836.0,204.6 833.9,205.3 830.3,209.3 827.5,211.0 827.5,214.5 826.9,218.2 824.7,220.1 823.8,221.2 822.2,219.0 820.1,214.5 818.3,209.6 817.4,205.7 817.3,202.9 814.3,203.4 812.3,201.3 814.1,200.2 811.4,199.2 809.6,197.6 808.9,196.7 802.4,197.0 796.5,196.4 795.4,194.3 792.0,194.9 788.6,192.9 786.6,189.7 784.6,189.7 784.2,190.6 786.6,194.7 787.7,197.6 788.6,195.9 789.3,198.5 792.4,198.3 795.1,195.5 795.5,198.2 798.4,199.5 799.9,201.1 797.2,206.0 793.7,208.2 789.6,210.3 784.9,213.1 779.9,214.8 777.8,214.9 776.8,211.7 775.8,208.9 774.0,205.3 771.7,202.4 771.1,199.1 768.6,195.8 766.3,192.7 766.1,190.4 765.3,187.6 766.3,184.9 767.7,180.0 768.0,178.6 763.6,179.6 760.3,179.5 756.9,178.8 755.9,177.4 754.6,174.3 755.3,172.2 758.2,171.3 761.6,171.0 766.3,169.5 769.7,171.3 775.1,170.4 775.1,168.2 771.7,165.8 769.7,163.9 771.7,159.6 766.7,161.2 768.4,163.4 764.3,164.9 763.0,163.0 764.3,161.8 760.9,160.8 759.2,163.6 757.7,166.2 756.6,168.6 757.6,170.8 754.4,171.7 751.5,171.7 751.5,173.1 749.8,172.2 750.8,176.6 750.1,179.1 748.1,178.3 747.4,174.9 745.2,172.2 745.4,169.9 742.7,167.7 739.7,165.3 738.4,163.6 737.4,162.6 735.6,163.4 735.8,165.5 737.7,167.1 740.7,169.7 744.0,172.8 742.0,172.2 741.3,174.0 742.0,174.9 740.9,176.6 740.2,176.6 740.7,173.1 737.9,171.3 735.6,169.9 733.2,167.7 730.9,165.1 729.2,166.2 725.8,167.0 723.3,167.3 723.3,169.9 720.1,171.3 718.6,174.0 719.3,175.4 718.1,177.1 716.3,178.6 712.9,178.8 711.4,180.0 710.4,178.6 708.9,178.0 707.0,178.3Z M475.7,102.4 482.4,107.1 487.8,110.6 489.2,112.3 485.8,117.1 481.1,113.9 477.0,113.9 475.7,115.5Z M711.6,153.7 714.3,153.3 720.8,151.4 719.7,150.7 721.3,148.1 719.4,147.4 718.7,144.4 716.7,141.1 715.0,140.4 716.3,136.5 713.6,136.2 714.7,133.9 712.3,133.9 710.9,137.2 711.6,140.4 712.5,143.3 715.0,145.1 715.0,146.7 712.9,146.7 713.3,149.0 712.0,150.1 715.0,150.9Z M705.5,150.1 710.5,149.2 710.9,145.1 711.3,143.3 708.9,142.1 705.5,144.7 706.2,147.4Z M686.6,113.9 689.3,110.9 694.7,111.6 699.4,111.6 700.6,115.5 697.4,118.7 693.3,120.5 688.6,118.7Z M735.9,176.6 740.0,176.2 739.6,178.8 735.9,177.3Z M730.1,171.3 732.1,171.3 732.0,174.5 730.4,174.9Z M730.6,168.6 731.9,167.7 731.7,170.4 730.8,170.3Z M750.8,180.8 754.6,181.1 754.2,181.6 750.9,181.3Z M762.7,181.6 765.7,180.6 765.0,181.8 763.0,182.3Z M894.5,184.9 896.1,187.6 897.5,184.9 901.8,183.8 904.2,182.3 906.9,181.6 909.4,180.5 909.7,176.6 911.0,173.6 910.1,170.8 908.3,171.9 908.0,175.7 904.5,178.3 902.9,180.0 898.8,180.8 896.1,182.8Z M908.3,169.5 909.7,167.7 910.6,163.2 915.1,165.8 915.7,167.3 912.4,169.5 909.7,168.6Z M911.0,162.0 912.8,156.0 912.4,149.6 911.7,145.1 911.0,153.9Z M881.5,200.2 882.6,197.0 883.8,197.6 882.5,201.7Z M866.0,205.7 868.4,204.6 869.1,205.3 867.1,207.2Z M826.9,221.4 827.5,219.0 829.6,222.0 828.5,223.9 827.2,223.8Z M881.7,210.3 882.3,206.7 884.2,206.9 884.0,210.3 886.7,214.5 884.0,213.4 881.9,212.4Z M884.0,222.7 886.0,220.5 888.7,219.0 890.0,222.0 888.7,224.5 886.7,223.4Z M884.0,216.5 886.0,217.2 888.7,215.4 888.3,218.2 885.7,219.4Z M877.5,220.8 880.6,216.8 880.9,217.9 877.9,221.1Z M847.9,224.6 850.8,225.2 854.6,228.7 859.0,233.6 862.3,236.5 862.1,240.1 859.6,239.6 855.6,235.6 852.6,230.2Z M861.3,241.4 865.7,241.3 869.1,241.0 873.8,242.6 873.6,243.9 867.7,243.3 863.0,242.2Z M866.4,230.2 869.5,228.5 871.8,227.9 875.2,224.8 877.2,222.7 879.9,225.2 878.2,227.5 878.6,230.8 877.9,233.3 876.1,237.3 873.8,237.6 870.0,236.3 867.7,234.2 866.4,232.2Z M880.6,239.6 879.9,236.3 881.3,231.1 885.3,230.8 888.0,230.0 886.7,231.8 881.9,231.8 883.3,233.6 885.7,233.4 883.6,234.9 884.6,238.3 883.3,238.7 882.3,235.9 881.8,239.6Z M896.1,233.3 900.2,233.3 901.5,236.7 905.6,234.5 909.7,235.7 915.1,238.0 918.4,240.3 916.4,241.4 919.1,243.0 922.5,246.5 917.8,245.8 913.7,242.6 912.4,244.7 909.7,244.6 906.3,243.5 905.6,239.6 901.5,238.2 898.8,237.6 897.5,236.0 900.2,235.3 898.2,234.9Z M875.9,243.7 879.9,243.5 885.3,243.5 888.0,243.7 890.7,243.6 886.7,246.1 881.3,245.5 875.9,244.3Z M891.4,229.5 892.8,230.2 892.1,233.3 891.3,232.2Z M892.1,236.3 895.9,236.5 894.8,237.3 892.1,236.9Z M919.8,239.6 924.5,237.9 924.8,239.0 920.5,240.7Z M929.9,241.7 935.3,244.4 936.0,245.5 930.6,242.8Z M940.7,260.1 944.8,262.7 944.1,263.3 940.7,261.0Z M958.7,256.2 960.6,256.2 960.4,257.2 958.7,257.1Z M944.3,252.7 945.2,253.0 945.9,254.8 945.1,254.5Z M872.5,262.7 873.4,268.6 874.5,274.7 874.5,281.1 878.6,282.8 881.3,281.0 886.0,281.0 889.4,278.4 893.4,277.3 896.8,277.1 900.2,279.2 902.2,282.4 903.6,281.1 905.3,278.9 905.6,283.8 907.9,284.4 909.7,288.2 913.0,289.2 915.1,288.2 916.8,289.5 919.1,287.6 921.8,286.6 922.8,282.8 923.8,279.5 925.9,274.7 926.6,270.1 925.9,267.1 923.2,264.9 921.1,262.7 919.8,259.8 916.8,258.4 915.7,254.1 915.5,252.3 913.3,251.7 912.8,249.2 911.7,246.9 910.6,249.9 910.3,253.4 909.4,256.2 906.9,256.2 905.2,254.1 902.2,252.7 904.0,249.0 901.5,248.8 898.4,247.9 896.1,249.0 894.8,250.6 894.1,252.7 892.1,252.7 890.7,251.3 888.7,252.0 886.7,254.5 884.4,255.8 884.0,257.7 880.9,259.8 877.2,260.8 874.5,262.0Z M914.7,292.5 917.1,293.2 919.5,292.9 919.1,296.7 917.5,297.8 915.7,296.7Z M952.5,281.9 954.7,284.4 956.7,285.8 960.4,287.3 959.4,289.9 958.2,292.2 956.0,294.1 955.3,292.9 955.9,291.3 954.0,290.1 955.2,287.8 954.7,285.8Z M952.5,292.2 954.7,294.3 952.6,298.4 950.6,299.1 949.9,302.2 947.5,303.6 944.1,302.4 946.2,299.1 949.5,296.7 950.9,294.5Z M733.9,50.9 739.3,43.5 748.8,39.5 755.5,43.5 748.8,55.7 743.4,64.0 737.9,60.9Z M789.3,93.7 793.4,82.6 798.8,72.5 811.0,64.0 808.3,72.5 797.4,82.6 796.1,93.7 792.0,95.0Z M848.8,50.9 854.2,35.3 861.0,50.9 854.2,57.7Z M904.2,72.5 911.0,69.8 919.1,73.6 915.1,76.2 905.6,76.2Z M783.9,41.1 793.4,35.3 802.8,37.0 797.4,43.5 786.6,43.5Z M960.4,93.7 962.4,91.6 962.4,94.6 961.0,94.6Z M508.1,204.3 509.5,204.9 508.8,206.0 508.1,205.3Z M812.0,308.4 814.1,308.8 813.7,309.8 812.3,309.6Z" fill="none" stroke="#3555a0" stroke-width="6" opacity=".4" filter="url(#b3)"/>
<path d="M-11.1,406.7 9.2,406.7 22.7,400.4 36.3,391.9 49.8,386.7 63.3,381.8 76.8,384.2 90.3,386.7 97.1,377.1 110.6,379.4 124.1,379.4 130.9,370.7 137.7,362.7 141.7,355.5 147.1,347.3 153.9,343.6 155.2,345.7 149.8,352.1 148.5,362.7 149.8,374.9 151.2,389.2 144.4,403.5 157.9,406.7 171.5,406.7 185.0,405.4 195.8,394.6 205.3,381.8 216.1,372.8 225.5,368.6 239.1,366.6 252.6,364.7 266.1,366.6 276.9,362.7 286.4,362.7 299.9,355.5 306.7,352.1 313.4,356.6 326.9,359.1 331.0,364.7 337.8,360.9 347.2,353.8 360.7,353.1 374.3,352.1 387.8,353.1 401.3,353.1 414.8,352.1 424.3,354.8 435.1,360.1 448.6,366.6 458.1,370.7 462.1,374.9 455.4,389.2 452.7,403.5 462.1,406.7 475.7,406.7 475.7,492.0 -11.1,492.0Z" fill="none" stroke="#2a4788" stroke-width="14" opacity=".5" filter="url(#b6)"/>
<path d="M475.7,406.7 495.9,406.7 509.5,400.4 523.0,391.9 536.5,386.7 550.0,381.8 563.5,384.2 577.1,386.7 583.8,377.1 597.3,379.4 610.9,379.4 617.6,370.7 624.4,362.7 628.4,355.5 633.8,347.3 640.6,343.6 642.0,345.7 636.5,352.1 635.2,362.7 636.5,374.9 637.9,389.2 631.1,403.5 644.7,406.7 658.2,406.7 671.7,405.4 682.5,394.6 692.0,381.8 702.8,372.8 712.3,368.6 725.8,366.6 739.3,364.7 752.8,366.6 763.6,362.7 773.1,362.7 786.6,355.5 793.4,352.1 800.1,356.6 813.7,359.1 817.7,364.7 824.5,360.9 833.9,353.8 847.5,353.1 861.0,352.1 874.5,353.1 888.0,353.1 901.5,352.1 911.0,354.8 921.8,360.1 935.3,366.6 944.8,370.7 948.9,374.9 942.1,389.2 939.4,403.5 948.9,406.7 962.4,406.7 962.4,492.0 475.7,492.0Z" fill="none" stroke="#2a4788" stroke-width="14" opacity=".5" filter="url(#b6)"/>
<g filter="url(#b1)">
<path d="M5.2,113.6 7.9,103.5 13.3,97.0 20.7,92.5 29.5,96.2 41.7,99.4 49.8,101.7 59.2,97.8 67.4,99.7 74.1,101.7 79.5,106.1 86.3,105.3 93.0,106.1 99.8,105.3 103.9,89.5 109.3,99.7 113.3,103.5 117.4,99.7 122.1,103.5 121.4,111.6 116.0,112.3 114.7,118.7 109.3,121.7 106.6,127.5 104.5,133.6 107.2,138.0 113.3,139.2 117.4,142.1 120.8,142.8 121.4,147.9 123.5,151.2 125.5,150.7 125.5,145.1 128.2,140.4 126.8,134.2 126.8,123.8 132.9,124.0 137.7,127.5 138.3,133.4 143.1,134.2 144.7,129.4 148.5,136.7 151.2,142.8 155.2,146.3 157.0,149.6 152.5,153.9 144.4,153.9 141.7,156.0 145.1,156.0 144.4,159.0 149.8,162.0 146.4,164.7 143.1,166.6 141.7,163.9 137.7,166.4 136.8,169.5 135.0,171.3 132.3,172.2 130.2,176.6 129.5,181.6 126.2,183.6 122.8,187.3 123.9,194.3 123.5,197.0 121.7,195.8 120.5,192.7 118.7,189.7 116.0,189.2 113.3,189.2 111.3,190.9 109.3,190.4 105.2,190.4 100.8,193.5 100.2,201.0 102.5,206.0 104.5,207.2 108.6,206.7 109.9,203.2 114.7,202.4 114.0,207.5 112.2,210.3 116.0,210.6 119.7,211.7 119.1,217.2 121.4,220.0 124.8,219.3 127.8,220.7 127.5,222.4 126.2,220.7 124.1,222.3 122.1,221.4 119.4,220.7 116.4,218.6 114.0,214.5 109.3,213.1 105.2,210.3 101.8,210.7 95.7,208.5 89.7,204.6 89.7,201.0 84.9,196.5 80.2,190.4 77.2,187.3 79.5,192.7 83.6,198.8 83.6,200.2 80.9,197.3 76.8,191.2 74.1,185.7 69.4,182.5 66.7,177.4 64.2,172.6 64.7,167.7 64.7,161.4 63.7,157.2 66.0,156.0 60.6,151.8 55.9,144.0 51.1,135.5 47.1,133.6 43.0,130.2 34.9,128.0 29.5,131.5 26.8,127.5 24.1,134.2 18.7,138.0 13.3,142.8 9.6,143.7 16.0,139.2 19.4,133.4 13.3,132.9 9.2,127.5 7.9,124.6 9.9,121.7 14.6,118.7 9.2,117.1Z M133.6,57.7 140.4,43.5 151.2,26.2 171.5,21.1 189.0,10.0 205.3,26.2 216.1,32.7 209.3,47.3 206.6,66.9 206.6,85.0 199.9,95.8 202.6,97.8 191.7,105.3 183.6,112.9 178.2,115.5 174.2,130.2 167.4,127.5 163.3,118.7 160.0,108.9 163.3,97.8 157.9,91.6 153.9,72.5 140.4,69.8Z M124.1,81.7 135.0,91.6 141.7,101.7 149.2,110.6 144.4,121.7 140.4,123.8 135.0,118.7 126.8,115.5 133.6,108.9 128.2,99.7 117.4,97.8 111.3,91.6 117.4,82.6Z M110.6,66.9 124.1,68.6 129.5,54.4 144.4,35.3 148.5,21.1 130.9,15.8 110.6,30.9 114.7,50.9Z M74.1,91.6 79.5,103.5 90.3,102.8 95.7,99.7 90.3,87.3 83.6,85.0Z M63.3,89.5 66.0,93.7 75.5,85.0 74.1,79.2 64.7,78.7Z M102.5,75.2 124.1,77.7 124.1,71.4 107.9,65.8Z M74.1,74.1 83.6,77.7 90.3,72.5 83.6,66.9 75.5,68.1Z M94.4,85.0 102.5,91.6 106.6,89.5 106.6,80.2 98.5,80.2Z M114.7,115.5 118.7,113.9 124.1,118.7 120.1,123.2 116.0,120.2Z M152.1,158.6 157.3,160.4 161.0,159.0 160.0,155.0 157.0,150.7 154.6,152.9Z M59.2,152.2 63.3,153.9 65.6,157.2 62.6,156.4Z M117.4,201.7 121.4,199.9 126.8,201.0 132.0,204.3 127.5,204.7 126.8,203.2 121.4,201.3Z M131.7,206.7 134.3,204.7 139.0,205.3 139.8,206.7 136.3,207.5Z M126.4,206.9 129.1,207.0 128.9,207.7 126.6,207.5Z M141.4,206.7 143.5,206.9 143.3,207.5 141.4,207.5Z M127.8,220.7 130.2,217.5 135.0,215.6 135.6,217.2 137.7,215.9 140.4,217.9 145.8,217.9 148.5,217.7 151.2,220.7 155.2,224.1 159.3,224.3 162.7,226.1 164.7,230.8 164.7,232.2 167.4,233.6 172.1,235.6 178.2,236.0 182.3,238.7 185.0,239.6 185.3,243.0 182.3,247.2 179.6,249.9 179.6,256.2 177.5,261.2 175.5,264.2 171.5,265.3 166.7,268.6 166.3,272.4 163.3,276.3 160.0,281.1 156.6,282.8 153.2,281.1 155.2,285.3 153.9,288.7 148.5,289.5 148.1,293.1 144.4,293.1 146.4,296.3 143.7,300.5 141.0,302.4 143.3,305.4 139.0,311.5 139.7,315.9 144.1,321.1 139.7,322.8 135.0,319.3 131.6,314.8 130.2,306.4 132.3,298.6 133.6,294.0 132.7,286.1 135.6,277.9 135.6,271.7 137.3,264.2 137.3,257.4 133.6,254.8 129.1,251.3 126.8,245.8 122.4,240.3 122.8,238.0 124.1,236.3 123.1,233.6 124.1,231.1 125.8,230.2 127.5,226.8 127.8,222.7Z M149.8,313.7 153.9,313.2 153.2,315.4 149.8,315.2Z M224.3,180.3 229.6,181.3 236.4,178.6 245.8,177.8 247.2,178.3 246.1,182.5 247.8,184.6 253.0,186.0 258.0,189.2 259.6,185.9 263.4,185.5 266.1,187.0 271.5,188.1 276.0,187.6 278.5,187.6 276.2,189.8 278.3,194.3 280.6,198.9 282.6,203.2 282.9,206.5 285.3,211.0 290.7,215.2 290.8,216.5 292.5,218.1 295.8,217.0 301.5,216.1 301.0,219.3 297.2,226.1 291.8,230.8 288.4,234.6 285.7,238.3 284.8,241.0 285.7,243.0 287.1,246.5 287.2,252.7 282.3,256.2 279.3,259.8 280.3,264.9 276.6,267.9 276.2,272.4 273.5,276.3 268.8,280.8 262.0,281.4 259.3,282.4 257.3,281.4 256.6,277.9 254.6,272.4 251.9,264.2 248.5,256.9 248.3,254.1 250.7,249.2 249.9,244.4 248.8,240.3 244.5,233.6 245.1,230.8 245.5,227.5 244.2,226.1 240.4,226.4 238.4,223.7 233.7,224.3 229.6,225.7 226.2,225.2 222.2,226.2 219.5,224.8 216.8,222.9 214.5,220.0 212.0,217.5 209.7,215.4 208.6,212.1 210.3,209.6 210.0,205.3 209.3,203.2 210.7,199.5 212.7,195.8 214.7,193.2 218.8,190.4 219.1,187.3 220.8,184.4 223.5,182.5Z M299.0,248.5 300.6,253.4 299.2,256.2 296.5,265.6 293.8,267.9 291.4,264.9 291.1,262.0 292.5,259.1 291.8,255.5 294.5,253.8 297.2,251.0Z M220.1,175.4 220.4,170.4 219.9,167.3 221.5,166.4 227.6,166.8 230.3,166.8 230.7,162.0 228.9,159.4 225.9,157.2 230.3,156.6 229.9,154.6 232.6,155.0 234.5,152.2 237.0,150.9 238.7,147.4 241.8,146.3 243.8,145.1 243.4,141.6 243.4,138.0 246.5,136.2 246.5,140.4 245.8,144.0 247.2,145.1 251.5,145.4 257.3,143.5 259.3,144.2 260.7,141.6 260.7,138.0 262.7,136.2 265.2,137.5 265.2,134.7 264.1,132.3 268.8,131.5 272.9,130.5 270.8,128.6 263.4,130.5 261.1,128.3 261.4,121.7 266.1,115.5 264.7,112.9 262.0,113.9 261.1,117.7 256.0,123.8 255.6,128.3 257.7,130.7 254.6,136.7 253.9,139.9 251.6,141.6 249.9,141.6 247.8,135.5 246.8,132.1 243.1,135.2 240.0,133.6 239.1,127.5 241.1,122.6 245.8,118.7 249.9,111.3 252.6,104.3 258.0,98.6 263.4,95.8 267.2,93.3 270.8,94.6 274.2,97.8 276.9,100.1 282.3,101.7 287.7,107.1 287.1,110.9 281.0,111.3 276.9,109.9 279.6,117.7 283.0,118.7 286.4,116.8 287.1,112.9 291.8,111.6 291.8,104.3 295.2,106.1 304.6,103.5 312.1,102.4 314.1,98.6 318.8,100.9 324.2,103.5 322.9,93.7 324.9,85.0 330.3,85.9 330.3,93.7 331.0,105.3 332.3,103.5 333.7,89.5 340.5,88.2 341.8,82.2 349.9,81.2 349.2,75.2 360.7,69.8 372.9,59.6 377.0,65.8 385.1,69.8 385.8,81.2 381.0,81.2 385.1,83.6 391.8,83.1 399.9,81.7 405.4,89.5 408.1,94.6 412.1,92.1 421.6,87.3 422.3,91.2 435.1,92.5 437.8,94.6 447.3,96.6 449.3,99.7 459.4,98.6 463.5,101.7 471.6,99.7 475.7,102.4 475.7,115.5 473.0,117.7 472.3,123.2 466.9,126.1 462.1,130.2 456.7,130.2 452.7,135.5 451.3,142.8 448.6,147.4 444.6,151.8 443.2,147.4 443.2,138.0 448.6,130.2 452.0,126.1 447.9,125.2 441.9,132.3 437.8,132.9 433.1,131.5 425.0,132.3 418.9,139.2 415.5,144.0 418.9,145.1 422.9,147.4 422.3,152.9 421.6,158.0 418.9,162.0 415.5,166.4 411.4,167.7 408.7,168.6 407.4,172.2 405.0,174.0 407.1,177.4 407.1,180.8 403.3,182.5 403.3,178.3 401.3,176.6 401.6,173.8 397.2,174.5 396.6,171.7 392.5,174.9 393.2,177.4 397.6,178.0 395.2,180.0 393.6,181.6 395.9,185.7 397.2,189.7 395.2,193.5 393.2,196.8 389.8,200.2 386.4,201.3 381.7,202.9 380.3,204.2 378.3,202.3 375.6,205.3 376.6,208.2 379.7,212.4 380.1,216.1 377.0,218.1 374.3,220.4 374.0,218.2 371.3,216.5 368.9,214.8 367.5,213.9 366.6,217.2 368.0,221.4 372.0,226.8 373.2,230.3 372.1,230.3 369.3,228.4 367.9,224.1 365.2,220.7 365.7,216.5 364.4,211.0 362.8,209.6 359.8,210.3 359.8,206.7 357.1,203.2 355.3,201.0 352.6,202.0 349.9,203.2 349.2,204.6 347.2,205.3 343.6,209.3 340.7,211.0 340.7,214.5 340.2,218.2 338.0,220.1 337.1,221.2 335.5,219.0 333.4,214.5 331.5,209.6 330.7,205.7 330.6,202.9 327.6,203.4 325.6,201.3 327.3,200.2 324.6,199.2 322.9,197.6 322.2,196.7 315.7,197.0 309.8,196.4 308.7,194.3 305.3,194.9 301.9,192.9 299.9,189.7 297.9,189.7 297.5,190.6 299.9,194.7 301.0,197.6 301.9,195.9 302.6,198.5 305.7,198.3 308.4,195.5 308.8,198.2 311.7,199.5 313.1,201.1 310.4,206.0 306.9,208.2 302.9,210.3 298.1,213.1 293.1,214.8 291.1,214.9 290.0,211.7 289.1,208.9 287.3,205.3 285.0,202.4 284.4,199.1 281.9,195.8 279.6,192.7 279.3,190.4 278.5,187.6 279.6,184.9 281.0,180.0 281.2,178.6 276.9,179.6 273.5,179.5 270.2,178.8 269.2,177.4 267.9,174.3 268.5,172.2 271.5,171.3 274.9,171.0 279.6,169.5 283.0,171.3 288.4,170.4 288.4,168.2 285.0,165.8 283.0,163.9 285.0,159.6 280.0,161.2 281.6,163.4 277.6,164.9 276.2,163.0 277.6,161.8 274.2,160.8 272.5,163.6 271.0,166.2 269.9,168.6 270.8,170.8 267.7,171.7 264.7,171.7 264.7,173.1 263.1,172.2 264.1,176.6 263.4,179.1 261.4,178.3 260.7,174.9 258.5,172.2 258.7,169.9 256.0,167.7 253.0,165.3 251.6,163.6 250.7,162.6 248.9,163.4 249.1,165.5 251.0,167.1 253.9,169.7 257.3,172.8 255.3,172.2 254.6,174.0 255.3,174.9 254.2,176.6 253.5,176.6 253.9,173.1 251.2,171.3 248.9,169.9 246.5,167.7 244.2,165.1 242.4,166.2 239.1,167.0 236.6,167.3 236.6,169.9 233.4,171.3 231.9,174.0 232.6,175.4 231.4,177.1 229.6,178.6 226.2,178.8 224.7,180.0 223.6,178.6 222.2,178.0 220.3,178.3Z M-11.1,102.4 -4.3,107.1 1.1,110.6 2.5,112.3 -0.9,117.1 -5.7,113.9 -9.7,113.9 -11.1,115.5Z M224.9,153.7 227.6,153.3 234.1,151.4 233.0,150.7 234.6,148.1 232.7,147.4 232.0,144.4 230.0,141.1 228.2,140.4 229.6,136.5 226.9,136.2 228.0,133.9 225.5,133.9 224.2,137.2 224.9,140.4 225.8,143.3 228.2,145.1 228.2,146.7 226.2,146.7 226.6,149.0 225.3,150.1 228.2,150.9Z M218.8,150.1 223.8,149.2 224.2,145.1 224.6,143.3 222.2,142.1 218.8,144.7 219.5,147.4Z M199.9,113.9 202.6,110.9 208.0,111.6 212.7,111.6 213.9,115.5 210.7,118.7 206.6,120.5 201.9,118.7Z M249.2,176.6 253.3,176.2 252.9,178.8 249.2,177.3Z M243.4,171.3 245.4,171.3 245.3,174.5 243.7,174.9Z M243.9,168.6 245.1,167.7 245.0,170.4 244.1,170.3Z M264.1,180.8 267.9,181.1 267.5,181.6 264.2,181.3Z M276.0,181.6 278.9,180.6 278.3,181.8 276.2,182.3Z M407.8,184.9 409.4,187.6 410.8,184.9 415.1,183.8 417.5,182.3 420.2,181.6 422.7,180.5 422.9,176.6 424.3,173.6 423.3,170.8 421.6,171.9 421.3,175.7 417.8,178.3 416.2,180.0 412.1,180.8 409.4,182.8Z M421.6,169.5 422.9,167.7 423.9,163.2 428.3,165.8 429.0,167.3 425.6,169.5 422.9,168.6Z M424.3,162.0 426.0,156.0 425.6,149.6 425.0,145.1 424.3,153.9Z M394.8,200.2 395.9,197.0 397.1,197.6 395.8,201.7Z M379.3,205.7 381.7,204.6 382.4,205.3 380.3,207.2Z M340.2,221.4 340.7,219.0 342.9,222.0 341.8,223.9 340.5,223.8Z M394.9,210.3 395.6,206.7 397.5,206.9 397.2,210.3 399.9,214.5 397.2,213.4 395.2,212.4Z M397.2,222.7 399.3,220.5 402.0,219.0 403.3,222.0 402.0,224.5 399.9,223.4Z M397.2,216.5 399.3,217.2 402.0,215.4 401.6,218.2 399.0,219.4Z M390.8,220.8 393.9,216.8 394.1,217.9 391.2,221.1Z M361.1,224.6 364.1,225.2 367.9,228.7 372.2,233.6 375.6,236.5 375.3,240.1 372.9,239.6 368.9,235.6 365.9,230.2Z M374.5,241.4 379.0,241.3 382.4,241.0 387.1,242.6 386.8,243.9 381.0,243.3 376.3,242.2Z M379.7,230.2 382.8,228.5 385.1,227.9 388.5,224.8 390.5,222.7 393.2,225.2 391.4,227.5 391.8,230.8 391.2,233.3 389.4,237.3 387.1,237.6 383.3,236.3 381.0,234.2 379.7,232.2Z M393.9,239.6 393.2,236.3 394.5,231.1 398.6,230.8 401.3,230.0 399.9,231.8 395.2,231.8 396.6,233.6 399.0,233.4 396.8,234.9 397.9,238.3 396.6,238.7 395.6,235.9 395.1,239.6Z M409.4,233.3 413.5,233.3 414.8,236.7 418.9,234.5 422.9,235.7 428.3,238.0 431.7,240.3 429.7,241.4 432.4,243.0 435.8,246.5 431.0,245.8 427.0,242.6 425.6,244.7 422.9,244.6 419.6,243.5 418.9,239.6 414.8,238.2 412.1,237.6 410.8,236.0 413.5,235.3 411.4,234.9Z M389.1,243.7 393.2,243.5 398.6,243.5 401.3,243.7 404.0,243.6 399.9,246.1 394.5,245.5 389.1,244.3Z M404.7,229.5 406.0,230.2 405.4,233.3 404.5,232.2Z M405.4,236.3 409.1,236.5 408.1,237.3 405.4,236.9Z M433.1,239.6 437.8,237.9 438.1,239.0 433.7,240.7Z M443.2,241.7 448.6,244.4 449.3,245.5 443.9,242.8Z M454.0,260.1 458.1,262.7 457.4,263.3 454.0,261.0Z M472.0,256.2 473.9,256.2 473.6,257.2 472.0,257.1Z M457.5,252.7 458.5,253.0 459.2,254.8 458.4,254.5Z M385.8,262.7 386.7,268.6 387.8,274.7 387.8,281.1 391.8,282.8 394.5,281.0 399.3,281.0 402.7,278.4 406.7,277.3 410.1,277.1 413.5,279.2 415.5,282.4 416.8,281.1 418.6,278.9 418.9,283.8 421.2,284.4 422.9,288.2 426.3,289.2 428.3,288.2 430.1,289.5 432.4,287.6 435.1,286.6 436.0,282.8 437.1,279.5 439.2,274.7 439.8,270.1 439.2,267.1 436.5,264.9 434.4,262.7 433.1,259.8 430.1,258.4 429.0,254.1 428.7,252.3 426.6,251.7 426.0,249.2 425.0,246.9 423.9,249.9 423.6,253.4 422.7,256.2 420.2,256.2 418.5,254.1 415.5,252.7 417.3,249.0 414.8,248.8 411.7,247.9 409.4,249.0 408.1,250.6 407.4,252.7 405.4,252.7 404.0,251.3 402.0,252.0 399.9,254.5 397.6,255.8 397.2,257.7 394.1,259.8 390.5,260.8 387.8,262.0Z M427.9,292.5 430.4,293.2 432.8,292.9 432.4,296.7 430.8,297.8 429.0,296.7Z M465.8,281.9 468.0,284.4 470.0,285.8 473.6,287.3 472.7,289.9 471.5,292.2 469.3,294.1 468.6,292.9 469.2,291.3 467.3,290.1 468.5,287.8 468.0,285.8Z M465.8,292.2 468.0,294.3 465.9,298.4 463.9,299.1 463.2,302.2 460.8,303.6 457.4,302.4 459.4,299.1 462.8,296.7 464.2,294.5Z M247.2,50.9 252.6,43.5 262.0,39.5 268.8,43.5 262.0,55.7 256.6,64.0 251.2,60.9Z M302.6,93.7 306.7,82.6 312.1,72.5 324.2,64.0 321.5,72.5 310.7,82.6 309.4,93.7 305.3,95.0Z M362.1,50.9 367.5,35.3 374.3,50.9 367.5,57.7Z M417.5,72.5 424.3,69.8 432.4,73.6 428.3,76.2 418.9,76.2Z M297.2,41.1 306.7,35.3 316.1,37.0 310.7,43.5 299.9,43.5Z M473.6,93.7 475.7,91.6 475.7,94.6 474.3,94.6Z M21.4,204.3 22.7,204.9 22.1,206.0 21.4,205.3Z M325.3,308.4 327.3,308.8 326.9,309.8 325.6,309.6Z M491.9,113.6 494.6,103.5 500.0,97.0 507.4,92.5 516.2,96.2 528.4,99.4 536.5,101.7 546.0,97.8 554.1,99.7 560.8,101.7 566.2,106.1 573.0,105.3 579.8,106.1 586.5,105.3 590.6,89.5 596.0,99.7 600.0,103.5 604.1,99.7 608.8,103.5 608.2,111.6 602.7,112.3 601.4,118.7 596.0,121.7 593.3,127.5 591.3,133.6 594.0,138.0 600.0,139.2 604.1,142.1 607.5,142.8 608.2,147.9 610.2,151.2 612.2,150.7 612.2,145.1 614.9,140.4 613.6,134.2 613.6,123.8 619.6,124.0 624.4,127.5 625.1,133.4 629.8,134.2 631.4,129.4 635.2,136.7 637.9,142.8 642.0,146.3 643.7,149.6 639.3,153.9 631.1,153.9 628.4,156.0 631.8,156.0 631.1,159.0 636.5,162.0 633.2,164.7 629.8,166.6 628.4,163.9 624.4,166.4 623.6,169.5 621.7,171.3 619.0,172.2 616.9,176.6 616.3,181.6 612.9,183.6 609.5,187.3 610.6,194.3 610.2,197.0 608.4,195.8 607.2,192.7 605.5,189.7 602.7,189.2 600.0,189.2 598.0,190.9 596.0,190.4 591.9,190.4 587.5,193.5 586.9,201.0 589.2,206.0 591.3,207.2 595.3,206.7 596.7,203.2 601.4,202.4 600.7,207.5 599.0,210.3 602.7,210.6 606.4,211.7 605.9,217.2 608.2,220.0 611.5,219.3 614.5,220.7 614.2,222.4 612.9,220.7 610.9,222.3 608.8,221.4 606.1,220.7 603.2,218.6 600.7,214.5 596.0,213.1 591.9,210.3 588.6,210.7 582.5,208.5 576.4,204.6 576.4,201.0 571.7,196.5 566.9,190.4 563.9,187.3 566.2,192.7 570.3,198.8 570.3,200.2 567.6,197.3 563.5,191.2 560.8,185.7 556.1,182.5 553.4,177.4 551.0,172.6 551.4,167.7 551.4,161.4 550.4,157.2 552.7,156.0 547.3,151.8 542.6,144.0 537.9,135.5 533.8,133.6 529.7,130.2 521.6,128.0 516.2,131.5 513.5,127.5 510.8,134.2 505.4,138.0 500.0,142.8 496.3,143.7 502.7,139.2 506.1,133.4 500.0,132.9 495.9,127.5 494.6,124.6 496.6,121.7 501.3,118.7 495.9,117.1Z M620.3,57.7 627.1,43.5 637.9,26.2 658.2,21.1 675.8,10.0 692.0,26.2 702.8,32.7 696.0,47.3 693.3,66.9 693.3,85.0 686.6,95.8 689.3,97.8 678.5,105.3 670.3,112.9 664.9,115.5 660.9,130.2 654.1,127.5 650.1,118.7 646.7,108.9 650.1,97.8 644.7,91.6 640.6,72.5 627.1,69.8Z M610.9,81.7 621.7,91.6 628.4,101.7 635.9,110.6 631.1,121.7 627.1,123.8 621.7,118.7 613.6,115.5 620.3,108.9 614.9,99.7 604.1,97.8 598.0,91.6 604.1,82.6Z M597.3,66.9 610.9,68.6 616.3,54.4 631.1,35.3 635.2,21.1 617.6,15.8 597.3,30.9 601.4,50.9Z M560.8,91.6 566.2,103.5 577.1,102.8 582.5,99.7 577.1,87.3 570.3,85.0Z M550.0,89.5 552.7,93.7 562.2,85.0 560.8,79.2 551.4,78.7Z M589.2,75.2 610.9,77.7 610.9,71.4 594.6,65.8Z M560.8,74.1 570.3,77.7 577.1,72.5 570.3,66.9 562.2,68.1Z M581.1,85.0 589.2,91.6 593.3,89.5 593.3,80.2 585.2,80.2Z M601.4,115.5 605.5,113.9 610.9,118.7 606.8,123.2 602.7,120.2Z M638.8,158.6 644.0,160.4 647.8,159.0 646.7,155.0 643.7,150.7 641.3,152.9Z M546.0,152.2 550.0,153.9 552.3,157.2 549.3,156.4Z M604.1,201.7 608.2,199.9 613.6,201.0 618.7,204.3 614.2,204.7 613.6,203.2 608.2,201.3Z M618.4,206.7 621.0,204.7 625.7,205.3 626.5,206.7 623.0,207.5Z M613.2,206.9 615.9,207.0 615.6,207.7 613.3,207.5Z M628.2,206.7 630.2,206.9 630.1,207.5 628.2,207.5Z M614.5,220.7 616.9,217.5 621.7,215.6 622.4,217.2 624.4,215.9 627.1,217.9 632.5,217.9 635.2,217.7 637.9,220.7 642.0,224.1 646.0,224.3 649.4,226.1 651.4,230.8 651.4,232.2 654.1,233.6 658.9,235.6 664.9,236.0 669.0,238.7 671.7,239.6 672.0,243.0 669.0,247.2 666.3,249.9 666.3,256.2 664.3,261.2 662.2,264.2 658.2,265.3 653.4,268.6 653.0,272.4 650.1,276.3 646.7,281.1 643.3,282.8 639.9,281.1 642.0,285.3 640.6,288.7 635.2,289.5 634.8,293.1 631.1,293.1 633.2,296.3 630.5,300.5 627.8,302.4 630.1,305.4 625.7,311.5 626.4,315.9 630.9,321.1 626.4,322.8 621.7,319.3 618.3,314.8 616.9,306.4 619.0,298.6 620.3,294.0 619.4,286.1 622.4,277.9 622.4,271.7 624.0,264.2 624.0,257.4 620.3,254.8 615.9,251.3 613.6,245.8 609.1,240.3 609.5,238.0 610.9,236.3 609.8,233.6 610.9,231.1 612.5,230.2 614.2,226.8 614.5,222.7Z M636.5,313.7 640.6,313.2 639.9,315.4 636.5,315.2Z M711.0,180.3 716.3,181.3 723.1,178.6 732.5,177.8 733.9,178.3 732.8,182.5 734.6,184.6 739.7,186.0 744.7,189.2 746.3,185.9 750.1,185.5 752.8,187.0 758.2,188.1 762.7,187.6 765.3,187.6 763.0,189.8 765.0,194.3 767.3,198.9 769.3,203.2 769.6,206.5 772.0,211.0 777.4,215.2 777.6,216.5 779.2,218.1 782.6,217.0 788.2,216.1 787.7,219.3 783.9,226.1 778.5,230.8 775.1,234.6 772.4,238.3 771.5,241.0 772.4,243.0 773.8,246.5 773.9,252.7 769.0,256.2 766.1,259.8 767.0,264.9 763.4,267.9 763.0,272.4 760.3,276.3 755.5,280.8 748.8,281.4 746.1,282.4 744.0,281.4 743.4,277.9 741.3,272.4 738.6,264.2 735.2,256.9 735.0,254.1 737.4,249.2 736.6,244.4 735.5,240.3 731.2,233.6 731.9,230.8 732.3,227.5 730.9,226.1 727.1,226.4 725.1,223.7 720.4,224.3 716.3,225.7 712.9,225.2 708.9,226.2 706.2,224.8 703.5,222.9 701.2,220.0 698.7,217.5 696.4,215.4 695.4,212.1 697.0,209.6 696.7,205.3 696.0,203.2 697.4,199.5 699.4,195.8 701.4,193.2 705.5,190.4 705.8,187.3 707.5,184.4 710.2,182.5Z M785.7,248.5 787.3,253.4 785.9,256.2 783.2,265.6 780.5,267.9 778.1,264.9 777.8,262.0 779.2,259.1 778.5,255.5 781.2,253.8 783.9,251.0Z M706.9,175.4 707.1,170.4 706.6,167.3 708.2,166.4 714.3,166.8 717.0,166.8 717.4,162.0 715.6,159.4 712.7,157.2 717.0,156.6 716.6,154.6 719.3,155.0 721.2,152.2 723.8,150.9 725.4,147.4 728.5,146.3 730.5,145.1 730.1,141.6 730.1,138.0 733.2,136.2 733.2,140.4 732.5,144.0 733.9,145.1 738.2,145.4 744.0,143.5 746.1,144.2 747.4,141.6 747.4,138.0 749.4,136.2 751.9,137.5 751.9,134.7 750.8,132.3 755.5,131.5 759.6,130.5 757.6,128.6 750.1,130.5 747.8,128.3 748.1,121.7 752.8,115.5 751.5,112.9 748.8,113.9 747.8,117.7 742.7,123.8 742.3,128.3 744.4,130.7 741.3,136.7 740.7,139.9 738.4,141.6 736.6,141.6 734.6,135.5 733.5,132.1 729.8,135.2 726.7,133.6 725.8,127.5 727.8,122.6 732.5,118.7 736.6,111.3 739.3,104.3 744.7,98.6 750.1,95.8 753.9,93.3 757.6,94.6 760.9,97.8 763.6,100.1 769.0,101.7 774.5,107.1 773.8,110.9 767.7,111.3 763.6,109.9 766.3,117.7 769.7,118.7 773.1,116.8 773.8,112.9 778.5,111.6 778.5,104.3 781.9,106.1 791.4,103.5 798.8,102.4 800.8,98.6 805.5,100.9 811.0,103.5 809.6,93.7 811.6,85.0 817.0,85.9 817.0,93.7 817.7,105.3 819.1,103.5 820.4,89.5 827.2,88.2 828.5,82.2 836.6,81.2 836.0,75.2 847.5,69.8 859.6,59.6 863.7,65.8 871.8,69.8 872.5,81.2 867.7,81.2 871.8,83.6 878.6,83.1 886.7,81.7 892.1,89.5 894.8,94.6 898.8,92.1 908.3,87.3 909.0,91.2 921.8,92.5 924.5,94.6 934.0,96.6 936.0,99.7 946.2,98.6 950.2,101.7 958.3,99.7 962.4,102.4 962.4,115.5 959.7,117.7 959.0,123.2 953.6,126.1 948.9,130.2 943.5,130.2 939.4,135.5 938.0,142.8 935.3,147.4 931.3,151.8 929.9,147.4 929.9,138.0 935.3,130.2 938.7,126.1 934.7,125.2 928.6,132.3 924.5,132.9 919.8,131.5 911.7,132.3 905.6,139.2 902.2,144.0 905.6,145.1 909.7,147.4 909.0,152.9 908.3,158.0 905.6,162.0 902.2,166.4 898.2,167.7 895.5,168.6 894.1,172.2 891.7,174.0 893.8,177.4 893.8,180.8 890.0,182.5 890.0,178.3 888.0,176.6 888.3,173.8 884.0,174.5 883.3,171.7 879.2,174.9 879.9,177.4 884.4,178.0 881.9,180.0 880.3,181.6 882.6,185.7 884.0,189.7 881.9,193.5 879.9,196.8 876.5,200.2 873.1,201.3 868.4,202.9 867.1,204.2 865.0,202.3 862.3,205.3 863.3,208.2 866.4,212.4 866.8,216.1 863.7,218.1 861.0,220.4 860.7,218.2 858.0,216.5 855.6,214.8 854.2,213.9 853.3,217.2 854.8,221.4 858.7,226.8 859.9,230.3 858.8,230.3 856.0,228.4 854.6,224.1 851.9,220.7 852.5,216.5 851.1,211.0 849.5,209.6 846.5,210.3 846.5,206.7 843.8,203.2 842.1,201.0 839.3,202.0 836.6,203.2 836.0,204.6 833.9,205.3 830.3,209.3 827.5,211.0 827.5,214.5 826.9,218.2 824.7,220.1 823.8,221.2 822.2,219.0 820.1,214.5 818.3,209.6 817.4,205.7 817.3,202.9 814.3,203.4 812.3,201.3 814.1,200.2 811.4,199.2 809.6,197.6 808.9,196.7 802.4,197.0 796.5,196.4 795.4,194.3 792.0,194.9 788.6,192.9 786.6,189.7 784.6,189.7 784.2,190.6 786.6,194.7 787.7,197.6 788.6,195.9 789.3,198.5 792.4,198.3 795.1,195.5 795.5,198.2 798.4,199.5 799.9,201.1 797.2,206.0 793.7,208.2 789.6,210.3 784.9,213.1 779.9,214.8 777.8,214.9 776.8,211.7 775.8,208.9 774.0,205.3 771.7,202.4 771.1,199.1 768.6,195.8 766.3,192.7 766.1,190.4 765.3,187.6 766.3,184.9 767.7,180.0 768.0,178.6 763.6,179.6 760.3,179.5 756.9,178.8 755.9,177.4 754.6,174.3 755.3,172.2 758.2,171.3 761.6,171.0 766.3,169.5 769.7,171.3 775.1,170.4 775.1,168.2 771.7,165.8 769.7,163.9 771.7,159.6 766.7,161.2 768.4,163.4 764.3,164.9 763.0,163.0 764.3,161.8 760.9,160.8 759.2,163.6 757.7,166.2 756.6,168.6 757.6,170.8 754.4,171.7 751.5,171.7 751.5,173.1 749.8,172.2 750.8,176.6 750.1,179.1 748.1,178.3 747.4,174.9 745.2,172.2 745.4,169.9 742.7,167.7 739.7,165.3 738.4,163.6 737.4,162.6 735.6,163.4 735.8,165.5 737.7,167.1 740.7,169.7 744.0,172.8 742.0,172.2 741.3,174.0 742.0,174.9 740.9,176.6 740.2,176.6 740.7,173.1 737.9,171.3 735.6,169.9 733.2,167.7 730.9,165.1 729.2,166.2 725.8,167.0 723.3,167.3 723.3,169.9 720.1,171.3 718.6,174.0 719.3,175.4 718.1,177.1 716.3,178.6 712.9,178.8 711.4,180.0 710.4,178.6 708.9,178.0 707.0,178.3Z M475.7,102.4 482.4,107.1 487.8,110.6 489.2,112.3 485.8,117.1 481.1,113.9 477.0,113.9 475.7,115.5Z M711.6,153.7 714.3,153.3 720.8,151.4 719.7,150.7 721.3,148.1 719.4,147.4 718.7,144.4 716.7,141.1 715.0,140.4 716.3,136.5 713.6,136.2 714.7,133.9 712.3,133.9 710.9,137.2 711.6,140.4 712.5,143.3 715.0,145.1 715.0,146.7 712.9,146.7 713.3,149.0 712.0,150.1 715.0,150.9Z M705.5,150.1 710.5,149.2 710.9,145.1 711.3,143.3 708.9,142.1 705.5,144.7 706.2,147.4Z M686.6,113.9 689.3,110.9 694.7,111.6 699.4,111.6 700.6,115.5 697.4,118.7 693.3,120.5 688.6,118.7Z M735.9,176.6 740.0,176.2 739.6,178.8 735.9,177.3Z M730.1,171.3 732.1,171.3 732.0,174.5 730.4,174.9Z M730.6,168.6 731.9,167.7 731.7,170.4 730.8,170.3Z M750.8,180.8 754.6,181.1 754.2,181.6 750.9,181.3Z M762.7,181.6 765.7,180.6 765.0,181.8 763.0,182.3Z M894.5,184.9 896.1,187.6 897.5,184.9 901.8,183.8 904.2,182.3 906.9,181.6 909.4,180.5 909.7,176.6 911.0,173.6 910.1,170.8 908.3,171.9 908.0,175.7 904.5,178.3 902.9,180.0 898.8,180.8 896.1,182.8Z M908.3,169.5 909.7,167.7 910.6,163.2 915.1,165.8 915.7,167.3 912.4,169.5 909.7,168.6Z M911.0,162.0 912.8,156.0 912.4,149.6 911.7,145.1 911.0,153.9Z M881.5,200.2 882.6,197.0 883.8,197.6 882.5,201.7Z M866.0,205.7 868.4,204.6 869.1,205.3 867.1,207.2Z M826.9,221.4 827.5,219.0 829.6,222.0 828.5,223.9 827.2,223.8Z M881.7,210.3 882.3,206.7 884.2,206.9 884.0,210.3 886.7,214.5 884.0,213.4 881.9,212.4Z M884.0,222.7 886.0,220.5 888.7,219.0 890.0,222.0 888.7,224.5 886.7,223.4Z M884.0,216.5 886.0,217.2 888.7,215.4 888.3,218.2 885.7,219.4Z M877.5,220.8 880.6,216.8 880.9,217.9 877.9,221.1Z M847.9,224.6 850.8,225.2 854.6,228.7 859.0,233.6 862.3,236.5 862.1,240.1 859.6,239.6 855.6,235.6 852.6,230.2Z M861.3,241.4 865.7,241.3 869.1,241.0 873.8,242.6 873.6,243.9 867.7,243.3 863.0,242.2Z M866.4,230.2 869.5,228.5 871.8,227.9 875.2,224.8 877.2,222.7 879.9,225.2 878.2,227.5 878.6,230.8 877.9,233.3 876.1,237.3 873.8,237.6 870.0,236.3 867.7,234.2 866.4,232.2Z M880.6,239.6 879.9,236.3 881.3,231.1 885.3,230.8 888.0,230.0 886.7,231.8 881.9,231.8 883.3,233.6 885.7,233.4 883.6,234.9 884.6,238.3 883.3,238.7 882.3,235.9 881.8,239.6Z M896.1,233.3 900.2,233.3 901.5,236.7 905.6,234.5 909.7,235.7 915.1,238.0 918.4,240.3 916.4,241.4 919.1,243.0 922.5,246.5 917.8,245.8 913.7,242.6 912.4,244.7 909.7,244.6 906.3,243.5 905.6,239.6 901.5,238.2 898.8,237.6 897.5,236.0 900.2,235.3 898.2,234.9Z M875.9,243.7 879.9,243.5 885.3,243.5 888.0,243.7 890.7,243.6 886.7,246.1 881.3,245.5 875.9,244.3Z M891.4,229.5 892.8,230.2 892.1,233.3 891.3,232.2Z M892.1,236.3 895.9,236.5 894.8,237.3 892.1,236.9Z M919.8,239.6 924.5,237.9 924.8,239.0 920.5,240.7Z M929.9,241.7 935.3,244.4 936.0,245.5 930.6,242.8Z M940.7,260.1 944.8,262.7 944.1,263.3 940.7,261.0Z M958.7,256.2 960.6,256.2 960.4,257.2 958.7,257.1Z M944.3,252.7 945.2,253.0 945.9,254.8 945.1,254.5Z M872.5,262.7 873.4,268.6 874.5,274.7 874.5,281.1 878.6,282.8 881.3,281.0 886.0,281.0 889.4,278.4 893.4,277.3 896.8,277.1 900.2,279.2 902.2,282.4 903.6,281.1 905.3,278.9 905.6,283.8 907.9,284.4 909.7,288.2 913.0,289.2 915.1,288.2 916.8,289.5 919.1,287.6 921.8,286.6 922.8,282.8 923.8,279.5 925.9,274.7 926.6,270.1 925.9,267.1 923.2,264.9 921.1,262.7 919.8,259.8 916.8,258.4 915.7,254.1 915.5,252.3 913.3,251.7 912.8,249.2 911.7,246.9 910.6,249.9 910.3,253.4 909.4,256.2 906.9,256.2 905.2,254.1 902.2,252.7 904.0,249.0 901.5,248.8 898.4,247.9 896.1,249.0 894.8,250.6 894.1,252.7 892.1,252.7 890.7,251.3 888.7,252.0 886.7,254.5 884.4,255.8 884.0,257.7 880.9,259.8 877.2,260.8 874.5,262.0Z M914.7,292.5 917.1,293.2 919.5,292.9 919.1,296.7 917.5,297.8 915.7,296.7Z M952.5,281.9 954.7,284.4 956.7,285.8 960.4,287.3 959.4,289.9 958.2,292.2 956.0,294.1 955.3,292.9 955.9,291.3 954.0,290.1 955.2,287.8 954.7,285.8Z M952.5,292.2 954.7,294.3 952.6,298.4 950.6,299.1 949.9,302.2 947.5,303.6 944.1,302.4 946.2,299.1 949.5,296.7 950.9,294.5Z M733.9,50.9 739.3,43.5 748.8,39.5 755.5,43.5 748.8,55.7 743.4,64.0 737.9,60.9Z M789.3,93.7 793.4,82.6 798.8,72.5 811.0,64.0 808.3,72.5 797.4,82.6 796.1,93.7 792.0,95.0Z M848.8,50.9 854.2,35.3 861.0,50.9 854.2,57.7Z M904.2,72.5 911.0,69.8 919.1,73.6 915.1,76.2 905.6,76.2Z M783.9,41.1 793.4,35.3 802.8,37.0 797.4,43.5 786.6,43.5Z M960.4,93.7 962.4,91.6 962.4,94.6 961.0,94.6Z M508.1,204.3 509.5,204.9 508.8,206.0 508.1,205.3Z M812.0,308.4 814.1,308.8 813.7,309.8 812.3,309.6Z" fill="#445438"/>
<g clip-path="url(#gland)"><g filter="url(#b3)">
<path d="M2.5,89.5 151.2,89.5 151.2,135.5 130.9,142.8 103.9,130.2 70.1,124.6 43.0,118.7 2.5,118.7Z" fill="#545b41" opacity="1"/>
<path d="M56.5,-10.3 151.2,-10.3 151.2,87.3 56.5,87.3Z" fill="#8d8873" opacity="1"/>
<path d="M67.4,169.5 86.3,165.8 95.7,176.6 98.5,192.7 97.1,203.2 89.0,206.0 80.9,198.8 74.1,189.7 64.7,180.0Z" fill="#a99773" opacity="1"/>
<path d="M97.1,201.7 116.0,201.7 129.5,221.4 118.7,222.7 97.1,211.7Z" fill="#58683d" opacity="1"/>
<path d="M124.1,218.6 164.7,224.1 171.5,239.0 162.0,254.1 145.8,256.9 130.9,248.5 124.1,234.9Z" fill="#3e5a2f" opacity="1"/>
<path d="M164.7,232.2 186.3,239.0 180.9,259.8 167.4,271.7 156.6,274.7 153.9,259.8 164.7,248.5Z" fill="#76804a" opacity="1"/>
<path d="M121.4,237.6 128.2,240.3 139.0,254.1 143.1,265.6 145.8,281.1 148.5,291.3 143.1,324.0 126.8,319.3 132.3,284.4 135.0,259.8 126.8,248.5Z" fill="#a3926b" opacity="1"/>
<path d="M208.0,212.4 208.0,191.2 218.8,184.9 229.6,182.5 244.5,182.5 247.2,186.5 259.3,188.1 272.9,187.3 281.0,188.1 283.7,180.8 294.5,179.1 308.0,179.1 316.1,183.3 318.8,194.3 324.2,198.0 313.4,204.6 299.9,215.2 291.8,216.5 286.4,211.7 281.0,215.2 272.9,214.5 252.6,213.8 232.3,213.1Z" fill="#cdb68c" opacity="1"/>
<path d="M208.0,212.4 232.3,213.1 252.6,213.8 272.9,214.5 281.0,215.2 283.7,221.4 272.9,221.4 252.6,221.4 225.5,220.0 213.4,217.2Z" fill="#a9a06c" opacity="1"/>
<path d="M213.4,217.2 225.5,220.0 252.6,221.4 272.9,221.4 278.3,229.5 272.9,240.3 262.0,245.8 249.9,244.4 243.1,232.2 243.1,226.8 221.5,226.8Z" fill="#5f7440" opacity="1"/>
<path d="M283.7,215.9 291.8,216.5 302.6,215.2 299.9,228.1 289.1,236.3 286.4,245.8 287.7,254.1 278.3,259.8 272.9,251.3 272.9,240.3 278.3,229.5 283.7,221.4Z" fill="#b3a374" opacity="1"/>
<path d="M247.2,245.8 262.0,245.8 272.9,251.3 278.3,259.8 281.0,267.1 272.9,279.5 259.3,284.4 252.6,274.7 247.2,256.9Z" fill="#b9a77c" opacity="1"/>
<path d="M289.1,247.2 302.6,247.2 302.6,270.1 289.1,270.1Z" fill="#8f9058" opacity="1"/>
<path d="M217.4,89.5 275.6,89.5 293.1,130.2 289.1,162.0 270.2,173.1 259.3,174.9 239.1,169.5 217.4,169.5Z" fill="#516440" opacity="1"/>
<path d="M217.4,164.9 237.7,165.8 233.7,176.6 224.2,180.8 217.4,180.0Z" fill="#8c8660" opacity="1"/>
<path d="M266.1,168.6 293.1,169.5 294.5,177.4 281.0,180.8 267.5,180.0Z" fill="#8f8a60" opacity="1"/>
<path d="M275.6,89.5 313.4,89.5 367.5,80.2 421.6,80.2 475.7,89.5 489.2,124.6 448.6,153.9 421.6,162.0 408.1,153.9 381.0,149.6 347.2,147.4 313.4,142.8 293.1,135.5Z" fill="#435237" opacity="1"/>
<path d="M313.4,43.5 381.0,43.5 475.7,80.2 491.9,105.3 491.9,118.7 462.1,112.3 421.6,97.8 381.0,93.7 340.5,97.8 321.5,108.9Z" fill="#5f6249" opacity="1"/>
<path d="M294.5,153.9 313.4,149.6 333.7,152.9 348.6,157.0 362.1,160.0 378.3,162.0 391.8,164.9 386.4,175.7 372.9,178.3 362.1,176.6 351.3,179.1 335.1,179.1 321.5,180.0 308.0,178.3 299.9,171.3Z" fill="#b8a77e" opacity="1"/>
<path d="M329.6,179.1 351.3,179.1 362.1,176.6 371.6,181.6 370.2,192.0 359.4,192.7 345.9,192.0 336.4,187.3Z" fill="#9a8e72" opacity="1"/>
<path d="M321.5,197.3 329.6,183.3 337.8,188.1 347.2,192.7 358.0,194.3 358.0,203.2 348.6,207.5 340.5,222.7 335.1,221.4 329.6,204.6Z" fill="#8a8455" opacity="1"/>
<path d="M367.5,180.0 386.4,174.9 399.9,169.5 413.5,158.0 416.2,169.5 399.9,192.7 391.8,201.7 378.3,207.5 372.9,220.0 364.8,221.4 359.4,207.5 358.0,194.3 370.2,192.0Z" fill="#5f7043" opacity="1"/>
<path d="M359.4,221.4 424.3,221.4 437.8,237.6 437.8,248.5 386.4,247.2 359.4,237.6Z" fill="#4f6a3b" opacity="1"/>
<path d="M381.0,244.4 443.2,244.4 443.2,302.4 381.0,302.4Z" fill="#7a7a4c" opacity="1"/>
<path d="M389.1,262.0 399.9,257.7 412.1,254.8 421.6,259.1 428.3,265.6 429.7,274.7 422.9,280.3 412.1,276.3 401.3,277.1 390.5,274.7Z" fill="#ad744d" opacity="1"/>
<path d="M405.4,189.7 429.7,162.0 432.4,169.5 410.8,189.7Z" fill="#5d7041" opacity="1"/>
<path d="M454.0,279.5 475.7,279.5 475.7,306.4 454.0,306.4Z" fill="#687548" opacity="1"/>
<path d="M489.2,89.5 637.9,89.5 637.9,135.5 617.6,142.8 590.6,130.2 556.8,124.6 529.7,118.7 489.2,118.7Z" fill="#545b41" opacity="1"/>
<path d="M543.3,-10.3 637.9,-10.3 637.9,87.3 543.3,87.3Z" fill="#8d8873" opacity="1"/>
<path d="M554.1,169.5 573.0,165.8 582.5,176.6 585.2,192.7 583.8,203.2 575.7,206.0 567.6,198.8 560.8,189.7 551.4,180.0Z" fill="#a99773" opacity="1"/>
<path d="M583.8,201.7 602.7,201.7 616.3,221.4 605.5,222.7 583.8,211.7Z" fill="#58683d" opacity="1"/>
<path d="M610.9,218.6 651.4,224.1 658.2,239.0 648.7,254.1 632.5,256.9 617.6,248.5 610.9,234.9Z" fill="#3e5a2f" opacity="1"/>
<path d="M651.4,232.2 673.1,239.0 667.6,259.8 654.1,271.7 643.3,274.7 640.6,259.8 651.4,248.5Z" fill="#76804a" opacity="1"/>
<path d="M608.2,237.6 614.9,240.3 625.7,254.1 629.8,265.6 632.5,281.1 635.2,291.3 629.8,324.0 613.6,319.3 619.0,284.4 621.7,259.8 613.6,248.5Z" fill="#a3926b" opacity="1"/>
<path d="M694.7,212.4 694.7,191.2 705.5,184.9 716.3,182.5 731.2,182.5 733.9,186.5 746.1,188.1 759.6,187.3 767.7,188.1 770.4,180.8 781.2,179.1 794.7,179.1 802.8,183.3 805.5,194.3 811.0,198.0 800.1,204.6 786.6,215.2 778.5,216.5 773.1,211.7 767.7,215.2 759.6,214.5 739.3,213.8 719.0,213.1Z" fill="#cdb68c" opacity="1"/>
<path d="M694.7,212.4 719.0,213.1 739.3,213.8 759.6,214.5 767.7,215.2 770.4,221.4 759.6,221.4 739.3,221.4 712.3,220.0 700.1,217.2Z" fill="#a9a06c" opacity="1"/>
<path d="M700.1,217.2 712.3,220.0 739.3,221.4 759.6,221.4 765.0,229.5 759.6,240.3 748.8,245.8 736.6,244.4 729.8,232.2 729.8,226.8 708.2,226.8Z" fill="#5f7440" opacity="1"/>
<path d="M770.4,215.9 778.5,216.5 789.3,215.2 786.6,228.1 775.8,236.3 773.1,245.8 774.5,254.1 765.0,259.8 759.6,251.3 759.6,240.3 765.0,229.5 770.4,221.4Z" fill="#b3a374" opacity="1"/>
<path d="M733.9,245.8 748.8,245.8 759.6,251.3 765.0,259.8 767.7,267.1 759.6,279.5 746.1,284.4 739.3,274.7 733.9,256.9Z" fill="#b9a77c" opacity="1"/>
<path d="M775.8,247.2 789.3,247.2 789.3,270.1 775.8,270.1Z" fill="#8f9058" opacity="1"/>
<path d="M704.1,89.5 762.3,89.5 779.9,130.2 775.8,162.0 756.9,173.1 746.1,174.9 725.8,169.5 704.1,169.5Z" fill="#516440" opacity="1"/>
<path d="M704.1,164.9 724.4,165.8 720.4,176.6 710.9,180.8 704.1,180.0Z" fill="#8c8660" opacity="1"/>
<path d="M752.8,168.6 779.9,169.5 781.2,177.4 767.7,180.8 754.2,180.0Z" fill="#8f8a60" opacity="1"/>
<path d="M762.3,89.5 800.1,89.5 854.2,80.2 908.3,80.2 962.4,89.5 975.9,124.6 935.3,153.9 908.3,162.0 894.8,153.9 867.7,149.6 833.9,147.4 800.1,142.8 779.9,135.5Z" fill="#435237" opacity="1"/>
<path d="M800.1,43.5 867.7,43.5 962.4,80.2 978.6,105.3 978.6,118.7 948.9,112.3 908.3,97.8 867.7,93.7 827.2,97.8 808.3,108.9Z" fill="#5f6249" opacity="1"/>
<path d="M781.2,153.9 800.1,149.6 820.4,152.9 835.3,157.0 848.8,160.0 865.0,162.0 878.6,164.9 873.1,175.7 859.6,178.3 848.8,176.6 838.0,179.1 821.8,179.1 808.3,180.0 794.7,178.3 786.6,171.3Z" fill="#b8a77e" opacity="1"/>
<path d="M816.4,179.1 838.0,179.1 848.8,176.6 858.3,181.6 856.9,192.0 846.1,192.7 832.6,192.0 823.1,187.3Z" fill="#9a8e72" opacity="1"/>
<path d="M808.3,197.3 816.4,183.3 824.5,188.1 833.9,192.7 844.8,194.3 844.8,203.2 835.3,207.5 827.2,222.7 821.8,221.4 816.4,204.6Z" fill="#8a8455" opacity="1"/>
<path d="M854.2,180.0 873.1,174.9 886.7,169.5 900.2,158.0 902.9,169.5 886.7,192.7 878.6,201.7 865.0,207.5 859.6,220.0 851.5,221.4 846.1,207.5 844.8,194.3 856.9,192.0Z" fill="#5f7043" opacity="1"/>
<path d="M846.1,221.4 911.0,221.4 924.5,237.6 924.5,248.5 873.1,247.2 846.1,237.6Z" fill="#4f6a3b" opacity="1"/>
<path d="M867.7,244.4 929.9,244.4 929.9,302.4 867.7,302.4Z" fill="#7a7a4c" opacity="1"/>
<path d="M875.9,262.0 886.7,257.7 898.8,254.8 908.3,259.1 915.1,265.6 916.4,274.7 909.7,280.3 898.8,276.3 888.0,277.1 877.2,274.7Z" fill="#ad744d" opacity="1"/>
<path d="M892.1,189.7 916.4,162.0 919.1,169.5 897.5,189.7Z" fill="#5d7041" opacity="1"/>
<path d="M940.7,279.5 962.4,279.5 962.4,306.4 940.7,306.4Z" fill="#687548" opacity="1"/>
</g></g>
<path d="M247.2,50.9 252.6,43.5 262.0,39.5 268.8,43.5 262.0,55.7 256.6,64.0 251.2,60.9Z M302.6,93.7 306.7,82.6 312.1,72.5 324.2,64.0 321.5,72.5 310.7,82.6 309.4,93.7 305.3,95.0Z M362.1,50.9 367.5,35.3 374.3,50.9 367.5,57.7Z M297.2,41.1 306.7,35.3 316.1,37.0 310.7,43.5 299.9,43.5Z M417.5,72.5 424.3,69.8 432.4,73.6 428.3,76.2 418.9,76.2Z M110.6,66.9 124.1,68.6 129.5,54.4 144.4,35.3 148.5,21.1 130.9,15.8 110.6,30.9 114.7,50.9Z M102.5,75.2 124.1,77.7 124.1,71.4 107.9,65.8Z M74.1,74.1 83.6,77.7 90.3,72.5 83.6,66.9 75.5,68.1Z" fill="#e9ebee"/>
<path d="M133.6,57.7 140.4,43.5 151.2,26.2 171.5,21.1 189.0,10.0 205.3,26.2 216.1,32.7 209.3,47.3 206.6,66.9 206.6,85.0 199.9,95.8 202.6,97.8 191.7,105.3 183.6,112.9 178.2,115.5 174.2,130.2 167.4,127.5 163.3,118.7 160.0,108.9 163.3,97.8 157.9,91.6 153.9,72.5 140.4,69.8Z" fill="#aeb0a8"/>
<path d="M137.7,56.4 148.5,30.0 171.5,24.2 189.0,14.7 203.9,29.0 214.0,35.3 207.6,48.8 204.6,69.8 203.2,85.9 197.1,96.6 190.4,104.6 182.3,112.3 177.5,116.2 173.9,128.8 168.8,126.9 164.7,117.7 161.6,108.2 164.3,97.8 159.3,90.4 155.2,72.5 143.1,67.5Z" fill="#fbfbfb"/>
<path d="M-11.1,406.7 9.2,406.7 22.7,400.4 36.3,391.9 49.8,386.7 63.3,381.8 76.8,384.2 90.3,386.7 97.1,377.1 110.6,379.4 124.1,379.4 130.9,370.7 137.7,362.7 141.7,355.5 147.1,347.3 153.9,343.6 155.2,345.7 149.8,352.1 148.5,362.7 149.8,374.9 151.2,389.2 144.4,403.5 157.9,406.7 171.5,406.7 185.0,405.4 195.8,394.6 205.3,381.8 216.1,372.8 225.5,368.6 239.1,366.6 252.6,364.7 266.1,366.6 276.9,362.7 286.4,362.7 299.9,355.5 306.7,352.1 313.4,356.6 326.9,359.1 331.0,364.7 337.8,360.9 347.2,353.8 360.7,353.1 374.3,352.1 387.8,353.1 401.3,353.1 414.8,352.1 424.3,354.8 435.1,360.1 448.6,366.6 458.1,370.7 462.1,374.9 455.4,389.2 452.7,403.5 462.1,406.7 475.7,406.7 475.7,492.0 -11.1,492.0Z" fill="#dde2ea"/>
<path d="M733.9,50.9 739.3,43.5 748.8,39.5 755.5,43.5 748.8,55.7 743.4,64.0 737.9,60.9Z M789.3,93.7 793.4,82.6 798.8,72.5 811.0,64.0 808.3,72.5 797.4,82.6 796.1,93.7 792.0,95.0Z M848.8,50.9 854.2,35.3 861.0,50.9 854.2,57.7Z M783.9,41.1 793.4,35.3 802.8,37.0 797.4,43.5 786.6,43.5Z M904.2,72.5 911.0,69.8 919.1,73.6 915.1,76.2 905.6,76.2Z M597.3,66.9 610.9,68.6 616.3,54.4 631.1,35.3 635.2,21.1 617.6,15.8 597.3,30.9 601.4,50.9Z M589.2,75.2 610.9,77.7 610.9,71.4 594.6,65.8Z M560.8,74.1 570.3,77.7 577.1,72.5 570.3,66.9 562.2,68.1Z" fill="#e9ebee"/>
<path d="M620.3,57.7 627.1,43.5 637.9,26.2 658.2,21.1 675.8,10.0 692.0,26.2 702.8,32.7 696.0,47.3 693.3,66.9 693.3,85.0 686.6,95.8 689.3,97.8 678.5,105.3 670.3,112.9 664.9,115.5 660.9,130.2 654.1,127.5 650.1,118.7 646.7,108.9 650.1,97.8 644.7,91.6 640.6,72.5 627.1,69.8Z" fill="#aeb0a8"/>
<path d="M232.3,232.2Z" fill="#fbfbfb"/>
<path d="M475.7,406.7 495.9,406.7 509.5,400.4 523.0,391.9 536.5,386.7 550.0,381.8 563.5,384.2 577.1,386.7 583.8,377.1 597.3,379.4 610.9,379.4 617.6,370.7 624.4,362.7 628.4,355.5 633.8,347.3 640.6,343.6 642.0,345.7 636.5,352.1 635.2,362.7 636.5,374.9 637.9,389.2 631.1,403.5 644.7,406.7 658.2,406.7 671.7,405.4 682.5,394.6 692.0,381.8 702.8,372.8 712.3,368.6 725.8,366.6 739.3,364.7 752.8,366.6 763.6,362.7 773.1,362.7 786.6,355.5 793.4,352.1 800.1,356.6 813.7,359.1 817.7,364.7 824.5,360.9 833.9,353.8 847.5,353.1 861.0,352.1 874.5,353.1 888.0,353.1 901.5,352.1 911.0,354.8 921.8,360.1 935.3,366.6 944.8,370.7 948.9,374.9 942.1,389.2 939.4,403.5 948.9,406.7 962.4,406.7 962.4,492.0 475.7,492.0Z" fill="#dde2ea"/>
<path d="M25.4,128.8 34.9,126.1 43.0,128.8 49.8,134.2 55.2,140.4" stroke="#e8e8e8" stroke-width="2" fill="none" opacity=".8"/>
<path d="M512.2,128.8 521.6,126.1 529.7,128.8 536.5,134.2 541.9,140.4" stroke="#e8e8e8" stroke-width="2" fill="none" opacity=".8"/>
</g>
<g>
<use href="#pin" x="242.0" y="122.6"/>
<use href="#pin" x="243.3" y="129.1"/>
<use href="#pin" x="247.8" y="132.4"/>
<use href="#pin" x="280.6" y="142.2"/>
<use href="#pin" x="348.3" y="142.6"/>
<use href="#pin" x="262.1" y="142.9"/>
<use href="#pin" x="229.0" y="143.4"/>
<use href="#pin" x="243.5" y="144.9"/>
<use href="#pin" x="232.1" y="146.8"/>
<use href="#pin" x="273.9" y="148.5"/>
<use href="#pin" x="302.5" y="149.0"/>
<use href="#pin" x="255.5" y="150.5"/>
<use href="#pin" x="257.9" y="151.3"/>
<use href="#pin" x="227.1" y="152.3"/>
<use href="#pin" x="339.3" y="153.4"/>
<use href="#pin" x="292.3" y="153.6"/>
<use href="#pin" x="329.3" y="154.2"/>
<use href="#pin" x="228.3" y="154.2"/>
<use href="#pin" x="344.5" y="155.1"/>
<use href="#pin" x="379.0" y="156.9"/>
<use href="#pin" x="304.4" y="158.9"/>
<use href="#pin" x="305.3" y="160.7"/>
<use href="#pin" x="377.3" y="162.4"/>
<use href="#pin" x="249.2" y="162.5"/>
<use href="#pin" x="260.8" y="165.6"/>
<use href="#pin" x="381.6" y="165.7"/>
<use href="#pin" x="297.6" y="165.7"/>
<use href="#pin" x="318.5" y="166.3"/>
<use href="#pin" x="340.5" y="171.7"/>
<use href="#pin" x="321.8" y="171.8"/>
<use href="#pin" x="338.0" y="173.0"/>
<use href="#pin" x="314.4" y="177.8"/>
<use href="#pin" x="341.6" y="179.7"/>
<use href="#pin" x="392.9" y="181.3"/>
<use href="#pin" x="328.1" y="183.5"/>
<use href="#pin" x="384.7" y="185.0"/>
<use href="#pin" x="212.0" y="187.0"/>
<use href="#pin" x="209.4" y="188.6"/>
<use href="#pin" x="381.1" y="189.6"/>
<use href="#pin" x="367.1" y="190.4"/>
<use href="#pin" x="331.9" y="191.0"/>
<use href="#pin" x="208.2" y="191.1"/>
<use href="#pin" x="226.1" y="192.0"/>
<use href="#pin" x="134.6" y="192.0"/>
<use href="#pin" x="234.7" y="192.1"/>
<use href="#pin" x="393.6" y="195.8"/>
<use href="#pin" x="387.0" y="196.8"/>
<use href="#pin" x="140.4" y="205.0"/>
<use href="#pin" x="139.7" y="205.4"/>
<use href="#pin" x="284.3" y="206.6"/>
<use href="#pin" x="271.8" y="208.6"/>
<use href="#pin" x="273.5" y="213.0"/>
<use href="#pin" x="272.7" y="214.6"/>
<use href="#pin" x="282.1" y="223.7"/>
<use href="#pin" x="274.7" y="224.2"/>
<use href="#pin" x="138.5" y="233.0"/>
<use href="#pin" x="134.4" y="235.3"/>
<use href="#pin" x="267.1" y="238.8"/>
<use href="#pin" x="253.1" y="242.2"/>
<use href="#pin" x="261.9" y="245.5"/>
<use href="#pin" x="265.4" y="246.6"/>
<use href="#pin" x="275.9" y="248.2"/>
<use href="#pin" x="204.8" y="97.2"/>
<use href="#pin" x="245.1" y="109.1"/>
<use href="#pin" x="266.6" y="114.5"/>
<use href="#pin" x="323.7" y="115.3"/>
<use href="#pin" x="322.6" y="115.8"/>
<use href="#pin" x="322.2" y="116.7"/>
<use href="#pin" x="324.5" y="120.5"/>
<use href="#pin" x="325.0" y="122.0"/>
<use href="#pin" x="318.2" y="124.5"/>
<use href="#pin" x="340.6" y="127.5"/>
<use href="#pin" x="338.4" y="128.1"/>
<use href="#pin" x="263.7" y="131.2"/>
<use href="#pin" x="262.5" y="131.9"/>
<use href="#pin" x="347.8" y="132.1"/>
<use href="#pin" x="292.2" y="132.2"/>
<use href="#pin" x="410.0" y="137.8"/>
<use href="#pin" x="243.3" y="137.9"/>
<use href="#pin" x="272.8" y="139.4"/>
<use href="#pin" x="242.0" y="139.6"/>
<use href="#pin" x="272.5" y="139.7"/>
<use href="#pin" x="249.3" y="140.4"/>
<use href="#pin" x="399.7" y="140.5"/>
<use href="#pin" x="312.5" y="140.6"/>
<use href="#pin" x="399.6" y="141.1"/>
<use href="#pin" x="292.9" y="148.4"/>
<use href="#pin" x="292.8" y="148.4"/>
<use href="#pin" x="377.8" y="149.7"/>
<use href="#pin" x="377.2" y="150.0"/>
<use href="#pin" x="385.7" y="150.3"/>
<use href="#pin" x="377.0" y="151.3"/>
<use href="#pin" x="324.6" y="155.2"/>
<use href="#pin" x="378.7" y="158.0"/>
<use href="#pin" x="267.8" y="159.1"/>
<use href="#pin" x="379.0" y="159.6"/>
<use href="#pin" x="278.3" y="163.5"/>
<use href="#pin" x="385.2" y="165.6"/>
<use href="#pin" x="383.2" y="166.6"/>
<use href="#pin" x="354.8" y="171.6"/>
<use href="#pin" x="356.3" y="171.9"/>
<use href="#pin" x="390.8" y="172.9"/>
<use href="#pin" x="375.0" y="176.7"/>
<use href="#pin" x="373.5" y="177.6"/>
<use href="#pin" x="365.1" y="178.1"/>
<use href="#pin" x="95.1" y="178.6"/>
<use href="#pin" x="95.7" y="178.9"/>
<use href="#pin" x="365.2" y="180.4"/>
<use href="#pin" x="394.5" y="180.8"/>
<use href="#pin" x="309.1" y="181.1"/>
<use href="#pin" x="395.0" y="181.7"/>
<use href="#pin" x="100.4" y="182.5"/>
<use href="#pin" x="99.2" y="183.2"/>
<use href="#pin" x="135.5" y="184.3"/>
<use href="#pin" x="132.6" y="184.7"/>
<use href="#pin" x="104.6" y="185.9"/>
<use href="#pin" x="379.0" y="186.0"/>
<use href="#pin" x="104.0" y="186.7"/>
<use href="#pin" x="117.7" y="186.8"/>
<use href="#pin" x="210.4" y="188.6"/>
<use href="#pin" x="118.6" y="188.8"/>
<use href="#pin" x="211.9" y="189.6"/>
<use href="#pin" x="113.3" y="189.7"/>
<use href="#pin" x="225.8" y="189.7"/>
<use href="#pin" x="367.4" y="189.8"/>
<use href="#pin" x="223.9" y="190.2"/>
<use href="#pin" x="201.8" y="190.5"/>
<use href="#pin" x="114.8" y="190.6"/>
<use href="#pin" x="366.4" y="190.8"/>
<use href="#pin" x="241.9" y="191.0"/>
<use href="#pin" x="258.7" y="191.3"/>
<use href="#pin" x="243.9" y="192.0"/>
<use href="#pin" x="378.4" y="193.1"/>
<use href="#pin" x="377.8" y="193.6"/>
<use href="#pin" x="331.7" y="194.7"/>
<use href="#pin" x="332.4" y="196.7"/>
<use href="#pin" x="399.2" y="198.0"/>
<use href="#pin" x="399.8" y="199.1"/>
<use href="#pin" x="136.5" y="202.0"/>
<use href="#pin" x="138.6" y="203.8"/>
<use href="#pin" x="138.7" y="204.7"/>
<use href="#pin" x="140.4" y="206.9"/>
<use href="#pin" x="142.1" y="207.5"/>
<use href="#pin" x="271.8" y="212.2"/>
<use href="#pin" x="386.1" y="220.7"/>
<use href="#pin" x="247.9" y="225.8"/>
<use href="#pin" x="248.6" y="227.2"/>
<use href="#pin" x="424.4" y="227.7"/>
<use href="#pin" x="264.7" y="228.0"/>
<use href="#pin" x="266.0" y="230.0"/>
<use href="#pin" x="424.7" y="230.0"/>
<use href="#pin" x="136.2" y="230.2"/>
<use href="#pin" x="136.0" y="230.7"/>
<use href="#pin" x="159.9" y="231.1"/>
<use href="#pin" x="156.9" y="231.6"/>
<use href="#pin" x="293.1" y="232.1"/>
<use href="#pin" x="144.9" y="232.6"/>
<use href="#pin" x="144.2" y="233.1"/>
<use href="#pin" x="144.9" y="234.5"/>
<use href="#pin" x="427.1" y="236.2"/>
<use href="#pin" x="425.0" y="236.3"/>
<use href="#pin" x="249.2" y="236.4"/>
<use href="#pin" x="252.2" y="236.9"/>
<use href="#pin" x="146.4" y="237.3"/>
<use href="#pin" x="145.1" y="237.8"/>
<use href="#pin" x="147.0" y="239.4"/>
<use href="#pin" x="271.7" y="243.6"/>
<use href="#pin" x="257.7" y="252.1"/>
<use href="#pin" x="256.7" y="252.5"/>
<use href="#pin" x="275.6" y="253.5"/>
<use href="#pin" x="256.3" y="255.0"/>
<use href="#pin" x="134.5" y="255.5"/>
<use href="#pin" x="271.5" y="256.4"/>
<use href="#pin" x="270.1" y="257.6"/>
<use href="#pin" x="136.6" y="258.1"/>
<use href="#pin" x="260.1" y="259.5"/>
<use href="#pin" x="260.9" y="259.7"/>
<use href="#pin" x="262.5" y="260.4"/>
<use href="#pin" x="135.6" y="262.8"/>
<use href="#pin" x="134.7" y="263.6"/>
<use href="#pin" x="204.6" y="99.0"/>
<use href="#pin" x="246.8" y="111.6"/>
<use href="#pin" x="267.7" y="115.0"/>
<use href="#pin" x="316.5" y="126.1"/>
<use href="#pin" x="227.2" y="128.6"/>
<use href="#pin" x="339.4" y="129.2"/>
<use href="#pin" x="325.5" y="130.0"/>
<use href="#pin" x="294.1" y="133.0"/>
<use href="#pin" x="347.2" y="135.0"/>
<use href="#pin" x="410.6" y="138.9"/>
<use href="#pin" x="271.5" y="140.9"/>
<use href="#pin" x="313.8" y="141.4"/>
<use href="#pin" x="250.7" y="141.6"/>
<use href="#pin" x="399.1" y="142.3"/>
<use href="#pin" x="293.6" y="149.9"/>
<use href="#pin" x="387.7" y="152.0"/>
<use href="#pin" x="308.5" y="156.0"/>
<use href="#pin" x="326.3" y="156.0"/>
<use href="#pin" x="245.2" y="159.9"/>
<use href="#pin" x="266.6" y="160.7"/>
<use href="#pin" x="225.1" y="165.5"/>
<use href="#pin" x="280.1" y="166.0"/>
<use href="#pin" x="353.9" y="173.6"/>
<use href="#pin" x="392.6" y="174.0"/>
<use href="#pin" x="293.4" y="176.5"/>
<use href="#pin" x="93.9" y="179.5"/>
<use href="#pin" x="307.5" y="182.2"/>
<use href="#pin" x="395.2" y="183.0"/>
<use href="#pin" x="133.5" y="185.6"/>
<use href="#pin" x="199.9" y="191.0"/>
<use href="#pin" x="226.2" y="191.0"/>
<use href="#pin" x="209.9" y="191.5"/>
<use href="#pin" x="114.7" y="192.5"/>
<use href="#pin" x="242.1" y="192.7"/>
<use href="#pin" x="258.3" y="192.7"/>
<use href="#pin" x="366.0" y="192.7"/>
<use href="#pin" x="376.9" y="195.5"/>
<use href="#pin" x="133.5" y="197.5"/>
<use href="#pin" x="280.9" y="200.2"/>
<use href="#pin" x="400.1" y="200.2"/>
<use href="#pin" x="340.2" y="202.4"/>
<use href="#pin" x="272.6" y="213.6"/>
<use href="#pin" x="124.1" y="217.2"/>
<use href="#pin" x="281.2" y="220.2"/>
<use href="#pin" x="386.9" y="222.7"/>
<use href="#pin" x="135.2" y="232.4"/>
<use href="#pin" x="158.1" y="232.4"/>
<use href="#pin" x="295.0" y="234.4"/>
<use href="#pin" x="427.5" y="236.9"/>
<use href="#pin" x="250.7" y="237.8"/>
<use href="#pin" x="272.6" y="244.5"/>
<use href="#pin" x="435.1" y="247.7"/>
<use href="#pin" x="134.5" y="264.6"/>
</g>
</svg>
<div class="abs" style="left:481px;top:10px;width:38px;height:38px;background:#fff;border-radius:2px;box-shadow:0 1px 3px rgba(0,0,0,.3)"><svg class="abs" style="left:10px;top:10px" width="18" height="18" viewBox="0 0 18 18"><path d="M1,6V1.300H6M12,1.300H17V6M17,12V16.700H12M6,16.700H1V12" fill="none" stroke="#666" stroke-width="2.2"/></svg></div>
<div class="abs" style="left:481px;top:171px;width:38px;height:38px;background:#fff;border-radius:50%;box-shadow:0 1px 3px rgba(0,0,0,.3)"><svg class="abs" style="left:7px;top:7px" width="24" height="24" viewBox="0 0 24 24"><path d="M8.500,5.800L12,2.800L15.500,5.800M8.500,18.200L12,21.200L15.500,18.200M5.800,8.500L2.800,12L5.800,15.500M18.200,8.500L21.200,12L18.200,15.500" fill="none" stroke="#666" stroke-width="2"/></svg></div>
<div class="abs" style="left:481px;top:240px;width:38px;height:38px;background:#fff;border-radius:2px;box-shadow:0 1px 3px rgba(0,0,0,.3)"><svg class="abs" style="left:0;top:0" width="38" height="38" viewBox="0 0 38 38"><path d="M12.300,15.200Q19,13.400 25.700,15.200Q26.600,15.500 26.800,16.500L28,24.300Q28.100,25.700 26.900,25.900Q25.700,26 25.400,24.900L24,19.800L23.400,32.800H19.700L19,25.500L18.300,32.800H14.600L14,19.800L12.600,24.900Q12.300,26 11.100,25.900Q9.900,25.700 10,24.300L11.200,16.500Q11.400,15.500 12.300,15.200Z" fill="#fbbc04" stroke="#e09f00" stroke-width=".7" stroke-linejoin="round"/><path d="M15.400,14.600L19,20L22.600,14.600Z" fill="#e8710a"/><circle cx="19" cy="9.300" r="4.600" fill="#fbbc04" stroke="#e09f00" stroke-width=".7"/></svg></div>
<div class="abs" style="left:481px;top:307px;width:38px;height:77px;background:#fff;border-radius:2px;box-shadow:0 1px 3px rgba(0,0,0,.3)"><svg class="abs" style="left:0;top:0" width="38" height="77" viewBox="0 0 38 77"><path d="M11,19.500H27M19,11.500V27.500M11,57.800H27" stroke="#666" stroke-width="2.100" fill="none"/><path d="M5,38.800H33" stroke="#e6e6e6" stroke-width="1"/></svg></div>
<div class="abs" style="left:8.500px;top:382px;font-size:17.200px;line-height:22px;color:#fff;letter-spacing:-.35px;-webkit-text-stroke:.55px #fff;text-shadow:1px 0 0 #666,-1px 0 0 #666,0 1px 0 #666,0 -1px 0 #666,.8px .8px 0 #666,-.8px .8px 0 #666,.8px -.8px 0 #666,-.8px -.8px 0 #666;white-space:nowrap">Google</div>
<div class="abs gat" style="left:172px;width:56.500px">Kurzbefehle</div>
<div class="abs gat" style="left:232px;width:184px">Kartendaten ©2026 Bilder ©2026 NASA</div>
<div class="abs gat" style="left:419.500px;width:108.500px">Nutzungsbedingungen</div>

</div>

<!-- section 2 headers -->
<div class="sech" style="left:39px;top:702px">Main purpose(s) of the Technology (land user’s perspective)</div>
<div class="info" style="left:421px;top:702px"></div>
<svg class="chev" style="left:551px;top:697px" viewBox="0 0 24 24"><path d="M7.41 15.41L12 10.83l4.59 4.58L18 14l-6-6-6 6z"/></svg>
<div class="sech" style="left:613px;top:702px">Land use types</div>
<div class="info" style="left:714px;top:702px"></div>
<svg class="chev" style="left:1125px;top:701px" viewBox="0 0 24 24"><path d="M7.41 8.59L12 13.17l4.59-4.58L18 10l-6 6-6-6z"/></svg>
<div class="oline" style="left:16px;top:741px;width:1148px"></div>

<div class="bl" style="top:760px">reduce, prevent, restore land degradation</div>
<div class="bn" style="top:765px">655</div>
<div class="bp" style="top:765px">71.20<small>%</small></div>
<div class="bar" style="top:778px"><i style="width:330px"></i></div>
<div class="bl" style="top:807px">improve production</div>
<div class="bn" style="top:812px">457</div>
<div class="bp" style="top:812px">49.67<small>%</small></div>
<div class="bar" style="top:825px"><i style="width:230px"></i></div>
<div class="bl" style="top:854px">create beneficial economic impact</div>
<div class="bn" style="top:859px">315</div>
<div class="bp" style="top:859px">34.24<small>%</small></div>

<!-- scrollbar -->
<div class="abs" style="left:1165px;top:72px;width:3px;height:129px;border-radius:2px;background:#6b6b6b"></div>

<!-- sidebar -->
<div id="side" class="abs">
<div class="tab" style="top:0;height:154px;background:#5f574e"><svg style="top:62.500px;left:2.500px;width:24.500px;height:24.500px;fill:#fff" viewBox="0 0 24 24"><path d="M3 13h8V3H3v10zm0 8h8v-6H3v6zm10 0h8V11h-8v10zm0-18v6h8V3h-8z"/></svg></div>
<div class="tab" style="top:153px"><svg style="top:40px" viewBox="0 0 24 24"><path d="M20.500 3l-.16.030L15 5.100 9 3 3.360 4.900c-.21.070-.36.250-.36.480V20.500c0 .28.220.5.500.5l.16-.030L9 18.900l6 2.100 5.640-1.900c.21-.07.360-.25.360-.48V3.500c0-.28-.22-.5-.5-.5zM15 19l-6-2.110V5l6 2.110V19z"/></svg></div>
<div class="tab" style="top:257px"><svg style="top:40px" viewBox="0 0 24 24"><path d="M5 9.200h3V19H5zM10.600 5h2.800v14h-2.800zm5.600 8H19v6h-2.800z"/></svg></div>
<div class="tab" style="top:361px"><svg style="top:40px" viewBox="0 0 24 24"><path d="M11 2v20c-5.070-.5-9-4.790-9-10s3.930-9.500 9-10zm2.030 0v8.990H22c-.47-4.740-4.240-8.520-8.970-8.990zm0 11.010V22c4.740-.47 8.500-4.250 8.970-8.990h-8.970z"/></svg></div>
<div class="tab" style="top:465px"><svg style="top:40px" viewBox="0 0 24 24" fill-rule="evenodd"><path d="M21.940 4.880c-.18-.53-.69-.88-1.260-.88H19.600l-.31-.97C19.150 2.430 18.610 2 18 2s-1.150.43-1.290 1.040L16.400 4h-1.070c-.57 0-1.080.35-1.260.88-.19.560.04 1.170.56 1.480l.87.520L15.100 8.120c-.23.580-.04 1.250.45 1.620.5.370 1.170.35 1.640-.06L18 8.980l.81.700c.47.400 1.150.43 1.640.06.5-.37.68-1.040.45-1.620l-.39-1.240.87-.52c.51-.31.740-.92.560-1.480zM18 7c-.55 0-1-.45-1-1s.45-1 1-1 1 .45 1 1-.45 1-1 1z"/><path d="M13.490 10.510c-.43-.43-.94-.73-1.490-.93V8h-1v1.380c-.11-.01-.23-.03-.34-.03-1.020 0-2.050.39-2.830 1.170-.16.160-.3.340-.43.530L6 10.520c-1.560-.55-3.280.27-3.830 1.820-.27.750-.23 1.570.12 2.290.23.480.58.870 1 1.160-.38 1.350-.06 2.850 1 3.910s2.570 1.380 3.910 1c.29.420.68.770 1.160 1 .42.200.85.300 1.290.300.34 0 .68-.06 1.010-.17 1.560-.55 2.380-2.270 1.820-3.850l-.52-1.370c.18-.13.36-.27.53-.43.870-.87 1.240-2.040 1.140-3.170H16v-1h-1.590c-.19-.55-.49-1.060-.92-1.500zM4.670 14.290c-.25-.09-.45-.27-.57-.51s-.13-.51-.04-.76c.19-.52.760-.79 1.260-.61l3.160 1.190c-1.150.6-2.630 1.110-3.810.69zm6.320 5.650c-.25.090-.52.080-.76-.04-.24-.11-.42-.32-.51-.57-.42-1.180.09-2.650.7-3.800l1.180 3.130c.18.520-.09 1.100-.61 1.280zm1.210-5.340l-.61-1.610c0-.01-.01-.02-.02-.03-.02-.04-.04-.08-.06-.12-.02-.04-.04-.07-.07-.11-.03-.03-.06-.06-.09-.09-.03-.03-.06-.06-.1-.08-.03-.02-.07-.05-.11-.06-.04-.02-.07-.05-.12-.06-.01 0-.02-.01-.03-.02l-1.600-.6c.36-.29.790-.46 1.260-.46.53 0 1.040.21 1.410.59.730.73.770 1.880.14 2.650z"/></svg></div>
<div class="tab" style="top:569px"><svg style="top:40px" viewBox="0 0 24 24"><path d="M11.800 10.900c-2.270-.59-3-1.200-3-2.150 0-1.090 1.010-1.850 2.700-1.850 1.780 0 2.440.85 2.500 2.100h2.210c-.07-1.720-1.120-3.300-3.210-3.810V3h-3v2.160c-1.940.42-3.500 1.680-3.500 3.610 0 2.310 1.910 3.460 4.700 4.130 2.500.6 3 1.480 3 2.410 0 .69-.49 1.790-2.700 1.790-2.060 0-2.870-.92-2.980-2.100h-2.200c.12 2.190 1.760 3.420 3.680 3.830V21h3v-2.150c1.950-.37 3.500-1.500 3.500-3.550 0-2.840-2.430-3.810-4.700-4.400z"/></svg></div>
<div class="tab" style="top:673px"><svg style="top:40px" viewBox="0 0 24 24"><path d="M4 10v7h3v-7H4zm6 0v7h3v-7h-3zM2 22h19v-3H2v3zm14-12v7h3v-7h-3zm-4.500-9L2 6v2h19V6l-9.500-5z"/></svg></div>
<div class="tab" style="top:777px;height:30px"></div>

</div>
</body>
</html>
